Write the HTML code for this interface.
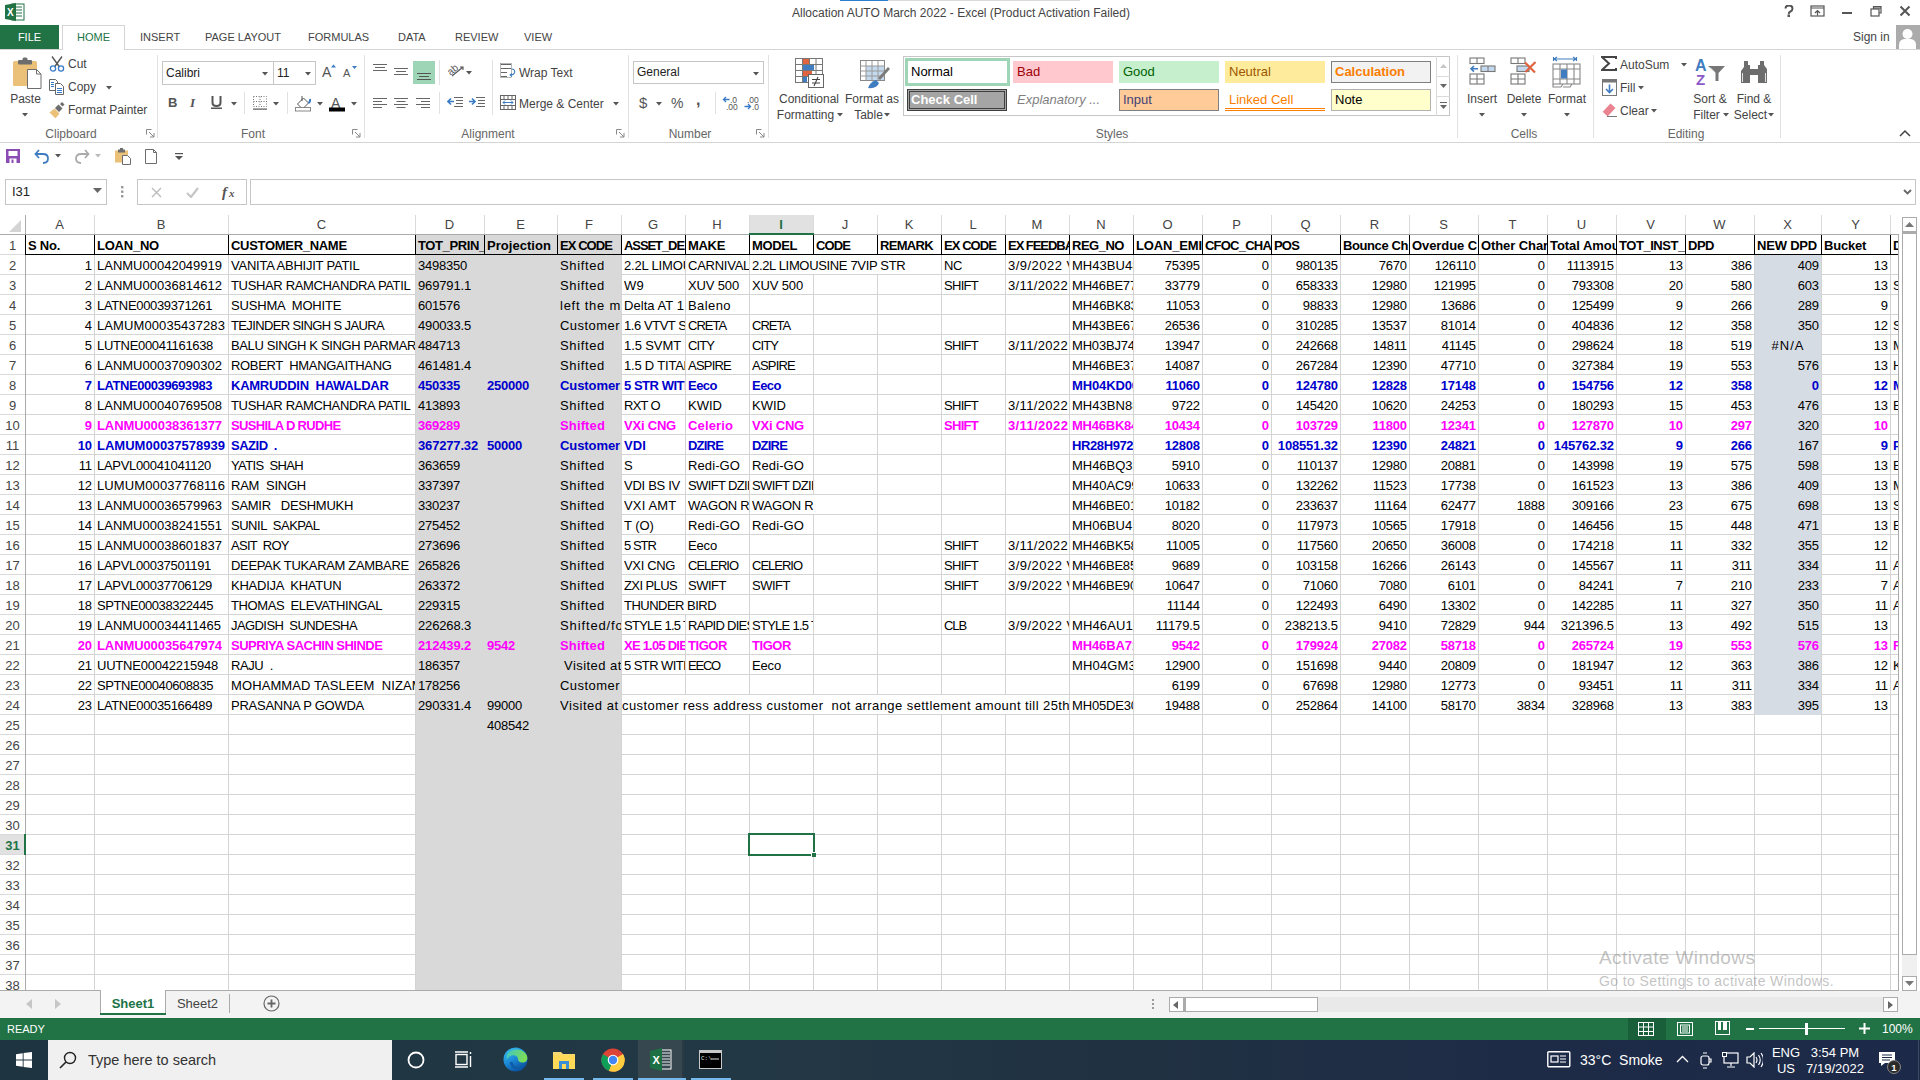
<!DOCTYPE html>
<html><head><meta charset="utf-8"><style>
html,body{margin:0;padding:0;width:1920px;height:1080px;overflow:hidden;background:#fff;font-family:'Liberation Sans', sans-serif;position:relative}
</style></head><body>
<svg style="position:absolute;left:5px;top:3px" width="20" height="18" viewBox="0 0 20 18"><rect x="7" y="1" width="12" height="16" fill="#fff" stroke="#217346" stroke-width="1"/><path d="M11 4h6M11 7h6M11 10h6M11 13h6" stroke="#217346"/><polygon points="0,2 11,0 11,18 0,16" fill="#217346"/><text x="2" y="13" font-size="10" font-weight="bold" fill="#fff" font-family="Liberation Sans">X</text></svg>
<div style="position:absolute;left:792px;top:5px;height:16px;line-height:16px;text-align:left;font-size:12px;color:#444;white-space:pre;font-family:'Liberation Sans',sans-serif">Allocation AUTO March 2022 - Excel (Product Activation Failed)</div>
<svg style="position:absolute;left:1784px;top:5px" width="10" height="12" viewBox="0 0 10 12"><path d="M1.5 3.5q0-3 3.5-3t3.5 3q0 2-2 3t-1.5 2.5" fill="none" stroke="#555" stroke-width="2"/><rect x="3.5" y="9.5" width="2.5" height="2.5" fill="#555"/></svg>
<svg style="position:absolute;left:1810px;top:5px" width="15" height="12" viewBox="0 0 15 12"><rect x="1" y="1" width="13" height="10" fill="none" stroke="#555" stroke-width="1.2"/><path d="M1 3h13" stroke="#555"/><path d="M7.5 10.5V5.5M5 8l2.5-2.5L10 8" stroke="#555" stroke-width="1.2" fill="none"/></svg>
<div style="position:absolute;left:1842px;top:12px;width:10px;height:2px;background:#555"></div>
<svg style="position:absolute;left:1870px;top:5px" width="12" height="12" viewBox="0 0 12 12"><rect x="1" y="4" width="8" height="7" fill="none" stroke="#555" stroke-width="1.2"/><path d="M3.5 4V1.5h7.5V8H9" fill="none" stroke="#555" stroke-width="1.2"/><path d="M3.5 3h7.5" stroke="#555" stroke-width="1.2"/></svg>
<svg style="position:absolute;left:1899px;top:5px" width="12" height="12" viewBox="0 0 12 12"><path d="M1.5 1.5l9 9M10.5 1.5l-9 9" stroke="#555" stroke-width="2"/></svg>
<div style="position:absolute;left:0px;top:25px;width:59px;height:25px;background:#217346"></div>
<div style="position:absolute;left:0px;top:25px;width:59px;height:25px;line-height:25px;text-align:center;font-size:11px;color:#fff;white-space:pre;">FILE</div>
<div style="position:absolute;left:62px;top:25px;width:63px;height:25px;background:#fff;border:1px solid #d4d4d4;border-bottom:none;box-sizing:border-box"></div>
<div style="position:absolute;left:0px;top:49px;width:62px;height:1px;background:#d4d4d4"></div>
<div style="position:absolute;left:125px;top:49px;width:1795px;height:1px;background:#d4d4d4"></div>
<div style="position:absolute;left:62px;top:25px;width:63px;height:25px;line-height:25px;text-align:center;font-size:11px;color:#217346;white-space:pre;">HOME</div>
<div style="position:absolute;left:140px;top:25px;height:25px;line-height:25px;text-align:left;font-size:11px;color:#444;white-space:pre;">INSERT</div>
<div style="position:absolute;left:205px;top:25px;height:25px;line-height:25px;text-align:left;font-size:11px;color:#444;white-space:pre;">PAGE LAYOUT</div>
<div style="position:absolute;left:308px;top:25px;height:25px;line-height:25px;text-align:left;font-size:11px;color:#444;white-space:pre;">FORMULAS</div>
<div style="position:absolute;left:398px;top:25px;height:25px;line-height:25px;text-align:left;font-size:11px;color:#444;white-space:pre;">DATA</div>
<div style="position:absolute;left:455px;top:25px;height:25px;line-height:25px;text-align:left;font-size:11px;color:#444;white-space:pre;">REVIEW</div>
<div style="position:absolute;left:524px;top:25px;height:25px;line-height:25px;text-align:left;font-size:11px;color:#444;white-space:pre;">VIEW</div>
<div style="position:absolute;left:1853px;top:28px;height:18px;line-height:18px;text-align:left;font-size:12px;color:#444;white-space:pre;">Sign in</div>
<div style="position:absolute;left:1896px;top:25px;width:24px;height:24px;background:#ababab"></div>
<svg style="position:absolute;left:1896px;top:25px" width="24" height="24" viewBox="0 0 24 24"><circle cx="11.5" cy="9" r="5" fill="#fff"/><path d="M3 24v-4q0-5 5-6h7q5 1 5 6v4z" fill="#fff"/></svg>
<div style="position:absolute;left:0px;top:142px;width:1920px;height:1px;background:#d4d4d4"></div>
<div style="position:absolute;left:157px;top:55px;width:1px;height:83px;background:#e1e1e1"></div>
<div style="position:absolute;left:364px;top:55px;width:1px;height:83px;background:#e1e1e1"></div>
<div style="position:absolute;left:628px;top:55px;width:1px;height:83px;background:#e1e1e1"></div>
<div style="position:absolute;left:768px;top:55px;width:1px;height:83px;background:#e1e1e1"></div>
<div style="position:absolute;left:1457px;top:55px;width:1px;height:83px;background:#e1e1e1"></div>
<div style="position:absolute;left:1593px;top:55px;width:1px;height:83px;background:#e1e1e1"></div>
<div style="position:absolute;left:1780px;top:55px;width:1px;height:83px;background:#e1e1e1"></div>
<div style="position:absolute;left:11px;top:126px;width:120px;height:16px;line-height:16px;text-align:center;font-size:12px;color:#666;white-space:pre;">Clipboard</div>
<div style="position:absolute;left:193px;top:126px;width:120px;height:16px;line-height:16px;text-align:center;font-size:12px;color:#666;white-space:pre;">Font</div>
<div style="position:absolute;left:428px;top:126px;width:120px;height:16px;line-height:16px;text-align:center;font-size:12px;color:#666;white-space:pre;">Alignment</div>
<div style="position:absolute;left:630px;top:126px;width:120px;height:16px;line-height:16px;text-align:center;font-size:12px;color:#666;white-space:pre;">Number</div>
<div style="position:absolute;left:1052px;top:126px;width:120px;height:16px;line-height:16px;text-align:center;font-size:12px;color:#666;white-space:pre;">Styles</div>
<div style="position:absolute;left:1464px;top:126px;width:120px;height:16px;line-height:16px;text-align:center;font-size:12px;color:#666;white-space:pre;">Cells</div>
<div style="position:absolute;left:1626px;top:126px;width:120px;height:16px;line-height:16px;text-align:center;font-size:12px;color:#666;white-space:pre;">Editing</div>
<svg style="position:absolute;left:146px;top:129px" width="9" height="9" viewBox="0 0 9 9"><path d="M0.5 0.5h5M0.5 0.5v5" stroke="#888" fill="none"/><path d="M3 3l5 5M8 4v4H4" stroke="#888" fill="none"/></svg>
<svg style="position:absolute;left:352px;top:129px" width="9" height="9" viewBox="0 0 9 9"><path d="M0.5 0.5h5M0.5 0.5v5" stroke="#888" fill="none"/><path d="M3 3l5 5M8 4v4H4" stroke="#888" fill="none"/></svg>
<svg style="position:absolute;left:616px;top:129px" width="9" height="9" viewBox="0 0 9 9"><path d="M0.5 0.5h5M0.5 0.5v5" stroke="#888" fill="none"/><path d="M3 3l5 5M8 4v4H4" stroke="#888" fill="none"/></svg>
<svg style="position:absolute;left:756px;top:129px" width="9" height="9" viewBox="0 0 9 9"><path d="M0.5 0.5h5M0.5 0.5v5" stroke="#888" fill="none"/><path d="M3 3l5 5M8 4v4H4" stroke="#888" fill="none"/></svg>
<svg style="position:absolute;left:1899px;top:129px" width="12" height="8" viewBox="0 0 12 8"><path d="M1 7l5-5 5 5" stroke="#444" stroke-width="1.5" fill="none"/></svg>
<svg style="position:absolute;left:12px;top:57px" width="30" height="32" viewBox="0 0 30 32"><rect x="1" y="4" width="24" height="25" rx="1.5" fill="#ebc17a"/><rect x="6" y="3" width="14" height="4.5" rx="1" fill="#6d6d6d"/><rect x="10.5" y="0.5" width="5" height="4" rx="1.5" fill="#6d6d6d"/><path d="M15.5 12.5h9l4.5 4.5v14.5h-13.5z" fill="#fff" stroke="#6d6d6d"/><path d="M24.5 12.5v4.5h4.5" fill="none" stroke="#6d6d6d"/></svg>
<div style="position:absolute;left:0px;top:92px;width:51px;height:14px;line-height:14px;text-align:center;font-size:12px;color:#444;white-space:pre;font-family:'Liberation Sans',sans-serif;">Paste</div>
<svg style="position:absolute;left:22px;top:113px" width="6" height="4" viewBox="0 0 6 4"><polygon points="0,0 6,0 3,3.5" fill="#555"/></svg>
<svg style="position:absolute;left:49px;top:56px" width="16" height="16" viewBox="0 0 16 16"><path d="M3 0.5L10.5 11M13 0.5L5.5 11" stroke="#555" stroke-width="1.4"/><circle cx="4" cy="12.5" r="2.6" fill="none" stroke="#3a7bc8" stroke-width="1.3"/><circle cx="12" cy="12.5" r="2.6" fill="none" stroke="#3a7bc8" stroke-width="1.3"/></svg>
<div style="position:absolute;left:68px;top:57px;height:14px;line-height:14px;text-align:left;font-size:12px;color:#444;white-space:pre;font-family:'Liberation Sans',sans-serif;">Cut</div>
<svg style="position:absolute;left:48px;top:79px" width="17" height="16" viewBox="0 0 17 16"><path d="M1.5 0.5h6l2 2v9h-8z" fill="#fff" stroke="#666"/><path d="M7.5 4.5h5l3 3v8h-8z" fill="#fff" stroke="#666"/><path d="M3 3.5h3M3 5.5h3M3 7.5h3M9 9.5h5M9 11.5h5M9 13.5h5" stroke="#3a7bc8"/></svg>
<div style="position:absolute;left:68px;top:80px;height:14px;line-height:14px;text-align:left;font-size:12px;color:#444;white-space:pre;font-family:'Liberation Sans',sans-serif;">Copy</div>
<svg style="position:absolute;left:106px;top:86px" width="6" height="4" viewBox="0 0 6 4"><polygon points="0,0 6,0 3,3.5" fill="#555"/></svg>
<svg style="position:absolute;left:49px;top:102px" width="17" height="16" viewBox="0 0 17 16"><path d="M0.5 10.5l5-4 5 5-4 5z" fill="#ebc17a"/><path d="M6 6l3.5-3.5 4 4L10 10z" fill="#6d6d6d"/><path d="M11 2l2-2 2.5 2.5-2 2z" fill="#6d6d6d"/></svg>
<div style="position:absolute;left:68px;top:103px;height:14px;line-height:14px;text-align:left;font-size:12px;color:#444;white-space:pre;font-family:'Liberation Sans',sans-serif;">Format Painter</div>
<div style="position:absolute;left:162px;top:61px;width:112px;height:24px;border:1px solid #c6c6c6;box-sizing:border-box;background:#fff"></div>
<div style="position:absolute;left:273px;top:61px;width:43px;height:24px;border:1px solid #c6c6c6;box-sizing:border-box;background:#fff"></div>
<div style="position:absolute;left:166px;top:66px;height:14px;line-height:14px;text-align:left;font-size:12px;color:#222;white-space:pre;font-family:'Liberation Sans',sans-serif;">Calibri</div>
<svg style="position:absolute;left:262px;top:72px" width="6" height="4" viewBox="0 0 6 4"><polygon points="0,0 6,0 3,3.5" fill="#555"/></svg>
<div style="position:absolute;left:277px;top:66px;height:14px;line-height:14px;text-align:left;font-size:12px;color:#222;white-space:pre;font-family:'Liberation Sans',sans-serif;">11</div>
<svg style="position:absolute;left:305px;top:72px" width="6" height="4" viewBox="0 0 6 4"><polygon points="0,0 6,0 3,3.5" fill="#555"/></svg>
<svg style="position:absolute;left:322px;top:64px" width="14" height="14" viewBox="0 0 14 14"><text x="0" y="13" font-size="14" fill="#555" font-family="Liberation Sans">A</text><polygon points="9,3.5 14,3.5 11.5,0.5" fill="#3a7bc8"/></svg>
<svg style="position:absolute;left:343px;top:66px" width="14" height="12" viewBox="0 0 14 12"><text x="0" y="11" font-size="11" fill="#555" font-family="Liberation Sans">A</text><polygon points="9,0 14,0 11.5,3" fill="#3a7bc8"/></svg>
<div style="position:absolute;left:168px;top:95px;height:15px;line-height:15px;text-align:left;font-size:13px;color:#555;white-space:pre;font-family:'Liberation Sans',sans-serif;font-weight:bold">B</div>
<div style="position:absolute;left:190px;top:95px;height:15px;line-height:15px;text-align:left;font-size:13px;color:#555;white-space:pre;font-family:'Liberation Sans',sans-serif;font-style:italic;font-family:Liberation Serif,serif;font-weight:bold">I</div>
<svg style="position:absolute;left:211px;top:96px" width="11" height="13" viewBox="0 0 11 13"><path d="M1.5 0v6.5q0 3.5 4 3.5t4-3.5V0" fill="none" stroke="#555" stroke-width="2"/><rect x="0" y="11.5" width="11" height="1.5" fill="#555"/></svg>
<svg style="position:absolute;left:231px;top:102px" width="6" height="4" viewBox="0 0 6 4"><polygon points="0,0 6,0 3,3.5" fill="#555"/></svg>
<div style="position:absolute;left:244px;top:92px;width:1px;height:22px;background:#e1e1e1"></div>
<svg style="position:absolute;left:253px;top:96px" width="14" height="14" viewBox="0 0 14 14"><path d="M0.5 0.5h13v10h-13zM7 0.5v10M0.5 5.5h13" fill="none" stroke="#777" stroke-dasharray="1,1.5"/><rect x="0" y="12.5" width="14" height="1.2" fill="#555"/></svg>
<svg style="position:absolute;left:273px;top:102px" width="6" height="4" viewBox="0 0 6 4"><polygon points="0,0 6,0 3,3.5" fill="#555"/></svg>
<div style="position:absolute;left:287px;top:92px;width:1px;height:22px;background:#e1e1e1"></div>
<svg style="position:absolute;left:295px;top:95px" width="17" height="17" viewBox="0 0 17 17"><path d="M2.5 9L8.5 3l5 5-6 6z" fill="#fff" stroke="#555"/><path d="M7 1v5" stroke="#555"/><path d="M13.5 8q2-1 1.5-4" stroke="#3a7bc8" stroke-width="2" fill="none"/><rect x="0.5" y="12.5" width="15" height="3.5" fill="#fff" stroke="#888"/></svg>
<svg style="position:absolute;left:317px;top:102px" width="6" height="4" viewBox="0 0 6 4"><polygon points="0,0 6,0 3,3.5" fill="#555"/></svg>
<svg style="position:absolute;left:329px;top:96px" width="17" height="16" viewBox="0 0 17 16"><text x="2" y="12" font-size="14" fill="#555" font-family="Liberation Sans">A</text><rect x="0" y="11.5" width="16" height="4" fill="#000"/></svg>
<svg style="position:absolute;left:351px;top:102px" width="6" height="4" viewBox="0 0 6 4"><polygon points="0,0 6,0 3,3.5" fill="#555"/></svg>
<svg style="position:absolute;left:373px;top:63px" width="14" height="10" viewBox="0 0 14 10"><path d="M0 1.5h14M2 4.5h10M0 7.5h14" stroke="#666" stroke-width="1"/></svg>
<div style="position:absolute;left:413px;top:61px;width:22px;height:23px;background:#9fd5b7"></div>
<svg style="position:absolute;left:394px;top:67px" width="14" height="10" viewBox="0 0 14 10"><path d="M0 1.5h14M2 4.5h10M0 7.5h14" stroke="#666" stroke-width="1"/></svg>
<svg style="position:absolute;left:417px;top:71px" width="14" height="10" viewBox="0 0 14 10"><path d="M0 2.5h14M2 5.5h10M0 8.5h14" stroke="#555" stroke-width="1"/></svg>
<div style="position:absolute;left:439px;top:60px;width:1px;height:25px;background:#e1e1e1"></div>
<svg style="position:absolute;left:447px;top:63px" width="18" height="16" viewBox="0 0 18 16"><text x="1" y="10" font-size="10" fill="#555" font-family="Liberation Sans" transform="rotate(-40 6 8)">ab</text><path d="M5 13L16 4M13 4h3v3" stroke="#555" stroke-width="1.1" fill="none"/></svg>
<svg style="position:absolute;left:466px;top:71px" width="6" height="4" viewBox="0 0 6 4"><polygon points="0,0 6,0 3,3.5" fill="#555"/></svg>
<div style="position:absolute;left:492px;top:60px;width:1px;height:55px;background:#e1e1e1"></div>
<svg style="position:absolute;left:500px;top:63px" width="17" height="15" viewBox="0 0 17 15"><path d="M1 1.5h10M1 5.5h10M1 9.5h6M1 13.5h6" stroke="#666" stroke-width="1.2"/><rect x="0.5" y="0.5" width="11" height="14" fill="none" stroke="#888" stroke-width="0.6"/><path d="M11.5 6q4 0 3 4-1 2-4 2M12 10.5l-1.8 1.5 1.8 1.5" stroke="#3a7bc8" stroke-width="1.1" fill="none"/></svg>
<div style="position:absolute;left:519px;top:66px;height:14px;line-height:14px;text-align:left;font-size:12px;color:#444;white-space:pre;font-family:'Liberation Sans',sans-serif;">Wrap Text</div>
<svg style="position:absolute;left:373px;top:97px" width="14" height="12" viewBox="0 0 14 12"><path d="M0 1.5h14M0 4.5h9M0 7.5h14M0 10.5h9" stroke="#666" stroke-width="1"/></svg>
<svg style="position:absolute;left:394px;top:97px" width="14" height="12" viewBox="0 0 14 12"><path d="M0 1.5h14M2.5 4.5h9M0 7.5h14M2.5 10.5h9" stroke="#666" stroke-width="1"/></svg>
<svg style="position:absolute;left:416px;top:97px" width="14" height="12" viewBox="0 0 14 12"><path d="M0 1.5h14M5 4.5h9M0 7.5h14M5 10.5h9" stroke="#666" stroke-width="1"/></svg>
<div style="position:absolute;left:439px;top:92px;width:1px;height:22px;background:#e1e1e1"></div>
<svg style="position:absolute;left:447px;top:96px" width="16" height="12" viewBox="0 0 16 12"><path d="M7 1.5h9M9 4.5h7M9 7.5h7M7 10.5h9" stroke="#666" stroke-width="1"/><path d="M1 5.5h6M4 2.5l-3 3 3 3" stroke="#3a7bc8" stroke-width="1.6" fill="none"/></svg>
<svg style="position:absolute;left:469px;top:96px" width="16" height="12" viewBox="0 0 16 12"><path d="M7 1.5h9M9 4.5h7M9 7.5h7M7 10.5h9" stroke="#666" stroke-width="1"/><path d="M0 5.5h6M3 2.5l3 3-3 3" stroke="#3a7bc8" stroke-width="1.6" fill="none"/></svg>
<svg style="position:absolute;left:500px;top:95px" width="16" height="15" viewBox="0 0 16 15"><rect x="0.5" y="0.5" width="15" height="14" fill="#fff" stroke="#666"/><path d="M0.5 4.5h15M0.5 10.5h15M8 0.5v4M8 10.5v4M4 0.5v4M4 10.5v4M12 0.5v4M12 10.5v4" stroke="#666"/><path d="M3 7.5h10M5 5.5l-2 2 2 2M11 5.5l2 2-2 2" stroke="#3a7bc8" fill="none"/></svg>
<div style="position:absolute;left:519px;top:97px;height:14px;line-height:14px;text-align:left;font-size:12px;color:#444;white-space:pre;font-family:'Liberation Sans',sans-serif;">Merge &amp; Center</div>
<svg style="position:absolute;left:613px;top:102px" width="6" height="4" viewBox="0 0 6 4"><polygon points="0,0 6,0 3,3.5" fill="#555"/></svg>
<div style="position:absolute;left:633px;top:61px;width:131px;height:23px;border:1px solid #c6c6c6;box-sizing:border-box;background:#fff"></div>
<div style="position:absolute;left:637px;top:65px;height:14px;line-height:14px;text-align:left;font-size:12px;color:#222;white-space:pre;font-family:'Liberation Sans',sans-serif;">General</div>
<svg style="position:absolute;left:753px;top:72px" width="6" height="4" viewBox="0 0 6 4"><polygon points="0,0 6,0 3,3.5" fill="#555"/></svg>
<div style="position:absolute;left:639px;top:94px;height:17px;line-height:17px;text-align:left;font-size:15px;color:#555;white-space:pre;font-family:'Liberation Sans',sans-serif;">$</div>
<svg style="position:absolute;left:656px;top:102px" width="6" height="4" viewBox="0 0 6 4"><polygon points="0,0 6,0 3,3.5" fill="#555"/></svg>
<div style="position:absolute;left:671px;top:95px;height:16px;line-height:16px;text-align:left;font-size:14px;color:#555;white-space:pre;font-family:'Liberation Sans',sans-serif;">%</div>
<div style="position:absolute;left:696px;top:92px;height:16px;line-height:16px;text-align:left;font-size:16px;color:#555;white-space:pre;font-family:'Liberation Sans',sans-serif;font-weight:bold">,</div>
<div style="position:absolute;left:715px;top:92px;width:1px;height:22px;background:#e1e1e1"></div>
<svg style="position:absolute;left:722px;top:95px" width="17" height="16" viewBox="0 0 17 16"><text x="8" y="7.5" font-size="8.5" fill="#555" font-family="Liberation Sans">.0</text><text x="4" y="15" font-size="8.5" fill="#555" font-family="Liberation Sans">.00</text><path d="M1.5 4.5h6M4 2l-2.5 2.5L4 7" stroke="#3a7bc8" fill="none" stroke-width="1.3"/></svg>
<svg style="position:absolute;left:744px;top:95px" width="17" height="16" viewBox="0 0 17 16"><text x="3" y="7.5" font-size="8.5" fill="#555" font-family="Liberation Sans">.00</text><text x="8" y="15" font-size="8.5" fill="#555" font-family="Liberation Sans">.0</text><path d="M0.5 11.5h6M4 9l2.5 2.5L4 14" stroke="#3a7bc8" fill="none" stroke-width="1.3"/></svg>
<svg style="position:absolute;left:794px;top:57px" width="33" height="32" viewBox="0 0 33 32"><g fill="none" stroke="#777" stroke-width="1"><rect x="1.5" y="1.5" width="27" height="24"/><path d="M8.5 1.5v24M15.5 1.5v24M22 1.5v24M1.5 7.5h27M1.5 13.5h27M1.5 19.5h27"/></g><rect x="9" y="2" width="6" height="5" fill="#e0643f"/><rect x="9" y="8" width="11" height="5" fill="#3f7dc0"/><rect x="9" y="14" width="9" height="5" fill="#e0643f"/><rect x="9" y="20" width="4" height="5" fill="#3f7dc0"/><rect x="14.5" y="17.5" width="15" height="13" fill="#fff" stroke="#666"/><path d="M18 22.5h8M18 26h8M20 29l4-9" stroke="#444" stroke-width="1.1"/></svg>
<div style="position:absolute;left:749px;top:92px;width:120px;height:14px;line-height:14px;text-align:center;font-size:12px;color:#444;white-space:pre;font-family:'Liberation Sans',sans-serif;">Conditional</div>
<div style="position:absolute;left:749px;top:108px;width:113px;height:14px;line-height:14px;text-align:center;font-size:12px;color:#444;white-space:pre;font-family:'Liberation Sans',sans-serif;">Formatting</div>
<svg style="position:absolute;left:837px;top:113px" width="6" height="4" viewBox="0 0 6 4"><polygon points="0,0 6,0 3,3.5" fill="#555"/></svg>
<svg style="position:absolute;left:859px;top:59px" width="32" height="30" viewBox="0 0 32 30"><rect x="1.5" y="1.5" width="24" height="20" fill="#fff" stroke="#888"/><rect x="7" y="7" width="18" height="14" fill="#c5d9ee"/><path d="M7 1.5v20M13 1.5v20M19 1.5v20M1.5 7h24M1.5 12h24M1.5 17h24" stroke="#999"/><path d="M19 19l10-11 2 2-10 11z" fill="#7a7a7a"/><path d="M9 29q2-6 8-8l3 3q-2 6-11 5z" fill="#3f7dc0"/></svg>
<div style="position:absolute;left:812px;top:92px;width:120px;height:14px;line-height:14px;text-align:center;font-size:12px;color:#444;white-space:pre;font-family:'Liberation Sans',sans-serif;">Format as</div>
<div style="position:absolute;left:812px;top:108px;width:113px;height:14px;line-height:14px;text-align:center;font-size:12px;color:#444;white-space:pre;font-family:'Liberation Sans',sans-serif;">Table</div>
<svg style="position:absolute;left:884px;top:113px" width="6" height="4" viewBox="0 0 6 4"><polygon points="0,0 6,0 3,3.5" fill="#555"/></svg>
<div style="position:absolute;left:903px;top:56px;width:547px;height:60px;border:1px solid #c6c6c6;box-sizing:border-box;background:#fff"></div>
<div style="position:absolute;left:905px;top:58px;width:105px;height:28px;border:3px solid #9fd5b7;box-sizing:border-box;background:#fff"></div>
<div style="position:absolute;left:911px;top:64px;height:15px;line-height:15px;text-align:left;font-size:13px;color:#000;white-space:pre;font-family:'Liberation Sans',sans-serif;">Normal</div>
<div style="position:absolute;left:1013px;top:61px;width:100px;height:22px;background:#ffc7ce"></div>
<div style="position:absolute;left:1017px;top:64px;height:15px;line-height:15px;text-align:left;font-size:13px;color:#9c0006;white-space:pre;font-family:'Liberation Sans',sans-serif;">Bad</div>
<div style="position:absolute;left:1119px;top:61px;width:100px;height:22px;background:#c6efce"></div>
<div style="position:absolute;left:1123px;top:64px;height:15px;line-height:15px;text-align:left;font-size:13px;color:#006100;white-space:pre;font-family:'Liberation Sans',sans-serif;">Good</div>
<div style="position:absolute;left:1225px;top:61px;width:100px;height:22px;background:#ffeb9c"></div>
<div style="position:absolute;left:1229px;top:64px;height:15px;line-height:15px;text-align:left;font-size:13px;color:#9c5700;white-space:pre;font-family:'Liberation Sans',sans-serif;">Neutral</div>
<div style="position:absolute;left:1331px;top:61px;width:100px;height:22px;background:#f2f2f2;border:1px solid #7f7f7f;box-sizing:border-box"></div>
<div style="position:absolute;left:1335px;top:64px;height:15px;line-height:15px;text-align:left;font-size:13px;color:#fa7d00;white-space:pre;font-family:'Liberation Sans',sans-serif;font-weight:bold">Calculation</div>
<div style="position:absolute;left:907px;top:89px;width:100px;height:22px;background:#a5a5a5;border:3px double #3f3f3f;box-sizing:border-box"></div>
<div style="position:absolute;left:911px;top:92px;height:15px;line-height:15px;text-align:left;font-size:13px;color:#fff;white-space:pre;font-family:'Liberation Sans',sans-serif;font-weight:bold">Check Cell</div>
<div style="position:absolute;left:1017px;top:92px;height:15px;line-height:15px;text-align:left;font-size:13px;color:#7f7f7f;white-space:pre;font-family:'Liberation Sans',sans-serif;font-style:italic">Explanatory ...</div>
<div style="position:absolute;left:1119px;top:89px;width:100px;height:22px;background:#ffcc99;border:1px solid #7f7f7f;box-sizing:border-box"></div>
<div style="position:absolute;left:1123px;top:92px;height:15px;line-height:15px;text-align:left;font-size:13px;color:#3f3f76;white-space:pre;font-family:'Liberation Sans',sans-serif;">Input</div>
<div style="position:absolute;left:1229px;top:92px;height:15px;line-height:15px;text-align:left;font-size:13px;color:#fa7d00;white-space:pre;font-family:'Liberation Sans',sans-serif;">Linked Cell</div>
<div style="position:absolute;left:1225px;top:108px;width:100px;height:3px;border-top:1px solid #ff8001;border-bottom:1px solid #ff8001;box-sizing:border-box"></div>
<div style="position:absolute;left:1331px;top:89px;width:100px;height:22px;background:#ffffcc;border:1px solid #b2b2b2;box-sizing:border-box"></div>
<div style="position:absolute;left:1335px;top:92px;height:15px;line-height:15px;text-align:left;font-size:13px;color:#000;white-space:pre;font-family:'Liberation Sans',sans-serif;">Note</div>
<div style="position:absolute;left:1436px;top:56px;width:14px;height:60px;border-left:1px solid #dadada;box-sizing:border-box"></div>
<div style="position:absolute;left:1436px;top:76px;width:14px;height:1px;background:#dadada"></div>
<div style="position:absolute;left:1436px;top:96px;width:14px;height:1px;background:#dadada"></div>
<svg style="position:absolute;left:1440px;top:64px" width="7" height="4" viewBox="0 0 7 4"><polygon points="0,4 3.5,0 7,4" fill="#c6c6c6"/></svg>
<svg style="position:absolute;left:1440px;top:84px" width="7" height="4" viewBox="0 0 7 4"><polygon points="0,0 7,0 3.5,4" fill="#666"/></svg>
<svg style="position:absolute;left:1440px;top:102px" width="7" height="7" viewBox="0 0 7 7"><rect x="0" y="0" width="7" height="1" fill="#666"/><polygon points="0,3 7,3 3.5,7" fill="#666"/></svg>
<svg style="position:absolute;left:1469px;top:57px" width="28" height="29" viewBox="0 0 28 29"><g fill="none" stroke="#777" stroke-width="1.1"><rect x="1" y="1" width="14" height="5.5"/><path d="M8 1v5.5"/><rect x="1" y="17" width="14" height="10"/><path d="M8 17v10M1 22h14"/></g><rect x="12" y="9" width="14" height="5.5" fill="#c5d9ee" stroke="#777" stroke-width="1.1"/><path d="M19 9v5.5" stroke="#777"/><path d="M2 11.8h7M5 9l-3 2.8 3 2.8" stroke="#3f7dc0" stroke-width="1.6" fill="none"/></svg>
<div style="position:absolute;left:1442px;top:92px;width:80px;height:14px;line-height:14px;text-align:center;font-size:12px;color:#444;white-space:pre;font-family:'Liberation Sans',sans-serif;">Insert</div>
<svg style="position:absolute;left:1479px;top:113px" width="6" height="4" viewBox="0 0 6 4"><polygon points="0,0 6,0 3,3.5" fill="#555"/></svg>
<svg style="position:absolute;left:1510px;top:57px" width="32" height="30" viewBox="0 0 32 30"><g fill="none" stroke="#777" stroke-width="1.1"><rect x="1" y="1" width="14" height="5.5"/><path d="M8 1v5.5"/><rect x="1" y="17" width="14" height="10"/><path d="M8 17v10M1 22h14"/></g><rect x="7" y="9" width="12" height="5.5" fill="#c5d9ee" stroke="#777" stroke-width="1.1"/><path d="M14 11l8-6M14 5l10 9M24 5l-11 10" stroke="none"/><path d="M15 5.5l10 10M25.5 5l-10 10" stroke="#e0643f" stroke-width="2.2"/></svg>
<div style="position:absolute;left:1484px;top:92px;width:80px;height:14px;line-height:14px;text-align:center;font-size:12px;color:#444;white-space:pre;font-family:'Liberation Sans',sans-serif;">Delete</div>
<svg style="position:absolute;left:1521px;top:113px" width="6" height="4" viewBox="0 0 6 4"><polygon points="0,0 6,0 3,3.5" fill="#555"/></svg>
<svg style="position:absolute;left:1552px;top:56px" width="30" height="33" viewBox="0 0 30 33"><path d="M1.5 1v4M24.5 1v4M2 3h22M5 1l-3 2 3 2M21 1l3 2-3 2" stroke="#3f7dc0" stroke-width="1.1" fill="none"/><g fill="none" stroke="#888" stroke-width="1.1"><rect x="1" y="8" width="27" height="20"/><path d="M8 8v20M15 8v20M22 8v20M1 13h27M1 23h27M1 28l0 3h8l2-3M11 31h7l2-3"/></g><rect x="9" y="13.5" width="6" height="9" fill="#3f7dc0"/></svg>
<div style="position:absolute;left:1527px;top:92px;width:80px;height:14px;line-height:14px;text-align:center;font-size:12px;color:#444;white-space:pre;font-family:'Liberation Sans',sans-serif;">Format</div>
<svg style="position:absolute;left:1564px;top:113px" width="6" height="4" viewBox="0 0 6 4"><polygon points="0,0 6,0 3,3.5" fill="#555"/></svg>
<svg style="position:absolute;left:1601px;top:56px" width="16" height="15" viewBox="0 0 16 15"><path d="M15 3V1H1l7 6.5L1 14h14v-2" fill="none" stroke="#444" stroke-width="2"/></svg>
<div style="position:absolute;left:1620px;top:58px;height:14px;line-height:14px;text-align:left;font-size:12px;color:#444;white-space:pre;font-family:'Liberation Sans',sans-serif;">AutoSum</div>
<svg style="position:absolute;left:1681px;top:63px" width="6" height="4" viewBox="0 0 6 4"><polygon points="0,0 6,0 3,3.5" fill="#555"/></svg>
<svg style="position:absolute;left:1602px;top:79px" width="15" height="17" viewBox="0 0 15 17"><rect x="0.5" y="0.5" width="14" height="16" fill="#fff" stroke="#777"/><rect x="0.5" y="0.5" width="14" height="3" fill="#777"/><path d="M7.5 5.5v8M4 10l3.5 3.5L11 10" stroke="#3f7dc0" stroke-width="1.6" fill="none"/></svg>
<div style="position:absolute;left:1620px;top:81px;height:14px;line-height:14px;text-align:left;font-size:12px;color:#444;white-space:pre;font-family:'Liberation Sans',sans-serif;">Fill</div>
<svg style="position:absolute;left:1638px;top:86px" width="6" height="4" viewBox="0 0 6 4"><polygon points="0,0 6,0 3,3.5" fill="#555"/></svg>
<svg style="position:absolute;left:1602px;top:102px" width="16" height="15" viewBox="0 0 16 15"><path d="M0.5 10L8.5 1.5l5 4.5-8 8.5z" fill="#e8838f"/><path d="M0.5 10l4 4" stroke="#fff" stroke-width="0.8"/><path d="M5 14.5h10" stroke="#777"/></svg>
<div style="position:absolute;left:1620px;top:104px;height:14px;line-height:14px;text-align:left;font-size:12px;color:#444;white-space:pre;font-family:'Liberation Sans',sans-serif;">Clear</div>
<svg style="position:absolute;left:1651px;top:109px" width="6" height="4" viewBox="0 0 6 4"><polygon points="0,0 6,0 3,3.5" fill="#555"/></svg>
<svg style="position:absolute;left:1695px;top:58px" width="32" height="28" viewBox="0 0 32 28"><text x="0" y="13" font-size="16" font-weight="bold" font-family="Liberation Sans" fill="#3f7dc0">A</text><text x="1" y="27" font-size="15" font-weight="bold" font-family="Liberation Sans" fill="#8b58c9">Z</text><path d="M13 8h17l-6.5 7v8h-3v-8z" fill="#777"/><path d="M15 9.5l5 5" stroke="#fff" stroke-width="0.8"/></svg>
<div style="position:absolute;left:1650px;top:92px;width:120px;height:14px;line-height:14px;text-align:center;font-size:12px;color:#444;white-space:pre;font-family:'Liberation Sans',sans-serif;">Sort &amp;</div>
<div style="position:absolute;left:1650px;top:108px;width:113px;height:14px;line-height:14px;text-align:center;font-size:12px;color:#444;white-space:pre;font-family:'Liberation Sans',sans-serif;">Filter</div>
<svg style="position:absolute;left:1723px;top:113px" width="6" height="4" viewBox="0 0 6 4"><polygon points="0,0 6,0 3,3.5" fill="#555"/></svg>
<svg style="position:absolute;left:1740px;top:59px" width="28" height="25" viewBox="0 0 28 25"><path d="M4 2h4v4h2v18H1V12l3-4z" fill="#6d6d6d"/><path d="M20 2h4v4l3 4v14h-9V6h2z" fill="#6d6d6d"/><rect x="10" y="10" width="8" height="6" fill="#6d6d6d"/><path d="M2.5 14v9M25.5 14v9" stroke="#fff" stroke-width="0.8"/></svg>
<div style="position:absolute;left:1694px;top:92px;width:120px;height:14px;line-height:14px;text-align:center;font-size:12px;color:#444;white-space:pre;font-family:'Liberation Sans',sans-serif;">Find &amp;</div>
<div style="position:absolute;left:1694px;top:108px;width:113px;height:14px;line-height:14px;text-align:center;font-size:12px;color:#444;white-space:pre;font-family:'Liberation Sans',sans-serif;">Select</div>
<svg style="position:absolute;left:1768px;top:113px" width="6" height="4" viewBox="0 0 6 4"><polygon points="0,0 6,0 3,3.5" fill="#555"/></svg>
<div style="position:absolute;left:840px;top:0px;width:48px;height:1px;background:#2b7cd3"></div>
<div style="position:absolute;left:888px;top:0px;width:192px;height:1px;background:#d9d9d9"></div>
<svg style="position:absolute;left:6px;top:149px" width="14" height="14" viewBox="0 0 14 14"><path d="M0 0h14v14H0z" fill="#8b4cb4"/><rect x="2.5" y="2" width="9" height="5" fill="#fff"/><rect x="3.5" y="9.5" width="7" height="4.5" fill="#fff"/><rect x="5.5" y="10.5" width="2" height="3.5" fill="#8b4cb4"/></svg>
<svg style="position:absolute;left:34px;top:148px" width="16" height="16" viewBox="0 0 16 16"><path d="M5 2L1.5 6 5 10" fill="none" stroke="#3f7dc0" stroke-width="1.8"/><path d="M2 6h7q5 0 5 4.5T9 15" fill="none" stroke="#3f7dc0" stroke-width="1.8"/></svg>
<svg style="position:absolute;left:55px;top:154px" width="6" height="4" viewBox="0 0 6 4"><polygon points="0,0 6,0 3,3.5" fill="#555"/></svg>
<svg style="position:absolute;left:74px;top:148px" width="16" height="16" viewBox="0 0 16 16"><path d="M11 2l3.5 4L11 10" fill="none" stroke="#aaa" stroke-width="1.8"/><path d="M14 6H7Q2 6 2 10.5T7 15" fill="none" stroke="#aaa" stroke-width="1.8"/></svg>
<svg style="position:absolute;left:95px;top:154px" width="6" height="4" viewBox="0 0 6 4"><polygon points="0,0 6,0 3,3.5" fill="#bbb"/></svg>
<svg style="position:absolute;left:115px;top:148px" width="16" height="17" viewBox="0 0 16 17"><rect x="0" y="2.5" width="13" height="12" fill="#ebc17a"/><rect x="3" y="1.5" width="7" height="3" fill="#6d6d6d"/><rect x="5" y="0" width="3" height="2" fill="#6d6d6d"/><path d="M7.5 7.5h5l3 3v6h-8z" fill="#fff" stroke="#6d6d6d"/></svg>
<svg style="position:absolute;left:145px;top:149px" width="12" height="15" viewBox="0 0 12 15"><path d="M0.5 0.5h8l3 3v11h-11z" fill="#fff" stroke="#6d6d6d"/><path d="M8.5 0.5v3h3" fill="none" stroke="#6d6d6d"/></svg>
<svg style="position:absolute;left:175px;top:153px" width="8" height="8" viewBox="0 0 8 8"><rect x="0" y="0" width="8" height="1.2" fill="#555"/><polygon points="0,3 8,3 4,7" fill="#555"/></svg>
<div style="position:absolute;left:5px;top:179px;width:102px;height:26px;border:1px solid #c6c6c6;box-sizing:border-box;background:#fff"></div>
<div style="position:absolute;left:12px;top:184px;height:16px;line-height:16px;text-align:left;font-size:13px;color:#222;white-space:pre;font-family:'Liberation Sans',sans-serif;">I31</div>
<svg style="position:absolute;left:93px;top:188px" width="9" height="5" viewBox="0 0 9 5"><polygon points="0,0 9,0 4.5,5" fill="#666"/></svg>
<svg style="position:absolute;left:121px;top:186px" width="3" height="12" viewBox="0 0 3 12"><rect x="0" y="0" width="2.4" height="2.4" fill="#999"/><rect x="0" y="4.5" width="2.4" height="2.4" fill="#999"/><rect x="0" y="9" width="2.4" height="2.4" fill="#999"/></svg>
<div style="position:absolute;left:137px;top:179px;width:110px;height:26px;border:1px solid #c6c6c6;box-sizing:border-box;background:#fff"></div>
<svg style="position:absolute;left:151px;top:187px" width="11" height="11" viewBox="0 0 11 11"><path d="M1 1l9 9M10 1l-9 9" stroke="#bbb" stroke-width="1.4"/></svg>
<svg style="position:absolute;left:186px;top:187px" width="13" height="11" viewBox="0 0 13 11"><path d="M1 6l4 4 7-9" stroke="#c6c6c6" stroke-width="2.2" fill="none"/></svg>
<div style="position:absolute;left:222px;top:183px;height:18px;line-height:18px;text-align:left;font-size:15px;color:#555;white-space:pre;font-family:'Liberation Serif',serif;font-style:italic;font-weight:bold">f</div>
<div style="position:absolute;left:229px;top:186px;height:14px;line-height:14px;text-align:left;font-size:11px;color:#555;white-space:pre;font-family:'Liberation Serif',serif;font-style:italic;font-weight:bold">x</div>
<div style="position:absolute;left:250px;top:179px;width:1666px;height:26px;border:1px solid #c6c6c6;box-sizing:border-box;background:#fff"></div>
<svg style="position:absolute;left:1903px;top:189px" width="9" height="6" viewBox="0 0 9 6"><path d="M1 1l3.5 3.5L8 1" stroke="#666" stroke-width="1.8" fill="none"/></svg>
<div style="position:absolute;left:0px;top:215px;width:1898px;height:775px;background:#fff;overflow:hidden"></div>
<div style="position:absolute;left:94px;top:235px;width:1px;height:755px;background:#d4d4d4"></div>
<div style="position:absolute;left:228px;top:235px;width:1px;height:755px;background:#d4d4d4"></div>
<div style="position:absolute;left:415px;top:235px;width:1px;height:755px;background:#d4d4d4"></div>
<div style="position:absolute;left:484px;top:235px;width:1px;height:755px;background:#d4d4d4"></div>
<div style="position:absolute;left:557px;top:235px;width:1px;height:755px;background:#d4d4d4"></div>
<div style="position:absolute;left:621px;top:235px;width:1px;height:755px;background:#d4d4d4"></div>
<div style="position:absolute;left:685px;top:235px;width:1px;height:755px;background:#d4d4d4"></div>
<div style="position:absolute;left:749px;top:235px;width:1px;height:755px;background:#d4d4d4"></div>
<div style="position:absolute;left:813px;top:235px;width:1px;height:755px;background:#d4d4d4"></div>
<div style="position:absolute;left:877px;top:235px;width:1px;height:755px;background:#d4d4d4"></div>
<div style="position:absolute;left:941px;top:235px;width:1px;height:755px;background:#d4d4d4"></div>
<div style="position:absolute;left:1005px;top:235px;width:1px;height:755px;background:#d4d4d4"></div>
<div style="position:absolute;left:1069px;top:235px;width:1px;height:755px;background:#d4d4d4"></div>
<div style="position:absolute;left:1133px;top:235px;width:1px;height:755px;background:#d4d4d4"></div>
<div style="position:absolute;left:1202px;top:235px;width:1px;height:755px;background:#d4d4d4"></div>
<div style="position:absolute;left:1271px;top:235px;width:1px;height:755px;background:#d4d4d4"></div>
<div style="position:absolute;left:1340px;top:235px;width:1px;height:755px;background:#d4d4d4"></div>
<div style="position:absolute;left:1409px;top:235px;width:1px;height:755px;background:#d4d4d4"></div>
<div style="position:absolute;left:1478px;top:235px;width:1px;height:755px;background:#d4d4d4"></div>
<div style="position:absolute;left:1547px;top:235px;width:1px;height:755px;background:#d4d4d4"></div>
<div style="position:absolute;left:1616px;top:235px;width:1px;height:755px;background:#d4d4d4"></div>
<div style="position:absolute;left:1685px;top:235px;width:1px;height:755px;background:#d4d4d4"></div>
<div style="position:absolute;left:1754px;top:235px;width:1px;height:755px;background:#d4d4d4"></div>
<div style="position:absolute;left:1821px;top:235px;width:1px;height:755px;background:#d4d4d4"></div>
<div style="position:absolute;left:1890px;top:235px;width:1px;height:755px;background:#d4d4d4"></div>
<div style="position:absolute;left:26px;top:254px;width:1872px;height:1px;background:#d4d4d4"></div>
<div style="position:absolute;left:26px;top:274px;width:1872px;height:1px;background:#d4d4d4"></div>
<div style="position:absolute;left:26px;top:294px;width:1872px;height:1px;background:#d4d4d4"></div>
<div style="position:absolute;left:26px;top:314px;width:1872px;height:1px;background:#d4d4d4"></div>
<div style="position:absolute;left:26px;top:334px;width:1872px;height:1px;background:#d4d4d4"></div>
<div style="position:absolute;left:26px;top:354px;width:1872px;height:1px;background:#d4d4d4"></div>
<div style="position:absolute;left:26px;top:374px;width:1872px;height:1px;background:#d4d4d4"></div>
<div style="position:absolute;left:26px;top:394px;width:1872px;height:1px;background:#d4d4d4"></div>
<div style="position:absolute;left:26px;top:414px;width:1872px;height:1px;background:#d4d4d4"></div>
<div style="position:absolute;left:26px;top:434px;width:1872px;height:1px;background:#d4d4d4"></div>
<div style="position:absolute;left:26px;top:454px;width:1872px;height:1px;background:#d4d4d4"></div>
<div style="position:absolute;left:26px;top:474px;width:1872px;height:1px;background:#d4d4d4"></div>
<div style="position:absolute;left:26px;top:494px;width:1872px;height:1px;background:#d4d4d4"></div>
<div style="position:absolute;left:26px;top:514px;width:1872px;height:1px;background:#d4d4d4"></div>
<div style="position:absolute;left:26px;top:534px;width:1872px;height:1px;background:#d4d4d4"></div>
<div style="position:absolute;left:26px;top:554px;width:1872px;height:1px;background:#d4d4d4"></div>
<div style="position:absolute;left:26px;top:574px;width:1872px;height:1px;background:#d4d4d4"></div>
<div style="position:absolute;left:26px;top:594px;width:1872px;height:1px;background:#d4d4d4"></div>
<div style="position:absolute;left:26px;top:614px;width:1872px;height:1px;background:#d4d4d4"></div>
<div style="position:absolute;left:26px;top:634px;width:1872px;height:1px;background:#d4d4d4"></div>
<div style="position:absolute;left:26px;top:654px;width:1872px;height:1px;background:#d4d4d4"></div>
<div style="position:absolute;left:26px;top:674px;width:1872px;height:1px;background:#d4d4d4"></div>
<div style="position:absolute;left:26px;top:694px;width:1872px;height:1px;background:#d4d4d4"></div>
<div style="position:absolute;left:26px;top:714px;width:1872px;height:1px;background:#d4d4d4"></div>
<div style="position:absolute;left:26px;top:734px;width:1872px;height:1px;background:#d4d4d4"></div>
<div style="position:absolute;left:26px;top:754px;width:1872px;height:1px;background:#d4d4d4"></div>
<div style="position:absolute;left:26px;top:774px;width:1872px;height:1px;background:#d4d4d4"></div>
<div style="position:absolute;left:26px;top:794px;width:1872px;height:1px;background:#d4d4d4"></div>
<div style="position:absolute;left:26px;top:814px;width:1872px;height:1px;background:#d4d4d4"></div>
<div style="position:absolute;left:26px;top:834px;width:1872px;height:1px;background:#d4d4d4"></div>
<div style="position:absolute;left:26px;top:854px;width:1872px;height:1px;background:#d4d4d4"></div>
<div style="position:absolute;left:26px;top:874px;width:1872px;height:1px;background:#d4d4d4"></div>
<div style="position:absolute;left:26px;top:894px;width:1872px;height:1px;background:#d4d4d4"></div>
<div style="position:absolute;left:26px;top:914px;width:1872px;height:1px;background:#d4d4d4"></div>
<div style="position:absolute;left:26px;top:934px;width:1872px;height:1px;background:#d4d4d4"></div>
<div style="position:absolute;left:26px;top:954px;width:1872px;height:1px;background:#d4d4d4"></div>
<div style="position:absolute;left:26px;top:974px;width:1872px;height:1px;background:#d4d4d4"></div>
<div style="position:absolute;left:416px;top:235px;width:205px;height:755px;background:#d9d9d9"></div>
<div style="position:absolute;left:1755px;top:255px;width:66px;height:460px;background:#d6dce4"></div>
<div style="position:absolute;left:94px;top:215px;width:1px;height:19px;background:#dadada"></div>
<div style="position:absolute;left:228px;top:215px;width:1px;height:19px;background:#dadada"></div>
<div style="position:absolute;left:415px;top:215px;width:1px;height:19px;background:#dadada"></div>
<div style="position:absolute;left:484px;top:215px;width:1px;height:19px;background:#dadada"></div>
<div style="position:absolute;left:557px;top:215px;width:1px;height:19px;background:#dadada"></div>
<div style="position:absolute;left:621px;top:215px;width:1px;height:19px;background:#dadada"></div>
<div style="position:absolute;left:685px;top:215px;width:1px;height:19px;background:#dadada"></div>
<div style="position:absolute;left:749px;top:215px;width:1px;height:19px;background:#dadada"></div>
<div style="position:absolute;left:813px;top:215px;width:1px;height:19px;background:#dadada"></div>
<div style="position:absolute;left:877px;top:215px;width:1px;height:19px;background:#dadada"></div>
<div style="position:absolute;left:941px;top:215px;width:1px;height:19px;background:#dadada"></div>
<div style="position:absolute;left:1005px;top:215px;width:1px;height:19px;background:#dadada"></div>
<div style="position:absolute;left:1069px;top:215px;width:1px;height:19px;background:#dadada"></div>
<div style="position:absolute;left:1133px;top:215px;width:1px;height:19px;background:#dadada"></div>
<div style="position:absolute;left:1202px;top:215px;width:1px;height:19px;background:#dadada"></div>
<div style="position:absolute;left:1271px;top:215px;width:1px;height:19px;background:#dadada"></div>
<div style="position:absolute;left:1340px;top:215px;width:1px;height:19px;background:#dadada"></div>
<div style="position:absolute;left:1409px;top:215px;width:1px;height:19px;background:#dadada"></div>
<div style="position:absolute;left:1478px;top:215px;width:1px;height:19px;background:#dadada"></div>
<div style="position:absolute;left:1547px;top:215px;width:1px;height:19px;background:#dadada"></div>
<div style="position:absolute;left:1616px;top:215px;width:1px;height:19px;background:#dadada"></div>
<div style="position:absolute;left:1685px;top:215px;width:1px;height:19px;background:#dadada"></div>
<div style="position:absolute;left:1754px;top:215px;width:1px;height:19px;background:#dadada"></div>
<div style="position:absolute;left:1821px;top:215px;width:1px;height:19px;background:#dadada"></div>
<div style="position:absolute;left:1890px;top:215px;width:1px;height:19px;background:#dadada"></div>
<div style="position:absolute;left:0px;top:254px;width:25px;height:1px;background:#dadada"></div>
<div style="position:absolute;left:0px;top:274px;width:25px;height:1px;background:#dadada"></div>
<div style="position:absolute;left:0px;top:294px;width:25px;height:1px;background:#dadada"></div>
<div style="position:absolute;left:0px;top:314px;width:25px;height:1px;background:#dadada"></div>
<div style="position:absolute;left:0px;top:334px;width:25px;height:1px;background:#dadada"></div>
<div style="position:absolute;left:0px;top:354px;width:25px;height:1px;background:#dadada"></div>
<div style="position:absolute;left:0px;top:374px;width:25px;height:1px;background:#dadada"></div>
<div style="position:absolute;left:0px;top:394px;width:25px;height:1px;background:#dadada"></div>
<div style="position:absolute;left:0px;top:414px;width:25px;height:1px;background:#dadada"></div>
<div style="position:absolute;left:0px;top:434px;width:25px;height:1px;background:#dadada"></div>
<div style="position:absolute;left:0px;top:454px;width:25px;height:1px;background:#dadada"></div>
<div style="position:absolute;left:0px;top:474px;width:25px;height:1px;background:#dadada"></div>
<div style="position:absolute;left:0px;top:494px;width:25px;height:1px;background:#dadada"></div>
<div style="position:absolute;left:0px;top:514px;width:25px;height:1px;background:#dadada"></div>
<div style="position:absolute;left:0px;top:534px;width:25px;height:1px;background:#dadada"></div>
<div style="position:absolute;left:0px;top:554px;width:25px;height:1px;background:#dadada"></div>
<div style="position:absolute;left:0px;top:574px;width:25px;height:1px;background:#dadada"></div>
<div style="position:absolute;left:0px;top:594px;width:25px;height:1px;background:#dadada"></div>
<div style="position:absolute;left:0px;top:614px;width:25px;height:1px;background:#dadada"></div>
<div style="position:absolute;left:0px;top:634px;width:25px;height:1px;background:#dadada"></div>
<div style="position:absolute;left:0px;top:654px;width:25px;height:1px;background:#dadada"></div>
<div style="position:absolute;left:0px;top:674px;width:25px;height:1px;background:#dadada"></div>
<div style="position:absolute;left:0px;top:694px;width:25px;height:1px;background:#dadada"></div>
<div style="position:absolute;left:0px;top:714px;width:25px;height:1px;background:#dadada"></div>
<div style="position:absolute;left:0px;top:734px;width:25px;height:1px;background:#dadada"></div>
<div style="position:absolute;left:0px;top:754px;width:25px;height:1px;background:#dadada"></div>
<div style="position:absolute;left:0px;top:774px;width:25px;height:1px;background:#dadada"></div>
<div style="position:absolute;left:0px;top:794px;width:25px;height:1px;background:#dadada"></div>
<div style="position:absolute;left:0px;top:814px;width:25px;height:1px;background:#dadada"></div>
<div style="position:absolute;left:0px;top:834px;width:25px;height:1px;background:#dadada"></div>
<div style="position:absolute;left:0px;top:854px;width:25px;height:1px;background:#dadada"></div>
<div style="position:absolute;left:0px;top:874px;width:25px;height:1px;background:#dadada"></div>
<div style="position:absolute;left:0px;top:894px;width:25px;height:1px;background:#dadada"></div>
<div style="position:absolute;left:0px;top:914px;width:25px;height:1px;background:#dadada"></div>
<div style="position:absolute;left:0px;top:934px;width:25px;height:1px;background:#dadada"></div>
<div style="position:absolute;left:0px;top:954px;width:25px;height:1px;background:#dadada"></div>
<div style="position:absolute;left:0px;top:974px;width:25px;height:1px;background:#dadada"></div>
<div style="position:absolute;left:0px;top:234px;width:1898px;height:1px;background:#ababab"></div>
<div style="position:absolute;left:25px;top:215px;width:1px;height:775px;background:#ababab"></div>
<svg style="position:absolute;left:8px;top:219px" width="14" height="14"><polygon points="13,1 13,13 1,13" fill="#d4d4d4"/></svg>
<div style="position:absolute;left:750px;top:215px;width:63px;height:19px;background:#e1e1e1"></div>
<div style="position:absolute;left:749px;top:233px;width:65px;height:2px;background:#217346"></div>
<div style="position:absolute;left:0px;top:835px;width:24px;height:19px;background:#e1e1e1"></div>
<div style="position:absolute;left:24px;top:834px;width:2px;height:21px;background:#217346"></div>
<div style="position:absolute;left:25px;top:215px;width:69px;height:19px;line-height:20px;text-align:center;font-size:13px;font-family:'Liberation Sans', sans-serif;color:#444">A</div>
<div style="position:absolute;left:94px;top:215px;width:134px;height:19px;line-height:20px;text-align:center;font-size:13px;font-family:'Liberation Sans', sans-serif;color:#444">B</div>
<div style="position:absolute;left:228px;top:215px;width:187px;height:19px;line-height:20px;text-align:center;font-size:13px;font-family:'Liberation Sans', sans-serif;color:#444">C</div>
<div style="position:absolute;left:415px;top:215px;width:69px;height:19px;line-height:20px;text-align:center;font-size:13px;font-family:'Liberation Sans', sans-serif;color:#444">D</div>
<div style="position:absolute;left:484px;top:215px;width:73px;height:19px;line-height:20px;text-align:center;font-size:13px;font-family:'Liberation Sans', sans-serif;color:#444">E</div>
<div style="position:absolute;left:557px;top:215px;width:64px;height:19px;line-height:20px;text-align:center;font-size:13px;font-family:'Liberation Sans', sans-serif;color:#444">F</div>
<div style="position:absolute;left:621px;top:215px;width:64px;height:19px;line-height:20px;text-align:center;font-size:13px;font-family:'Liberation Sans', sans-serif;color:#444">G</div>
<div style="position:absolute;left:685px;top:215px;width:64px;height:19px;line-height:20px;text-align:center;font-size:13px;font-family:'Liberation Sans', sans-serif;color:#444">H</div>
<div style="position:absolute;left:749px;top:215px;width:64px;height:19px;line-height:20px;text-align:center;font-size:13px;font-family:'Liberation Sans', sans-serif;color:#217346;font-weight:bold">I</div>
<div style="position:absolute;left:813px;top:215px;width:64px;height:19px;line-height:20px;text-align:center;font-size:13px;font-family:'Liberation Sans', sans-serif;color:#444">J</div>
<div style="position:absolute;left:877px;top:215px;width:64px;height:19px;line-height:20px;text-align:center;font-size:13px;font-family:'Liberation Sans', sans-serif;color:#444">K</div>
<div style="position:absolute;left:941px;top:215px;width:64px;height:19px;line-height:20px;text-align:center;font-size:13px;font-family:'Liberation Sans', sans-serif;color:#444">L</div>
<div style="position:absolute;left:1005px;top:215px;width:64px;height:19px;line-height:20px;text-align:center;font-size:13px;font-family:'Liberation Sans', sans-serif;color:#444">M</div>
<div style="position:absolute;left:1069px;top:215px;width:64px;height:19px;line-height:20px;text-align:center;font-size:13px;font-family:'Liberation Sans', sans-serif;color:#444">N</div>
<div style="position:absolute;left:1133px;top:215px;width:69px;height:19px;line-height:20px;text-align:center;font-size:13px;font-family:'Liberation Sans', sans-serif;color:#444">O</div>
<div style="position:absolute;left:1202px;top:215px;width:69px;height:19px;line-height:20px;text-align:center;font-size:13px;font-family:'Liberation Sans', sans-serif;color:#444">P</div>
<div style="position:absolute;left:1271px;top:215px;width:69px;height:19px;line-height:20px;text-align:center;font-size:13px;font-family:'Liberation Sans', sans-serif;color:#444">Q</div>
<div style="position:absolute;left:1340px;top:215px;width:69px;height:19px;line-height:20px;text-align:center;font-size:13px;font-family:'Liberation Sans', sans-serif;color:#444">R</div>
<div style="position:absolute;left:1409px;top:215px;width:69px;height:19px;line-height:20px;text-align:center;font-size:13px;font-family:'Liberation Sans', sans-serif;color:#444">S</div>
<div style="position:absolute;left:1478px;top:215px;width:69px;height:19px;line-height:20px;text-align:center;font-size:13px;font-family:'Liberation Sans', sans-serif;color:#444">T</div>
<div style="position:absolute;left:1547px;top:215px;width:69px;height:19px;line-height:20px;text-align:center;font-size:13px;font-family:'Liberation Sans', sans-serif;color:#444">U</div>
<div style="position:absolute;left:1616px;top:215px;width:69px;height:19px;line-height:20px;text-align:center;font-size:13px;font-family:'Liberation Sans', sans-serif;color:#444">V</div>
<div style="position:absolute;left:1685px;top:215px;width:69px;height:19px;line-height:20px;text-align:center;font-size:13px;font-family:'Liberation Sans', sans-serif;color:#444">W</div>
<div style="position:absolute;left:1754px;top:215px;width:67px;height:19px;line-height:20px;text-align:center;font-size:13px;font-family:'Liberation Sans', sans-serif;color:#444">X</div>
<div style="position:absolute;left:1821px;top:215px;width:69px;height:19px;line-height:20px;text-align:center;font-size:13px;font-family:'Liberation Sans', sans-serif;color:#444">Y</div>
<div style="position:absolute;left:1890px;top:215px;width:69px;height:19px;line-height:20px;text-align:center;font-size:13px;font-family:'Liberation Sans', sans-serif;color:#444">Z</div>
<div style="position:absolute;left:0;top:236px;width:25px;height:19px;line-height:20px;text-align:center;font-size:13px;font-family:'Liberation Sans', sans-serif;color:#444">1</div>
<div style="position:absolute;left:0;top:256px;width:25px;height:19px;line-height:20px;text-align:center;font-size:13px;font-family:'Liberation Sans', sans-serif;color:#444">2</div>
<div style="position:absolute;left:0;top:276px;width:25px;height:19px;line-height:20px;text-align:center;font-size:13px;font-family:'Liberation Sans', sans-serif;color:#444">3</div>
<div style="position:absolute;left:0;top:296px;width:25px;height:19px;line-height:20px;text-align:center;font-size:13px;font-family:'Liberation Sans', sans-serif;color:#444">4</div>
<div style="position:absolute;left:0;top:316px;width:25px;height:19px;line-height:20px;text-align:center;font-size:13px;font-family:'Liberation Sans', sans-serif;color:#444">5</div>
<div style="position:absolute;left:0;top:336px;width:25px;height:19px;line-height:20px;text-align:center;font-size:13px;font-family:'Liberation Sans', sans-serif;color:#444">6</div>
<div style="position:absolute;left:0;top:356px;width:25px;height:19px;line-height:20px;text-align:center;font-size:13px;font-family:'Liberation Sans', sans-serif;color:#444">7</div>
<div style="position:absolute;left:0;top:376px;width:25px;height:19px;line-height:20px;text-align:center;font-size:13px;font-family:'Liberation Sans', sans-serif;color:#444">8</div>
<div style="position:absolute;left:0;top:396px;width:25px;height:19px;line-height:20px;text-align:center;font-size:13px;font-family:'Liberation Sans', sans-serif;color:#444">9</div>
<div style="position:absolute;left:0;top:416px;width:25px;height:19px;line-height:20px;text-align:center;font-size:13px;font-family:'Liberation Sans', sans-serif;color:#444">10</div>
<div style="position:absolute;left:0;top:436px;width:25px;height:19px;line-height:20px;text-align:center;font-size:13px;font-family:'Liberation Sans', sans-serif;color:#444">11</div>
<div style="position:absolute;left:0;top:456px;width:25px;height:19px;line-height:20px;text-align:center;font-size:13px;font-family:'Liberation Sans', sans-serif;color:#444">12</div>
<div style="position:absolute;left:0;top:476px;width:25px;height:19px;line-height:20px;text-align:center;font-size:13px;font-family:'Liberation Sans', sans-serif;color:#444">13</div>
<div style="position:absolute;left:0;top:496px;width:25px;height:19px;line-height:20px;text-align:center;font-size:13px;font-family:'Liberation Sans', sans-serif;color:#444">14</div>
<div style="position:absolute;left:0;top:516px;width:25px;height:19px;line-height:20px;text-align:center;font-size:13px;font-family:'Liberation Sans', sans-serif;color:#444">15</div>
<div style="position:absolute;left:0;top:536px;width:25px;height:19px;line-height:20px;text-align:center;font-size:13px;font-family:'Liberation Sans', sans-serif;color:#444">16</div>
<div style="position:absolute;left:0;top:556px;width:25px;height:19px;line-height:20px;text-align:center;font-size:13px;font-family:'Liberation Sans', sans-serif;color:#444">17</div>
<div style="position:absolute;left:0;top:576px;width:25px;height:19px;line-height:20px;text-align:center;font-size:13px;font-family:'Liberation Sans', sans-serif;color:#444">18</div>
<div style="position:absolute;left:0;top:596px;width:25px;height:19px;line-height:20px;text-align:center;font-size:13px;font-family:'Liberation Sans', sans-serif;color:#444">19</div>
<div style="position:absolute;left:0;top:616px;width:25px;height:19px;line-height:20px;text-align:center;font-size:13px;font-family:'Liberation Sans', sans-serif;color:#444">20</div>
<div style="position:absolute;left:0;top:636px;width:25px;height:19px;line-height:20px;text-align:center;font-size:13px;font-family:'Liberation Sans', sans-serif;color:#444">21</div>
<div style="position:absolute;left:0;top:656px;width:25px;height:19px;line-height:20px;text-align:center;font-size:13px;font-family:'Liberation Sans', sans-serif;color:#444">22</div>
<div style="position:absolute;left:0;top:676px;width:25px;height:19px;line-height:20px;text-align:center;font-size:13px;font-family:'Liberation Sans', sans-serif;color:#444">23</div>
<div style="position:absolute;left:0;top:696px;width:25px;height:19px;line-height:20px;text-align:center;font-size:13px;font-family:'Liberation Sans', sans-serif;color:#444">24</div>
<div style="position:absolute;left:0;top:716px;width:25px;height:19px;line-height:20px;text-align:center;font-size:13px;font-family:'Liberation Sans', sans-serif;color:#444">25</div>
<div style="position:absolute;left:0;top:736px;width:25px;height:19px;line-height:20px;text-align:center;font-size:13px;font-family:'Liberation Sans', sans-serif;color:#444">26</div>
<div style="position:absolute;left:0;top:756px;width:25px;height:19px;line-height:20px;text-align:center;font-size:13px;font-family:'Liberation Sans', sans-serif;color:#444">27</div>
<div style="position:absolute;left:0;top:776px;width:25px;height:19px;line-height:20px;text-align:center;font-size:13px;font-family:'Liberation Sans', sans-serif;color:#444">28</div>
<div style="position:absolute;left:0;top:796px;width:25px;height:19px;line-height:20px;text-align:center;font-size:13px;font-family:'Liberation Sans', sans-serif;color:#444">29</div>
<div style="position:absolute;left:0;top:816px;width:25px;height:19px;line-height:20px;text-align:center;font-size:13px;font-family:'Liberation Sans', sans-serif;color:#444">30</div>
<div style="position:absolute;left:0;top:836px;width:25px;height:19px;line-height:20px;text-align:center;font-size:13px;font-family:'Liberation Sans', sans-serif;color:#217346;font-weight:bold">31</div>
<div style="position:absolute;left:0;top:856px;width:25px;height:19px;line-height:20px;text-align:center;font-size:13px;font-family:'Liberation Sans', sans-serif;color:#444">32</div>
<div style="position:absolute;left:0;top:876px;width:25px;height:19px;line-height:20px;text-align:center;font-size:13px;font-family:'Liberation Sans', sans-serif;color:#444">33</div>
<div style="position:absolute;left:0;top:896px;width:25px;height:19px;line-height:20px;text-align:center;font-size:13px;font-family:'Liberation Sans', sans-serif;color:#444">34</div>
<div style="position:absolute;left:0;top:916px;width:25px;height:19px;line-height:20px;text-align:center;font-size:13px;font-family:'Liberation Sans', sans-serif;color:#444">35</div>
<div style="position:absolute;left:0;top:936px;width:25px;height:19px;line-height:20px;text-align:center;font-size:13px;font-family:'Liberation Sans', sans-serif;color:#444">36</div>
<div style="position:absolute;left:0;top:956px;width:25px;height:19px;line-height:20px;text-align:center;font-size:13px;font-family:'Liberation Sans', sans-serif;color:#444">37</div>
<div style="position:absolute;left:0;top:976px;width:25px;height:19px;line-height:20px;text-align:center;font-size:13px;font-family:'Liberation Sans', sans-serif;color:#444">38</div>
<div style="position:absolute;left:26px;top:254px;width:1872px;height:1px;background:#000"></div>
<div style="position:absolute;left:94px;top:235px;width:1px;height:20px;background:#000"></div>
<div style="position:absolute;left:228px;top:235px;width:1px;height:20px;background:#000"></div>
<div style="position:absolute;left:415px;top:235px;width:1px;height:20px;background:#000"></div>
<div style="position:absolute;left:484px;top:235px;width:1px;height:20px;background:#000"></div>
<div style="position:absolute;left:557px;top:235px;width:1px;height:20px;background:#000"></div>
<div style="position:absolute;left:621px;top:235px;width:1px;height:20px;background:#000"></div>
<div style="position:absolute;left:685px;top:235px;width:1px;height:20px;background:#000"></div>
<div style="position:absolute;left:749px;top:235px;width:1px;height:20px;background:#000"></div>
<div style="position:absolute;left:813px;top:235px;width:1px;height:20px;background:#000"></div>
<div style="position:absolute;left:877px;top:235px;width:1px;height:20px;background:#000"></div>
<div style="position:absolute;left:941px;top:235px;width:1px;height:20px;background:#000"></div>
<div style="position:absolute;left:1005px;top:235px;width:1px;height:20px;background:#000"></div>
<div style="position:absolute;left:1069px;top:235px;width:1px;height:20px;background:#000"></div>
<div style="position:absolute;left:1133px;top:235px;width:1px;height:20px;background:#000"></div>
<div style="position:absolute;left:1202px;top:235px;width:1px;height:20px;background:#000"></div>
<div style="position:absolute;left:1271px;top:235px;width:1px;height:20px;background:#000"></div>
<div style="position:absolute;left:1340px;top:235px;width:1px;height:20px;background:#000"></div>
<div style="position:absolute;left:1409px;top:235px;width:1px;height:20px;background:#000"></div>
<div style="position:absolute;left:1478px;top:235px;width:1px;height:20px;background:#000"></div>
<div style="position:absolute;left:1547px;top:235px;width:1px;height:20px;background:#000"></div>
<div style="position:absolute;left:1616px;top:235px;width:1px;height:20px;background:#000"></div>
<div style="position:absolute;left:1685px;top:235px;width:1px;height:20px;background:#000"></div>
<div style="position:absolute;left:1754px;top:235px;width:1px;height:20px;background:#000"></div>
<div style="position:absolute;left:1821px;top:235px;width:1px;height:20px;background:#000"></div>
<div style="position:absolute;left:1890px;top:235px;width:1px;height:20px;background:#000"></div>
<div style="position:absolute;left:25px;top:235px;width:1px;height:20px;background:#000"></div>
<div style="position:absolute;left:813px;top:255px;width:1px;height:19px;background:#fff"></div>
<div style="position:absolute;left:877px;top:255px;width:1px;height:19px;background:#fff"></div>
<div style="position:absolute;left:813px;top:495px;width:1px;height:19px;background:#fff"></div>
<div style="position:absolute;left:685px;top:595px;width:1px;height:19px;background:#fff"></div>
<div style="position:absolute;left:685px;top:695px;width:1px;height:19px;background:#fff"></div>
<div style="position:absolute;left:749px;top:695px;width:1px;height:19px;background:#fff"></div>
<div style="position:absolute;left:813px;top:695px;width:1px;height:19px;background:#fff"></div>
<div style="position:absolute;left:877px;top:695px;width:1px;height:19px;background:#fff"></div>
<div style="position:absolute;left:941px;top:695px;width:1px;height:19px;background:#fff"></div>
<div style="position:absolute;left:1005px;top:695px;width:1px;height:19px;background:#fff"></div>
<div style="position:absolute;top:236px;height:19px;line-height:20px;font-size:13px;font-family:'Liberation Sans', sans-serif;font-weight:bold;color:#000;white-space:pre;overflow:hidden;letter-spacing:-0.245px;left:26px;width:68px"><span style="padding-left:2px">S No.</span></div>
<div style="position:absolute;top:236px;height:19px;line-height:20px;font-size:13px;font-family:'Liberation Sans', sans-serif;font-weight:bold;color:#000;white-space:pre;overflow:hidden;letter-spacing:-0.223px;left:95px;width:133px"><span style="padding-left:2px">LOAN_NO</span></div>
<div style="position:absolute;top:236px;height:19px;line-height:20px;font-size:13px;font-family:'Liberation Sans', sans-serif;font-weight:bold;color:#000;white-space:pre;overflow:hidden;letter-spacing:-0.300px;left:229px;width:186px"><span style="padding-left:2px">CUSTOMER_NAME</span></div>
<div style="position:absolute;top:236px;height:19px;line-height:20px;font-size:13px;font-family:'Liberation Sans', sans-serif;font-weight:bold;color:#000;white-space:pre;overflow:hidden;letter-spacing:-0.390px;left:416px;width:68px"><span style="padding-left:2px">TOT_PRIN_</span></div>
<div style="position:absolute;top:236px;height:19px;line-height:20px;font-size:13px;font-family:'Liberation Sans', sans-serif;font-weight:bold;color:#000;white-space:pre;overflow:hidden;letter-spacing:0.043px;left:485px;width:72px"><span style="padding-left:2px">Projection</span></div>
<div style="position:absolute;top:236px;height:19px;line-height:20px;font-size:13px;font-family:'Liberation Sans', sans-serif;font-weight:bold;color:#000;white-space:pre;overflow:hidden;letter-spacing:-0.930px;left:558px;width:63px"><span style="padding-left:2px">EX CODE</span></div>
<div style="position:absolute;top:236px;height:19px;line-height:20px;font-size:13px;font-family:'Liberation Sans', sans-serif;font-weight:bold;color:#000;white-space:pre;overflow:hidden;letter-spacing:-1.079px;left:622px;width:63px"><span style="padding-left:2px">ASSET_DE</span></div>
<div style="position:absolute;top:236px;height:19px;line-height:20px;font-size:13px;font-family:'Liberation Sans', sans-serif;font-weight:bold;color:#000;white-space:pre;overflow:hidden;letter-spacing:-0.319px;left:686px;width:63px"><span style="padding-left:2px">MAKE</span></div>
<div style="position:absolute;top:236px;height:19px;line-height:20px;font-size:13px;font-family:'Liberation Sans', sans-serif;font-weight:bold;color:#000;white-space:pre;overflow:hidden;letter-spacing:-0.388px;left:750px;width:63px"><span style="padding-left:2px">MODEL</span></div>
<div style="position:absolute;top:236px;height:19px;line-height:20px;font-size:13px;font-family:'Liberation Sans', sans-serif;font-weight:bold;color:#000;white-space:pre;overflow:hidden;letter-spacing:-0.890px;left:814px;width:63px"><span style="padding-left:2px">CODE</span></div>
<div style="position:absolute;top:236px;height:19px;line-height:20px;font-size:13px;font-family:'Liberation Sans', sans-serif;font-weight:bold;color:#000;white-space:pre;overflow:hidden;letter-spacing:-0.675px;left:878px;width:63px"><span style="padding-left:2px">REMARK</span></div>
<div style="position:absolute;top:236px;height:19px;line-height:20px;font-size:13px;font-family:'Liberation Sans', sans-serif;font-weight:bold;color:#000;white-space:pre;overflow:hidden;letter-spacing:-0.930px;left:942px;width:63px"><span style="padding-left:2px">EX CODE</span></div>
<div style="position:absolute;top:236px;height:19px;line-height:20px;font-size:13px;font-family:'Liberation Sans', sans-serif;font-weight:bold;color:#000;white-space:pre;overflow:hidden;letter-spacing:-1.045px;left:1006px;width:63px"><span style="padding-left:2px">EX FEEDBA</span></div>
<div style="position:absolute;top:236px;height:19px;line-height:20px;font-size:13px;font-family:'Liberation Sans', sans-serif;font-weight:bold;color:#000;white-space:pre;overflow:hidden;letter-spacing:-0.483px;left:1070px;width:63px"><span style="padding-left:2px">REG_NO</span></div>
<div style="position:absolute;top:236px;height:19px;line-height:20px;font-size:13px;font-family:'Liberation Sans', sans-serif;font-weight:bold;color:#000;white-space:pre;overflow:hidden;letter-spacing:-0.146px;left:1134px;width:68px"><span style="padding-left:2px">LOAN_EMI</span></div>
<div style="position:absolute;top:236px;height:19px;line-height:20px;font-size:13px;font-family:'Liberation Sans', sans-serif;font-weight:bold;color:#000;white-space:pre;overflow:hidden;letter-spacing:-0.778px;left:1203px;width:68px"><span style="padding-left:2px">CFOC_CHA</span></div>
<div style="position:absolute;top:236px;height:19px;line-height:20px;font-size:13px;font-family:'Liberation Sans', sans-serif;font-weight:bold;color:#000;white-space:pre;overflow:hidden;letter-spacing:-0.818px;left:1272px;width:68px"><span style="padding-left:2px">POS</span></div>
<div style="position:absolute;top:236px;height:19px;line-height:20px;font-size:13px;font-family:'Liberation Sans', sans-serif;font-weight:bold;color:#000;white-space:pre;overflow:hidden;letter-spacing:-0.401px;left:1341px;width:68px"><span style="padding-left:2px">Bounce Ch</span></div>
<div style="position:absolute;top:236px;height:19px;line-height:20px;font-size:13px;font-family:'Liberation Sans', sans-serif;font-weight:bold;color:#000;white-space:pre;overflow:hidden;letter-spacing:-0.083px;left:1410px;width:68px"><span style="padding-left:2px">Overdue C</span></div>
<div style="position:absolute;top:236px;height:19px;line-height:20px;font-size:13px;font-family:'Liberation Sans', sans-serif;font-weight:bold;color:#000;white-space:pre;overflow:hidden;letter-spacing:-0.090px;left:1479px;width:68px"><span style="padding-left:2px">Other Char</span></div>
<div style="position:absolute;top:236px;height:19px;line-height:20px;font-size:13px;font-family:'Liberation Sans', sans-serif;font-weight:bold;color:#000;white-space:pre;overflow:hidden;letter-spacing:-0.049px;left:1548px;width:68px"><span style="padding-left:2px">Total Amou</span></div>
<div style="position:absolute;top:236px;height:19px;line-height:20px;font-size:13px;font-family:'Liberation Sans', sans-serif;font-weight:bold;color:#000;white-space:pre;overflow:hidden;letter-spacing:-0.452px;left:1617px;width:68px"><span style="padding-left:2px">TOT_INST_</span></div>
<div style="position:absolute;top:236px;height:19px;line-height:20px;font-size:13px;font-family:'Liberation Sans', sans-serif;font-weight:bold;color:#000;white-space:pre;overflow:hidden;letter-spacing:-0.482px;left:1686px;width:68px"><span style="padding-left:2px">DPD</span></div>
<div style="position:absolute;top:236px;height:19px;line-height:20px;font-size:13px;font-family:'Liberation Sans', sans-serif;font-weight:bold;color:#000;white-space:pre;overflow:hidden;letter-spacing:-0.198px;left:1755px;width:66px"><span style="padding-left:2px">NEW DPD</span></div>
<div style="position:absolute;top:236px;height:19px;line-height:20px;font-size:13px;font-family:'Liberation Sans', sans-serif;font-weight:bold;color:#000;white-space:pre;overflow:hidden;letter-spacing:-0.225px;left:1822px;width:68px"><span style="padding-left:2px">Bucket</span></div>
<div style="position:absolute;top:236px;height:19px;line-height:20px;font-size:13px;font-family:'Liberation Sans', sans-serif;font-weight:bold;color:#000;white-space:pre;overflow:hidden;letter-spacing:-0.482px;left:1891px;width:7px"><span style="padding-left:2px">DPD</span></div>
<div style="position:absolute;top:256px;height:19px;line-height:20px;font-size:13px;font-family:'Liberation Sans', sans-serif;color:#000;white-space:pre;overflow:hidden;letter-spacing:-0.230px;left:26px;width:66px;text-align:right"><span style="margin-right:0.230px">1</span></div>
<div style="position:absolute;top:256px;height:19px;line-height:20px;font-size:13px;font-family:'Liberation Sans', sans-serif;color:#000;white-space:pre;overflow:hidden;letter-spacing:-0.002px;left:95px;width:133px"><span style="padding-left:2px">LANMU00042049919</span></div>
<div style="position:absolute;top:256px;height:19px;line-height:20px;font-size:13px;font-family:'Liberation Sans', sans-serif;color:#000;white-space:pre;overflow:hidden;letter-spacing:-0.235px;left:229px;width:186px"><span style="padding-left:2px">VANITA ABHIJIT PATIL</span></div>
<div style="position:absolute;top:256px;height:19px;line-height:20px;font-size:13px;font-family:'Liberation Sans', sans-serif;color:#000;white-space:pre;overflow:hidden;letter-spacing:-0.230px;left:416px;width:68px"><span style="padding-left:2px">3498350</span></div>
<div style="position:absolute;top:256px;height:19px;line-height:20px;font-size:13px;font-family:'Liberation Sans', sans-serif;color:#000;white-space:pre;overflow:hidden;letter-spacing:0.647px;left:558px;width:63px"><span style="padding-left:2px">Shifted</span></div>
<div style="position:absolute;top:256px;height:19px;line-height:20px;font-size:13px;font-family:'Liberation Sans', sans-serif;color:#000;white-space:pre;overflow:hidden;letter-spacing:-0.173px;left:622px;width:63px"><span style="padding-left:2px">2.2L LIMOUSINE</span></div>
<div style="position:absolute;top:256px;height:19px;line-height:20px;font-size:13px;font-family:'Liberation Sans', sans-serif;color:#000;white-space:pre;overflow:hidden;letter-spacing:-0.252px;left:686px;width:63px"><span style="padding-left:2px">CARNIVAL</span></div>
<div style="position:absolute;top:256px;height:19px;line-height:20px;font-size:13px;font-family:'Liberation Sans', sans-serif;color:#000;white-space:pre;overflow:hidden;letter-spacing:-0.341px;left:750px;width:191px"><span style="padding-left:2px">2.2L LIMOUSINE 7VIP STR</span></div>
<div style="position:absolute;top:256px;height:19px;line-height:20px;font-size:13px;font-family:'Liberation Sans', sans-serif;color:#000;white-space:pre;overflow:hidden;letter-spacing:-0.388px;left:942px;width:63px"><span style="padding-left:2px">NC</span></div>
<div style="position:absolute;top:256px;height:19px;line-height:20px;font-size:13px;font-family:'Liberation Sans', sans-serif;color:#000;white-space:pre;overflow:hidden;letter-spacing:0.485px;left:1006px;width:63px"><span style="padding-left:2px">3/9/2022 Visited</span></div>
<div style="position:absolute;top:256px;height:19px;line-height:20px;font-size:13px;font-family:'Liberation Sans', sans-serif;color:#000;white-space:pre;overflow:hidden;letter-spacing:0.034px;left:1070px;width:63px"><span style="padding-left:2px">MH43BU4878</span></div>
<div style="position:absolute;top:256px;height:19px;line-height:20px;font-size:13px;font-family:'Liberation Sans', sans-serif;color:#000;white-space:pre;overflow:hidden;letter-spacing:-0.230px;left:1134px;width:66px;text-align:right"><span style="margin-right:0.230px">75395</span></div>
<div style="position:absolute;top:256px;height:19px;line-height:20px;font-size:13px;font-family:'Liberation Sans', sans-serif;color:#000;white-space:pre;overflow:hidden;letter-spacing:-0.230px;left:1203px;width:66px;text-align:right"><span style="margin-right:0.230px">0</span></div>
<div style="position:absolute;top:256px;height:19px;line-height:20px;font-size:13px;font-family:'Liberation Sans', sans-serif;color:#000;white-space:pre;overflow:hidden;letter-spacing:-0.230px;left:1272px;width:66px;text-align:right"><span style="margin-right:0.230px">980135</span></div>
<div style="position:absolute;top:256px;height:19px;line-height:20px;font-size:13px;font-family:'Liberation Sans', sans-serif;color:#000;white-space:pre;overflow:hidden;letter-spacing:-0.230px;left:1341px;width:66px;text-align:right"><span style="margin-right:0.230px">7670</span></div>
<div style="position:absolute;top:256px;height:19px;line-height:20px;font-size:13px;font-family:'Liberation Sans', sans-serif;color:#000;white-space:pre;overflow:hidden;letter-spacing:-0.230px;left:1410px;width:66px;text-align:right"><span style="margin-right:0.230px">126110</span></div>
<div style="position:absolute;top:256px;height:19px;line-height:20px;font-size:13px;font-family:'Liberation Sans', sans-serif;color:#000;white-space:pre;overflow:hidden;letter-spacing:-0.230px;left:1479px;width:66px;text-align:right"><span style="margin-right:0.230px">0</span></div>
<div style="position:absolute;top:256px;height:19px;line-height:20px;font-size:13px;font-family:'Liberation Sans', sans-serif;color:#000;white-space:pre;overflow:hidden;letter-spacing:-0.230px;left:1548px;width:66px;text-align:right"><span style="margin-right:0.230px">1113915</span></div>
<div style="position:absolute;top:256px;height:19px;line-height:20px;font-size:13px;font-family:'Liberation Sans', sans-serif;color:#000;white-space:pre;overflow:hidden;letter-spacing:-0.230px;left:1617px;width:66px;text-align:right"><span style="margin-right:0.230px">13</span></div>
<div style="position:absolute;top:256px;height:19px;line-height:20px;font-size:13px;font-family:'Liberation Sans', sans-serif;color:#000;white-space:pre;overflow:hidden;letter-spacing:-0.230px;left:1686px;width:66px;text-align:right"><span style="margin-right:0.230px">386</span></div>
<div style="position:absolute;top:256px;height:19px;line-height:20px;font-size:13px;font-family:'Liberation Sans', sans-serif;color:#000;white-space:pre;overflow:hidden;letter-spacing:-0.230px;left:1755px;width:64px;text-align:right"><span style="margin-right:0.230px">409</span></div>
<div style="position:absolute;top:256px;height:19px;line-height:20px;font-size:13px;font-family:'Liberation Sans', sans-serif;color:#000;white-space:pre;overflow:hidden;letter-spacing:-0.230px;left:1822px;width:66px;text-align:right"><span style="margin-right:0.230px">13</span></div>
<div style="position:absolute;top:276px;height:19px;line-height:20px;font-size:13px;font-family:'Liberation Sans', sans-serif;color:#000;white-space:pre;overflow:hidden;letter-spacing:-0.230px;left:26px;width:66px;text-align:right"><span style="margin-right:0.230px">2</span></div>
<div style="position:absolute;top:276px;height:19px;line-height:20px;font-size:13px;font-family:'Liberation Sans', sans-serif;color:#000;white-space:pre;overflow:hidden;letter-spacing:-0.002px;left:95px;width:133px"><span style="padding-left:2px">LANMU00036814612</span></div>
<div style="position:absolute;top:276px;height:19px;line-height:20px;font-size:13px;font-family:'Liberation Sans', sans-serif;color:#000;white-space:pre;overflow:hidden;letter-spacing:-0.346px;left:229px;width:186px"><span style="padding-left:2px">TUSHAR RAMCHANDRA PATIL</span></div>
<div style="position:absolute;top:276px;height:19px;line-height:20px;font-size:13px;font-family:'Liberation Sans', sans-serif;color:#000;white-space:pre;overflow:hidden;letter-spacing:-0.153px;left:416px;width:68px"><span style="padding-left:2px">969791.1</span></div>
<div style="position:absolute;top:276px;height:19px;line-height:20px;font-size:13px;font-family:'Liberation Sans', sans-serif;color:#000;white-space:pre;overflow:hidden;letter-spacing:0.647px;left:558px;width:63px"><span style="padding-left:2px">Shifted</span></div>
<div style="position:absolute;top:276px;height:19px;line-height:20px;font-size:13px;font-family:'Liberation Sans', sans-serif;color:#000;white-space:pre;overflow:hidden;letter-spacing:0.250px;left:622px;width:63px"><span style="padding-left:2px">W9</span></div>
<div style="position:absolute;top:276px;height:19px;line-height:20px;font-size:13px;font-family:'Liberation Sans', sans-serif;color:#000;white-space:pre;overflow:hidden;letter-spacing:-0.147px;left:686px;width:63px"><span style="padding-left:2px">XUV 500</span></div>
<div style="position:absolute;top:276px;height:19px;line-height:20px;font-size:13px;font-family:'Liberation Sans', sans-serif;color:#000;white-space:pre;overflow:hidden;letter-spacing:-0.147px;left:750px;width:63px"><span style="padding-left:2px">XUV 500</span></div>
<div style="position:absolute;top:276px;height:19px;line-height:20px;font-size:13px;font-family:'Liberation Sans', sans-serif;color:#000;white-space:pre;overflow:hidden;letter-spacing:-0.711px;left:942px;width:63px"><span style="padding-left:2px">SHIFT</span></div>
<div style="position:absolute;top:276px;height:19px;line-height:20px;font-size:13px;font-family:'Liberation Sans', sans-serif;color:#000;white-space:pre;overflow:hidden;letter-spacing:0.352px;left:1006px;width:63px"><span style="padding-left:2px">3/11/2022</span></div>
<div style="position:absolute;top:276px;height:19px;line-height:20px;font-size:13px;font-family:'Liberation Sans', sans-serif;color:#000;white-space:pre;overflow:hidden;letter-spacing:-0.194px;left:1070px;width:63px"><span style="padding-left:2px">MH46BE7777</span></div>
<div style="position:absolute;top:276px;height:19px;line-height:20px;font-size:13px;font-family:'Liberation Sans', sans-serif;color:#000;white-space:pre;overflow:hidden;letter-spacing:-0.230px;left:1134px;width:66px;text-align:right"><span style="margin-right:0.230px">33779</span></div>
<div style="position:absolute;top:276px;height:19px;line-height:20px;font-size:13px;font-family:'Liberation Sans', sans-serif;color:#000;white-space:pre;overflow:hidden;letter-spacing:-0.230px;left:1203px;width:66px;text-align:right"><span style="margin-right:0.230px">0</span></div>
<div style="position:absolute;top:276px;height:19px;line-height:20px;font-size:13px;font-family:'Liberation Sans', sans-serif;color:#000;white-space:pre;overflow:hidden;letter-spacing:-0.230px;left:1272px;width:66px;text-align:right"><span style="margin-right:0.230px">658333</span></div>
<div style="position:absolute;top:276px;height:19px;line-height:20px;font-size:13px;font-family:'Liberation Sans', sans-serif;color:#000;white-space:pre;overflow:hidden;letter-spacing:-0.230px;left:1341px;width:66px;text-align:right"><span style="margin-right:0.230px">12980</span></div>
<div style="position:absolute;top:276px;height:19px;line-height:20px;font-size:13px;font-family:'Liberation Sans', sans-serif;color:#000;white-space:pre;overflow:hidden;letter-spacing:-0.230px;left:1410px;width:66px;text-align:right"><span style="margin-right:0.230px">121995</span></div>
<div style="position:absolute;top:276px;height:19px;line-height:20px;font-size:13px;font-family:'Liberation Sans', sans-serif;color:#000;white-space:pre;overflow:hidden;letter-spacing:-0.230px;left:1479px;width:66px;text-align:right"><span style="margin-right:0.230px">0</span></div>
<div style="position:absolute;top:276px;height:19px;line-height:20px;font-size:13px;font-family:'Liberation Sans', sans-serif;color:#000;white-space:pre;overflow:hidden;letter-spacing:-0.230px;left:1548px;width:66px;text-align:right"><span style="margin-right:0.230px">793308</span></div>
<div style="position:absolute;top:276px;height:19px;line-height:20px;font-size:13px;font-family:'Liberation Sans', sans-serif;color:#000;white-space:pre;overflow:hidden;letter-spacing:-0.230px;left:1617px;width:66px;text-align:right"><span style="margin-right:0.230px">20</span></div>
<div style="position:absolute;top:276px;height:19px;line-height:20px;font-size:13px;font-family:'Liberation Sans', sans-serif;color:#000;white-space:pre;overflow:hidden;letter-spacing:-0.230px;left:1686px;width:66px;text-align:right"><span style="margin-right:0.230px">580</span></div>
<div style="position:absolute;top:276px;height:19px;line-height:20px;font-size:13px;font-family:'Liberation Sans', sans-serif;color:#000;white-space:pre;overflow:hidden;letter-spacing:-0.230px;left:1755px;width:64px;text-align:right"><span style="margin-right:0.230px">603</span></div>
<div style="position:absolute;top:276px;height:19px;line-height:20px;font-size:13px;font-family:'Liberation Sans', sans-serif;color:#000;white-space:pre;overflow:hidden;letter-spacing:-0.230px;left:1822px;width:66px;text-align:right"><span style="margin-right:0.230px">13</span></div>
<div style="position:absolute;top:276px;height:19px;line-height:20px;font-size:13px;font-family:'Liberation Sans', sans-serif;color:#000;white-space:pre;overflow:hidden;letter-spacing:-0.711px;left:1891px;width:7px"><span style="padding-left:2px">SHIFT</span></div>
<div style="position:absolute;top:296px;height:19px;line-height:20px;font-size:13px;font-family:'Liberation Sans', sans-serif;color:#000;white-space:pre;overflow:hidden;letter-spacing:-0.230px;left:26px;width:66px;text-align:right"><span style="margin-right:0.230px">3</span></div>
<div style="position:absolute;top:296px;height:19px;line-height:20px;font-size:13px;font-family:'Liberation Sans', sans-serif;color:#000;white-space:pre;overflow:hidden;letter-spacing:-0.339px;left:95px;width:133px"><span style="padding-left:2px">LATNE00039371261</span></div>
<div style="position:absolute;top:296px;height:19px;line-height:20px;font-size:13px;font-family:'Liberation Sans', sans-serif;color:#000;white-space:pre;overflow:hidden;letter-spacing:-0.171px;left:229px;width:186px"><span style="padding-left:2px">SUSHMA  MOHITE</span></div>
<div style="position:absolute;top:296px;height:19px;line-height:20px;font-size:13px;font-family:'Liberation Sans', sans-serif;color:#000;white-space:pre;overflow:hidden;letter-spacing:-0.230px;left:416px;width:68px"><span style="padding-left:2px">601576</span></div>
<div style="position:absolute;top:296px;height:19px;line-height:20px;font-size:13px;font-family:'Liberation Sans', sans-serif;color:#000;white-space:pre;overflow:hidden;letter-spacing:0.753px;left:558px;width:63px"><span style="padding-left:2px">left the m</span></div>
<div style="position:absolute;top:296px;height:19px;line-height:20px;font-size:13px;font-family:'Liberation Sans', sans-serif;color:#000;white-space:pre;overflow:hidden;letter-spacing:0.059px;left:622px;width:63px"><span style="padding-left:2px">Delta AT 1</span></div>
<div style="position:absolute;top:296px;height:19px;line-height:20px;font-size:13px;font-family:'Liberation Sans', sans-serif;color:#000;white-space:pre;overflow:hidden;letter-spacing:0.420px;left:686px;width:63px"><span style="padding-left:2px">Baleno</span></div>
<div style="position:absolute;top:296px;height:19px;line-height:20px;font-size:13px;font-family:'Liberation Sans', sans-serif;color:#000;white-space:pre;overflow:hidden;letter-spacing:-0.094px;left:1070px;width:63px"><span style="padding-left:2px">MH46BK8333</span></div>
<div style="position:absolute;top:296px;height:19px;line-height:20px;font-size:13px;font-family:'Liberation Sans', sans-serif;color:#000;white-space:pre;overflow:hidden;letter-spacing:-0.230px;left:1134px;width:66px;text-align:right"><span style="margin-right:0.230px">11053</span></div>
<div style="position:absolute;top:296px;height:19px;line-height:20px;font-size:13px;font-family:'Liberation Sans', sans-serif;color:#000;white-space:pre;overflow:hidden;letter-spacing:-0.230px;left:1203px;width:66px;text-align:right"><span style="margin-right:0.230px">0</span></div>
<div style="position:absolute;top:296px;height:19px;line-height:20px;font-size:13px;font-family:'Liberation Sans', sans-serif;color:#000;white-space:pre;overflow:hidden;letter-spacing:-0.230px;left:1272px;width:66px;text-align:right"><span style="margin-right:0.230px">98833</span></div>
<div style="position:absolute;top:296px;height:19px;line-height:20px;font-size:13px;font-family:'Liberation Sans', sans-serif;color:#000;white-space:pre;overflow:hidden;letter-spacing:-0.230px;left:1341px;width:66px;text-align:right"><span style="margin-right:0.230px">12980</span></div>
<div style="position:absolute;top:296px;height:19px;line-height:20px;font-size:13px;font-family:'Liberation Sans', sans-serif;color:#000;white-space:pre;overflow:hidden;letter-spacing:-0.230px;left:1410px;width:66px;text-align:right"><span style="margin-right:0.230px">13686</span></div>
<div style="position:absolute;top:296px;height:19px;line-height:20px;font-size:13px;font-family:'Liberation Sans', sans-serif;color:#000;white-space:pre;overflow:hidden;letter-spacing:-0.230px;left:1479px;width:66px;text-align:right"><span style="margin-right:0.230px">0</span></div>
<div style="position:absolute;top:296px;height:19px;line-height:20px;font-size:13px;font-family:'Liberation Sans', sans-serif;color:#000;white-space:pre;overflow:hidden;letter-spacing:-0.230px;left:1548px;width:66px;text-align:right"><span style="margin-right:0.230px">125499</span></div>
<div style="position:absolute;top:296px;height:19px;line-height:20px;font-size:13px;font-family:'Liberation Sans', sans-serif;color:#000;white-space:pre;overflow:hidden;letter-spacing:-0.230px;left:1617px;width:66px;text-align:right"><span style="margin-right:0.230px">9</span></div>
<div style="position:absolute;top:296px;height:19px;line-height:20px;font-size:13px;font-family:'Liberation Sans', sans-serif;color:#000;white-space:pre;overflow:hidden;letter-spacing:-0.230px;left:1686px;width:66px;text-align:right"><span style="margin-right:0.230px">266</span></div>
<div style="position:absolute;top:296px;height:19px;line-height:20px;font-size:13px;font-family:'Liberation Sans', sans-serif;color:#000;white-space:pre;overflow:hidden;letter-spacing:-0.230px;left:1755px;width:64px;text-align:right"><span style="margin-right:0.230px">289</span></div>
<div style="position:absolute;top:296px;height:19px;line-height:20px;font-size:13px;font-family:'Liberation Sans', sans-serif;color:#000;white-space:pre;overflow:hidden;letter-spacing:-0.230px;left:1822px;width:66px;text-align:right"><span style="margin-right:0.230px">9</span></div>
<div style="position:absolute;top:316px;height:19px;line-height:20px;font-size:13px;font-family:'Liberation Sans', sans-serif;color:#000;white-space:pre;overflow:hidden;letter-spacing:-0.230px;left:26px;width:66px;text-align:right"><span style="margin-right:0.230px">4</span></div>
<div style="position:absolute;top:316px;height:19px;line-height:20px;font-size:13px;font-family:'Liberation Sans', sans-serif;color:#000;white-space:pre;overflow:hidden;letter-spacing:0.095px;left:95px;width:133px"><span style="padding-left:2px">LAMUM00035437283</span></div>
<div style="position:absolute;top:316px;height:19px;line-height:20px;font-size:13px;font-family:'Liberation Sans', sans-serif;color:#000;white-space:pre;overflow:hidden;letter-spacing:-0.630px;left:229px;width:186px"><span style="padding-left:2px">TEJINDER SINGH S JAURA</span></div>
<div style="position:absolute;top:316px;height:19px;line-height:20px;font-size:13px;font-family:'Liberation Sans', sans-serif;color:#000;white-space:pre;overflow:hidden;letter-spacing:-0.153px;left:416px;width:68px"><span style="padding-left:2px">490033.5</span></div>
<div style="position:absolute;top:316px;height:19px;line-height:20px;font-size:13px;font-family:'Liberation Sans', sans-serif;color:#000;white-space:pre;overflow:hidden;letter-spacing:0.456px;left:558px;width:63px"><span style="padding-left:2px">Customer</span></div>
<div style="position:absolute;top:316px;height:19px;line-height:20px;font-size:13px;font-family:'Liberation Sans', sans-serif;color:#000;white-space:pre;overflow:hidden;letter-spacing:-0.442px;left:622px;width:63px"><span style="padding-left:2px">1.6 VTVT SX</span></div>
<div style="position:absolute;top:316px;height:19px;line-height:20px;font-size:13px;font-family:'Liberation Sans', sans-serif;color:#000;white-space:pre;overflow:hidden;letter-spacing:-1.012px;left:686px;width:63px"><span style="padding-left:2px">CRETA</span></div>
<div style="position:absolute;top:316px;height:19px;line-height:20px;font-size:13px;font-family:'Liberation Sans', sans-serif;color:#000;white-space:pre;overflow:hidden;letter-spacing:-1.012px;left:750px;width:63px"><span style="padding-left:2px">CRETA</span></div>
<div style="position:absolute;top:316px;height:19px;line-height:20px;font-size:13px;font-family:'Liberation Sans', sans-serif;color:#000;white-space:pre;overflow:hidden;letter-spacing:-0.194px;left:1070px;width:63px"><span style="padding-left:2px">MH43BE6777</span></div>
<div style="position:absolute;top:316px;height:19px;line-height:20px;font-size:13px;font-family:'Liberation Sans', sans-serif;color:#000;white-space:pre;overflow:hidden;letter-spacing:-0.230px;left:1134px;width:66px;text-align:right"><span style="margin-right:0.230px">26536</span></div>
<div style="position:absolute;top:316px;height:19px;line-height:20px;font-size:13px;font-family:'Liberation Sans', sans-serif;color:#000;white-space:pre;overflow:hidden;letter-spacing:-0.230px;left:1203px;width:66px;text-align:right"><span style="margin-right:0.230px">0</span></div>
<div style="position:absolute;top:316px;height:19px;line-height:20px;font-size:13px;font-family:'Liberation Sans', sans-serif;color:#000;white-space:pre;overflow:hidden;letter-spacing:-0.230px;left:1272px;width:66px;text-align:right"><span style="margin-right:0.230px">310285</span></div>
<div style="position:absolute;top:316px;height:19px;line-height:20px;font-size:13px;font-family:'Liberation Sans', sans-serif;color:#000;white-space:pre;overflow:hidden;letter-spacing:-0.230px;left:1341px;width:66px;text-align:right"><span style="margin-right:0.230px">13537</span></div>
<div style="position:absolute;top:316px;height:19px;line-height:20px;font-size:13px;font-family:'Liberation Sans', sans-serif;color:#000;white-space:pre;overflow:hidden;letter-spacing:-0.230px;left:1410px;width:66px;text-align:right"><span style="margin-right:0.230px">81014</span></div>
<div style="position:absolute;top:316px;height:19px;line-height:20px;font-size:13px;font-family:'Liberation Sans', sans-serif;color:#000;white-space:pre;overflow:hidden;letter-spacing:-0.230px;left:1479px;width:66px;text-align:right"><span style="margin-right:0.230px">0</span></div>
<div style="position:absolute;top:316px;height:19px;line-height:20px;font-size:13px;font-family:'Liberation Sans', sans-serif;color:#000;white-space:pre;overflow:hidden;letter-spacing:-0.230px;left:1548px;width:66px;text-align:right"><span style="margin-right:0.230px">404836</span></div>
<div style="position:absolute;top:316px;height:19px;line-height:20px;font-size:13px;font-family:'Liberation Sans', sans-serif;color:#000;white-space:pre;overflow:hidden;letter-spacing:-0.230px;left:1617px;width:66px;text-align:right"><span style="margin-right:0.230px">12</span></div>
<div style="position:absolute;top:316px;height:19px;line-height:20px;font-size:13px;font-family:'Liberation Sans', sans-serif;color:#000;white-space:pre;overflow:hidden;letter-spacing:-0.230px;left:1686px;width:66px;text-align:right"><span style="margin-right:0.230px">358</span></div>
<div style="position:absolute;top:316px;height:19px;line-height:20px;font-size:13px;font-family:'Liberation Sans', sans-serif;color:#000;white-space:pre;overflow:hidden;letter-spacing:-0.230px;left:1755px;width:64px;text-align:right"><span style="margin-right:0.230px">350</span></div>
<div style="position:absolute;top:316px;height:19px;line-height:20px;font-size:13px;font-family:'Liberation Sans', sans-serif;color:#000;white-space:pre;overflow:hidden;letter-spacing:-0.230px;left:1822px;width:66px;text-align:right"><span style="margin-right:0.230px">12</span></div>
<div style="position:absolute;top:316px;height:19px;line-height:20px;font-size:13px;font-family:'Liberation Sans', sans-serif;color:#000;white-space:pre;overflow:hidden;letter-spacing:-0.711px;left:1891px;width:7px"><span style="padding-left:2px">SHIFT</span></div>
<div style="position:absolute;top:336px;height:19px;line-height:20px;font-size:13px;font-family:'Liberation Sans', sans-serif;color:#000;white-space:pre;overflow:hidden;letter-spacing:-0.230px;left:26px;width:66px;text-align:right"><span style="margin-right:0.230px">5</span></div>
<div style="position:absolute;top:336px;height:19px;line-height:20px;font-size:13px;font-family:'Liberation Sans', sans-serif;color:#000;white-space:pre;overflow:hidden;letter-spacing:-0.322px;left:95px;width:133px"><span style="padding-left:2px">LUTNE00041161638</span></div>
<div style="position:absolute;top:336px;height:19px;line-height:20px;font-size:13px;font-family:'Liberation Sans', sans-serif;color:#000;white-space:pre;overflow:hidden;letter-spacing:-0.362px;left:229px;width:186px"><span style="padding-left:2px">BALU SINGH K SINGH PARMAR</span></div>
<div style="position:absolute;top:336px;height:19px;line-height:20px;font-size:13px;font-family:'Liberation Sans', sans-serif;color:#000;white-space:pre;overflow:hidden;letter-spacing:-0.230px;left:416px;width:68px"><span style="padding-left:2px">484713</span></div>
<div style="position:absolute;top:336px;height:19px;line-height:20px;font-size:13px;font-family:'Liberation Sans', sans-serif;color:#000;white-space:pre;overflow:hidden;letter-spacing:0.647px;left:558px;width:63px"><span style="padding-left:2px">Shifted</span></div>
<div style="position:absolute;top:336px;height:19px;line-height:20px;font-size:13px;font-family:'Liberation Sans', sans-serif;color:#000;white-space:pre;overflow:hidden;letter-spacing:-0.099px;left:622px;width:63px"><span style="padding-left:2px">1.5 SVMT</span></div>
<div style="position:absolute;top:336px;height:19px;line-height:20px;font-size:13px;font-family:'Liberation Sans', sans-serif;color:#000;white-space:pre;overflow:hidden;letter-spacing:-0.903px;left:686px;width:63px"><span style="padding-left:2px">CITY</span></div>
<div style="position:absolute;top:336px;height:19px;line-height:20px;font-size:13px;font-family:'Liberation Sans', sans-serif;color:#000;white-space:pre;overflow:hidden;letter-spacing:-0.903px;left:750px;width:63px"><span style="padding-left:2px">CITY</span></div>
<div style="position:absolute;top:336px;height:19px;line-height:20px;font-size:13px;font-family:'Liberation Sans', sans-serif;color:#000;white-space:pre;overflow:hidden;letter-spacing:-0.711px;left:942px;width:63px"><span style="padding-left:2px">SHIFT</span></div>
<div style="position:absolute;top:336px;height:19px;line-height:20px;font-size:13px;font-family:'Liberation Sans', sans-serif;color:#000;white-space:pre;overflow:hidden;letter-spacing:0.352px;left:1006px;width:63px"><span style="padding-left:2px">3/11/2022</span></div>
<div style="position:absolute;top:336px;height:19px;line-height:20px;font-size:13px;font-family:'Liberation Sans', sans-serif;color:#000;white-space:pre;overflow:hidden;letter-spacing:-0.177px;left:1070px;width:63px"><span style="padding-left:2px">MH03BJ7444</span></div>
<div style="position:absolute;top:336px;height:19px;line-height:20px;font-size:13px;font-family:'Liberation Sans', sans-serif;color:#000;white-space:pre;overflow:hidden;letter-spacing:-0.230px;left:1134px;width:66px;text-align:right"><span style="margin-right:0.230px">13947</span></div>
<div style="position:absolute;top:336px;height:19px;line-height:20px;font-size:13px;font-family:'Liberation Sans', sans-serif;color:#000;white-space:pre;overflow:hidden;letter-spacing:-0.230px;left:1203px;width:66px;text-align:right"><span style="margin-right:0.230px">0</span></div>
<div style="position:absolute;top:336px;height:19px;line-height:20px;font-size:13px;font-family:'Liberation Sans', sans-serif;color:#000;white-space:pre;overflow:hidden;letter-spacing:-0.230px;left:1272px;width:66px;text-align:right"><span style="margin-right:0.230px">242668</span></div>
<div style="position:absolute;top:336px;height:19px;line-height:20px;font-size:13px;font-family:'Liberation Sans', sans-serif;color:#000;white-space:pre;overflow:hidden;letter-spacing:-0.230px;left:1341px;width:66px;text-align:right"><span style="margin-right:0.230px">14811</span></div>
<div style="position:absolute;top:336px;height:19px;line-height:20px;font-size:13px;font-family:'Liberation Sans', sans-serif;color:#000;white-space:pre;overflow:hidden;letter-spacing:-0.230px;left:1410px;width:66px;text-align:right"><span style="margin-right:0.230px">41145</span></div>
<div style="position:absolute;top:336px;height:19px;line-height:20px;font-size:13px;font-family:'Liberation Sans', sans-serif;color:#000;white-space:pre;overflow:hidden;letter-spacing:-0.230px;left:1479px;width:66px;text-align:right"><span style="margin-right:0.230px">0</span></div>
<div style="position:absolute;top:336px;height:19px;line-height:20px;font-size:13px;font-family:'Liberation Sans', sans-serif;color:#000;white-space:pre;overflow:hidden;letter-spacing:-0.230px;left:1548px;width:66px;text-align:right"><span style="margin-right:0.230px">298624</span></div>
<div style="position:absolute;top:336px;height:19px;line-height:20px;font-size:13px;font-family:'Liberation Sans', sans-serif;color:#000;white-space:pre;overflow:hidden;letter-spacing:-0.230px;left:1617px;width:66px;text-align:right"><span style="margin-right:0.230px">18</span></div>
<div style="position:absolute;top:336px;height:19px;line-height:20px;font-size:13px;font-family:'Liberation Sans', sans-serif;color:#000;white-space:pre;overflow:hidden;letter-spacing:-0.230px;left:1686px;width:66px;text-align:right"><span style="margin-right:0.230px">519</span></div>
<div style="position:absolute;top:336px;height:19px;line-height:20px;font-size:13px;font-family:'Liberation Sans', sans-serif;color:#000;white-space:pre;overflow:hidden;letter-spacing:1.025px;left:1755px;width:66px;text-align:center">#N/A</div>
<div style="position:absolute;top:336px;height:19px;line-height:20px;font-size:13px;font-family:'Liberation Sans', sans-serif;color:#000;white-space:pre;overflow:hidden;letter-spacing:-0.230px;left:1822px;width:66px;text-align:right"><span style="margin-right:0.230px">13</span></div>
<div style="position:absolute;top:336px;height:19px;line-height:20px;font-size:13px;font-family:'Liberation Sans', sans-serif;color:#000;white-space:pre;overflow:hidden;letter-spacing:0.179px;left:1891px;width:7px"><span style="padding-left:2px">MOVE</span></div>
<div style="position:absolute;top:356px;height:19px;line-height:20px;font-size:13px;font-family:'Liberation Sans', sans-serif;color:#000;white-space:pre;overflow:hidden;letter-spacing:-0.230px;left:26px;width:66px;text-align:right"><span style="margin-right:0.230px">6</span></div>
<div style="position:absolute;top:356px;height:19px;line-height:20px;font-size:13px;font-family:'Liberation Sans', sans-serif;color:#000;white-space:pre;overflow:hidden;letter-spacing:-0.002px;left:95px;width:133px"><span style="padding-left:2px">LANMU00037090302</span></div>
<div style="position:absolute;top:356px;height:19px;line-height:20px;font-size:13px;font-family:'Liberation Sans', sans-serif;color:#000;white-space:pre;overflow:hidden;letter-spacing:-0.328px;left:229px;width:186px"><span style="padding-left:2px">ROBERT  HMANGAITHANG</span></div>
<div style="position:absolute;top:356px;height:19px;line-height:20px;font-size:13px;font-family:'Liberation Sans', sans-serif;color:#000;white-space:pre;overflow:hidden;letter-spacing:-0.153px;left:416px;width:68px"><span style="padding-left:2px">461481.4</span></div>
<div style="position:absolute;top:356px;height:19px;line-height:20px;font-size:13px;font-family:'Liberation Sans', sans-serif;color:#000;white-space:pre;overflow:hidden;letter-spacing:0.647px;left:558px;width:63px"><span style="padding-left:2px">Shifted</span></div>
<div style="position:absolute;top:356px;height:19px;line-height:20px;font-size:13px;font-family:'Liberation Sans', sans-serif;color:#000;white-space:pre;overflow:hidden;letter-spacing:-0.203px;left:622px;width:63px"><span style="padding-left:2px">1.5 D TITAN</span></div>
<div style="position:absolute;top:356px;height:19px;line-height:20px;font-size:13px;font-family:'Liberation Sans', sans-serif;color:#000;white-space:pre;overflow:hidden;letter-spacing:-0.781px;left:686px;width:63px"><span style="padding-left:2px">ASPIRE</span></div>
<div style="position:absolute;top:356px;height:19px;line-height:20px;font-size:13px;font-family:'Liberation Sans', sans-serif;color:#000;white-space:pre;overflow:hidden;letter-spacing:-0.781px;left:750px;width:63px"><span style="padding-left:2px">ASPIRE</span></div>
<div style="position:absolute;top:356px;height:19px;line-height:20px;font-size:13px;font-family:'Liberation Sans', sans-serif;color:#000;white-space:pre;overflow:hidden;letter-spacing:-0.194px;left:1070px;width:63px"><span style="padding-left:2px">MH46BE3777</span></div>
<div style="position:absolute;top:356px;height:19px;line-height:20px;font-size:13px;font-family:'Liberation Sans', sans-serif;color:#000;white-space:pre;overflow:hidden;letter-spacing:-0.230px;left:1134px;width:66px;text-align:right"><span style="margin-right:0.230px">14087</span></div>
<div style="position:absolute;top:356px;height:19px;line-height:20px;font-size:13px;font-family:'Liberation Sans', sans-serif;color:#000;white-space:pre;overflow:hidden;letter-spacing:-0.230px;left:1203px;width:66px;text-align:right"><span style="margin-right:0.230px">0</span></div>
<div style="position:absolute;top:356px;height:19px;line-height:20px;font-size:13px;font-family:'Liberation Sans', sans-serif;color:#000;white-space:pre;overflow:hidden;letter-spacing:-0.230px;left:1272px;width:66px;text-align:right"><span style="margin-right:0.230px">267284</span></div>
<div style="position:absolute;top:356px;height:19px;line-height:20px;font-size:13px;font-family:'Liberation Sans', sans-serif;color:#000;white-space:pre;overflow:hidden;letter-spacing:-0.230px;left:1341px;width:66px;text-align:right"><span style="margin-right:0.230px">12390</span></div>
<div style="position:absolute;top:356px;height:19px;line-height:20px;font-size:13px;font-family:'Liberation Sans', sans-serif;color:#000;white-space:pre;overflow:hidden;letter-spacing:-0.230px;left:1410px;width:66px;text-align:right"><span style="margin-right:0.230px">47710</span></div>
<div style="position:absolute;top:356px;height:19px;line-height:20px;font-size:13px;font-family:'Liberation Sans', sans-serif;color:#000;white-space:pre;overflow:hidden;letter-spacing:-0.230px;left:1479px;width:66px;text-align:right"><span style="margin-right:0.230px">0</span></div>
<div style="position:absolute;top:356px;height:19px;line-height:20px;font-size:13px;font-family:'Liberation Sans', sans-serif;color:#000;white-space:pre;overflow:hidden;letter-spacing:-0.230px;left:1548px;width:66px;text-align:right"><span style="margin-right:0.230px">327384</span></div>
<div style="position:absolute;top:356px;height:19px;line-height:20px;font-size:13px;font-family:'Liberation Sans', sans-serif;color:#000;white-space:pre;overflow:hidden;letter-spacing:-0.230px;left:1617px;width:66px;text-align:right"><span style="margin-right:0.230px">19</span></div>
<div style="position:absolute;top:356px;height:19px;line-height:20px;font-size:13px;font-family:'Liberation Sans', sans-serif;color:#000;white-space:pre;overflow:hidden;letter-spacing:-0.230px;left:1686px;width:66px;text-align:right"><span style="margin-right:0.230px">553</span></div>
<div style="position:absolute;top:356px;height:19px;line-height:20px;font-size:13px;font-family:'Liberation Sans', sans-serif;color:#000;white-space:pre;overflow:hidden;letter-spacing:-0.230px;left:1755px;width:64px;text-align:right"><span style="margin-right:0.230px">576</span></div>
<div style="position:absolute;top:356px;height:19px;line-height:20px;font-size:13px;font-family:'Liberation Sans', sans-serif;color:#000;white-space:pre;overflow:hidden;letter-spacing:-0.230px;left:1822px;width:66px;text-align:right"><span style="margin-right:0.230px">13</span></div>
<div style="position:absolute;top:356px;height:19px;line-height:20px;font-size:13px;font-family:'Liberation Sans', sans-serif;color:#000;white-space:pre;overflow:hidden;letter-spacing:-0.530px;left:1891px;width:7px"><span style="padding-left:2px">HOLD</span></div>
<div style="position:absolute;top:376px;height:19px;line-height:20px;font-size:13px;font-family:'Liberation Sans', sans-serif;font-weight:bold;color:#0000cc;white-space:pre;overflow:hidden;letter-spacing:-0.230px;left:26px;width:66px;text-align:right"><span style="margin-right:0.230px">7</span></div>
<div style="position:absolute;top:376px;height:19px;line-height:20px;font-size:13px;font-family:'Liberation Sans', sans-serif;font-weight:bold;color:#0000cc;white-space:pre;overflow:hidden;letter-spacing:-0.429px;left:95px;width:133px"><span style="padding-left:2px">LATNE00039693983</span></div>
<div style="position:absolute;top:376px;height:19px;line-height:20px;font-size:13px;font-family:'Liberation Sans', sans-serif;font-weight:bold;color:#0000cc;white-space:pre;overflow:hidden;letter-spacing:-0.259px;left:229px;width:186px"><span style="padding-left:2px">KAMRUDDIN  HAWALDAR</span></div>
<div style="position:absolute;top:376px;height:19px;line-height:20px;font-size:13px;font-family:'Liberation Sans', sans-serif;font-weight:bold;color:#0000cc;white-space:pre;overflow:hidden;letter-spacing:-0.230px;left:416px;width:68px"><span style="padding-left:2px">450335</span></div>
<div style="position:absolute;top:376px;height:19px;line-height:20px;font-size:13px;font-family:'Liberation Sans', sans-serif;font-weight:bold;color:#0000cc;white-space:pre;overflow:hidden;letter-spacing:-0.230px;left:485px;width:72px"><span style="padding-left:2px">250000</span></div>
<div style="position:absolute;top:376px;height:19px;line-height:20px;font-size:13px;font-family:'Liberation Sans', sans-serif;font-weight:bold;color:#0000cc;white-space:pre;overflow:hidden;letter-spacing:-0.085px;left:558px;width:63px"><span style="padding-left:2px">Customer</span></div>
<div style="position:absolute;top:376px;height:19px;line-height:20px;font-size:13px;font-family:'Liberation Sans', sans-serif;font-weight:bold;color:#0000cc;white-space:pre;overflow:hidden;letter-spacing:-0.466px;left:622px;width:63px"><span style="padding-left:2px">5 STR WITH</span></div>
<div style="position:absolute;top:376px;height:19px;line-height:20px;font-size:13px;font-family:'Liberation Sans', sans-serif;font-weight:bold;color:#0000cc;white-space:pre;overflow:hidden;letter-spacing:-0.518px;left:686px;width:63px"><span style="padding-left:2px">Eeco</span></div>
<div style="position:absolute;top:376px;height:19px;line-height:20px;font-size:13px;font-family:'Liberation Sans', sans-serif;font-weight:bold;color:#0000cc;white-space:pre;overflow:hidden;letter-spacing:-0.518px;left:750px;width:63px"><span style="padding-left:2px">Eeco</span></div>
<div style="position:absolute;top:376px;height:19px;line-height:20px;font-size:13px;font-family:'Liberation Sans', sans-serif;font-weight:bold;color:#0000cc;white-space:pre;overflow:hidden;letter-spacing:-0.137px;left:1070px;width:63px"><span style="padding-left:2px">MH04KD0000</span></div>
<div style="position:absolute;top:376px;height:19px;line-height:20px;font-size:13px;font-family:'Liberation Sans', sans-serif;font-weight:bold;color:#0000cc;white-space:pre;overflow:hidden;letter-spacing:-0.230px;left:1134px;width:66px;text-align:right"><span style="margin-right:0.230px">11060</span></div>
<div style="position:absolute;top:376px;height:19px;line-height:20px;font-size:13px;font-family:'Liberation Sans', sans-serif;font-weight:bold;color:#0000cc;white-space:pre;overflow:hidden;letter-spacing:-0.230px;left:1203px;width:66px;text-align:right"><span style="margin-right:0.230px">0</span></div>
<div style="position:absolute;top:376px;height:19px;line-height:20px;font-size:13px;font-family:'Liberation Sans', sans-serif;font-weight:bold;color:#0000cc;white-space:pre;overflow:hidden;letter-spacing:-0.230px;left:1272px;width:66px;text-align:right"><span style="margin-right:0.230px">124780</span></div>
<div style="position:absolute;top:376px;height:19px;line-height:20px;font-size:13px;font-family:'Liberation Sans', sans-serif;font-weight:bold;color:#0000cc;white-space:pre;overflow:hidden;letter-spacing:-0.230px;left:1341px;width:66px;text-align:right"><span style="margin-right:0.230px">12828</span></div>
<div style="position:absolute;top:376px;height:19px;line-height:20px;font-size:13px;font-family:'Liberation Sans', sans-serif;font-weight:bold;color:#0000cc;white-space:pre;overflow:hidden;letter-spacing:-0.230px;left:1410px;width:66px;text-align:right"><span style="margin-right:0.230px">17148</span></div>
<div style="position:absolute;top:376px;height:19px;line-height:20px;font-size:13px;font-family:'Liberation Sans', sans-serif;font-weight:bold;color:#0000cc;white-space:pre;overflow:hidden;letter-spacing:-0.230px;left:1479px;width:66px;text-align:right"><span style="margin-right:0.230px">0</span></div>
<div style="position:absolute;top:376px;height:19px;line-height:20px;font-size:13px;font-family:'Liberation Sans', sans-serif;font-weight:bold;color:#0000cc;white-space:pre;overflow:hidden;letter-spacing:-0.230px;left:1548px;width:66px;text-align:right"><span style="margin-right:0.230px">154756</span></div>
<div style="position:absolute;top:376px;height:19px;line-height:20px;font-size:13px;font-family:'Liberation Sans', sans-serif;font-weight:bold;color:#0000cc;white-space:pre;overflow:hidden;letter-spacing:-0.230px;left:1617px;width:66px;text-align:right"><span style="margin-right:0.230px">12</span></div>
<div style="position:absolute;top:376px;height:19px;line-height:20px;font-size:13px;font-family:'Liberation Sans', sans-serif;font-weight:bold;color:#0000cc;white-space:pre;overflow:hidden;letter-spacing:-0.230px;left:1686px;width:66px;text-align:right"><span style="margin-right:0.230px">358</span></div>
<div style="position:absolute;top:376px;height:19px;line-height:20px;font-size:13px;font-family:'Liberation Sans', sans-serif;font-weight:bold;color:#0000cc;white-space:pre;overflow:hidden;letter-spacing:-0.230px;left:1755px;width:64px;text-align:right"><span style="margin-right:0.230px">0</span></div>
<div style="position:absolute;top:376px;height:19px;line-height:20px;font-size:13px;font-family:'Liberation Sans', sans-serif;font-weight:bold;color:#0000cc;white-space:pre;overflow:hidden;letter-spacing:-0.230px;left:1822px;width:66px;text-align:right"><span style="margin-right:0.230px">12</span></div>
<div style="position:absolute;top:376px;height:19px;line-height:20px;font-size:13px;font-family:'Liberation Sans', sans-serif;font-weight:bold;color:#0000cc;white-space:pre;overflow:hidden;letter-spacing:0.179px;left:1891px;width:7px"><span style="padding-left:2px">MOVE</span></div>
<div style="position:absolute;top:396px;height:19px;line-height:20px;font-size:13px;font-family:'Liberation Sans', sans-serif;color:#000;white-space:pre;overflow:hidden;letter-spacing:-0.230px;left:26px;width:66px;text-align:right"><span style="margin-right:0.230px">8</span></div>
<div style="position:absolute;top:396px;height:19px;line-height:20px;font-size:13px;font-family:'Liberation Sans', sans-serif;color:#000;white-space:pre;overflow:hidden;letter-spacing:-0.002px;left:95px;width:133px"><span style="padding-left:2px">LANMU00040769508</span></div>
<div style="position:absolute;top:396px;height:19px;line-height:20px;font-size:13px;font-family:'Liberation Sans', sans-serif;color:#000;white-space:pre;overflow:hidden;letter-spacing:-0.346px;left:229px;width:186px"><span style="padding-left:2px">TUSHAR RAMCHANDRA PATIL</span></div>
<div style="position:absolute;top:396px;height:19px;line-height:20px;font-size:13px;font-family:'Liberation Sans', sans-serif;color:#000;white-space:pre;overflow:hidden;letter-spacing:-0.230px;left:416px;width:68px"><span style="padding-left:2px">413893</span></div>
<div style="position:absolute;top:396px;height:19px;line-height:20px;font-size:13px;font-family:'Liberation Sans', sans-serif;color:#000;white-space:pre;overflow:hidden;letter-spacing:0.647px;left:558px;width:63px"><span style="padding-left:2px">Shifted</span></div>
<div style="position:absolute;top:396px;height:19px;line-height:20px;font-size:13px;font-family:'Liberation Sans', sans-serif;color:#000;white-space:pre;overflow:hidden;letter-spacing:-0.745px;left:622px;width:63px"><span style="padding-left:2px">RXT O</span></div>
<div style="position:absolute;top:396px;height:19px;line-height:20px;font-size:13px;font-family:'Liberation Sans', sans-serif;color:#000;white-space:pre;overflow:hidden;letter-spacing:0.015px;left:686px;width:63px"><span style="padding-left:2px">KWID</span></div>
<div style="position:absolute;top:396px;height:19px;line-height:20px;font-size:13px;font-family:'Liberation Sans', sans-serif;color:#000;white-space:pre;overflow:hidden;letter-spacing:0.015px;left:750px;width:63px"><span style="padding-left:2px">KWID</span></div>
<div style="position:absolute;top:396px;height:19px;line-height:20px;font-size:13px;font-family:'Liberation Sans', sans-serif;color:#000;white-space:pre;overflow:hidden;letter-spacing:-0.711px;left:942px;width:63px"><span style="padding-left:2px">SHIFT</span></div>
<div style="position:absolute;top:396px;height:19px;line-height:20px;font-size:13px;font-family:'Liberation Sans', sans-serif;color:#000;white-space:pre;overflow:hidden;letter-spacing:0.352px;left:1006px;width:63px"><span style="padding-left:2px">3/11/2022</span></div>
<div style="position:absolute;top:396px;height:19px;line-height:20px;font-size:13px;font-family:'Liberation Sans', sans-serif;color:#000;white-space:pre;overflow:hidden;letter-spacing:0.034px;left:1070px;width:63px"><span style="padding-left:2px">MH43BN8888</span></div>
<div style="position:absolute;top:396px;height:19px;line-height:20px;font-size:13px;font-family:'Liberation Sans', sans-serif;color:#000;white-space:pre;overflow:hidden;letter-spacing:-0.230px;left:1134px;width:66px;text-align:right"><span style="margin-right:0.230px">9722</span></div>
<div style="position:absolute;top:396px;height:19px;line-height:20px;font-size:13px;font-family:'Liberation Sans', sans-serif;color:#000;white-space:pre;overflow:hidden;letter-spacing:-0.230px;left:1203px;width:66px;text-align:right"><span style="margin-right:0.230px">0</span></div>
<div style="position:absolute;top:396px;height:19px;line-height:20px;font-size:13px;font-family:'Liberation Sans', sans-serif;color:#000;white-space:pre;overflow:hidden;letter-spacing:-0.230px;left:1272px;width:66px;text-align:right"><span style="margin-right:0.230px">145420</span></div>
<div style="position:absolute;top:396px;height:19px;line-height:20px;font-size:13px;font-family:'Liberation Sans', sans-serif;color:#000;white-space:pre;overflow:hidden;letter-spacing:-0.230px;left:1341px;width:66px;text-align:right"><span style="margin-right:0.230px">10620</span></div>
<div style="position:absolute;top:396px;height:19px;line-height:20px;font-size:13px;font-family:'Liberation Sans', sans-serif;color:#000;white-space:pre;overflow:hidden;letter-spacing:-0.230px;left:1410px;width:66px;text-align:right"><span style="margin-right:0.230px">24253</span></div>
<div style="position:absolute;top:396px;height:19px;line-height:20px;font-size:13px;font-family:'Liberation Sans', sans-serif;color:#000;white-space:pre;overflow:hidden;letter-spacing:-0.230px;left:1479px;width:66px;text-align:right"><span style="margin-right:0.230px">0</span></div>
<div style="position:absolute;top:396px;height:19px;line-height:20px;font-size:13px;font-family:'Liberation Sans', sans-serif;color:#000;white-space:pre;overflow:hidden;letter-spacing:-0.230px;left:1548px;width:66px;text-align:right"><span style="margin-right:0.230px">180293</span></div>
<div style="position:absolute;top:396px;height:19px;line-height:20px;font-size:13px;font-family:'Liberation Sans', sans-serif;color:#000;white-space:pre;overflow:hidden;letter-spacing:-0.230px;left:1617px;width:66px;text-align:right"><span style="margin-right:0.230px">15</span></div>
<div style="position:absolute;top:396px;height:19px;line-height:20px;font-size:13px;font-family:'Liberation Sans', sans-serif;color:#000;white-space:pre;overflow:hidden;letter-spacing:-0.230px;left:1686px;width:66px;text-align:right"><span style="margin-right:0.230px">453</span></div>
<div style="position:absolute;top:396px;height:19px;line-height:20px;font-size:13px;font-family:'Liberation Sans', sans-serif;color:#000;white-space:pre;overflow:hidden;letter-spacing:-0.230px;left:1755px;width:64px;text-align:right"><span style="margin-right:0.230px">476</span></div>
<div style="position:absolute;top:396px;height:19px;line-height:20px;font-size:13px;font-family:'Liberation Sans', sans-serif;color:#000;white-space:pre;overflow:hidden;letter-spacing:-0.230px;left:1822px;width:66px;text-align:right"><span style="margin-right:0.230px">13</span></div>
<div style="position:absolute;top:396px;height:19px;line-height:20px;font-size:13px;font-family:'Liberation Sans', sans-serif;color:#000;white-space:pre;overflow:hidden;letter-spacing:-0.724px;left:1891px;width:7px"><span style="padding-left:2px">EXIT</span></div>
<div style="position:absolute;top:416px;height:19px;line-height:20px;font-size:13px;font-family:'Liberation Sans', sans-serif;font-weight:bold;color:#ff00ff;white-space:pre;overflow:hidden;letter-spacing:-0.230px;left:26px;width:66px;text-align:right"><span style="margin-right:0.230px">9</span></div>
<div style="position:absolute;top:416px;height:19px;line-height:20px;font-size:13px;font-family:'Liberation Sans', sans-serif;font-weight:bold;color:#ff00ff;white-space:pre;overflow:hidden;letter-spacing:-0.092px;left:95px;width:133px"><span style="padding-left:2px">LANMU00038361377</span></div>
<div style="position:absolute;top:416px;height:19px;line-height:20px;font-size:13px;font-family:'Liberation Sans', sans-serif;font-weight:bold;color:#ff00ff;white-space:pre;overflow:hidden;letter-spacing:-0.660px;left:229px;width:186px"><span style="padding-left:2px">SUSHILA D RUDHE</span></div>
<div style="position:absolute;top:416px;height:19px;line-height:20px;font-size:13px;font-family:'Liberation Sans', sans-serif;font-weight:bold;color:#ff00ff;white-space:pre;overflow:hidden;letter-spacing:-0.230px;left:416px;width:68px"><span style="padding-left:2px">369289</span></div>
<div style="position:absolute;top:416px;height:19px;line-height:20px;font-size:13px;font-family:'Liberation Sans', sans-serif;font-weight:bold;color:#ff00ff;white-space:pre;overflow:hidden;letter-spacing:0.135px;left:558px;width:63px"><span style="padding-left:2px">Shifted</span></div>
<div style="position:absolute;top:416px;height:19px;line-height:20px;font-size:13px;font-family:'Liberation Sans', sans-serif;font-weight:bold;color:#ff00ff;white-space:pre;overflow:hidden;letter-spacing:-0.208px;left:622px;width:63px"><span style="padding-left:2px">VXi CNG</span></div>
<div style="position:absolute;top:416px;height:19px;line-height:20px;font-size:13px;font-family:'Liberation Sans', sans-serif;font-weight:bold;color:#ff00ff;white-space:pre;overflow:hidden;letter-spacing:0.133px;left:686px;width:63px"><span style="padding-left:2px">Celerio</span></div>
<div style="position:absolute;top:416px;height:19px;line-height:20px;font-size:13px;font-family:'Liberation Sans', sans-serif;font-weight:bold;color:#ff00ff;white-space:pre;overflow:hidden;letter-spacing:-0.208px;left:750px;width:63px"><span style="padding-left:2px">VXi CNG</span></div>
<div style="position:absolute;top:416px;height:19px;line-height:20px;font-size:13px;font-family:'Liberation Sans', sans-serif;font-weight:bold;color:#ff00ff;white-space:pre;overflow:hidden;letter-spacing:-0.711px;left:942px;width:63px"><span style="padding-left:2px">SHIFT</span></div>
<div style="position:absolute;top:416px;height:19px;line-height:20px;font-size:13px;font-family:'Liberation Sans', sans-serif;font-weight:bold;color:#ff00ff;white-space:pre;overflow:hidden;letter-spacing:0.352px;left:1006px;width:63px"><span style="padding-left:2px">3/11/2022</span></div>
<div style="position:absolute;top:416px;height:19px;line-height:20px;font-size:13px;font-family:'Liberation Sans', sans-serif;font-weight:bold;color:#ff00ff;white-space:pre;overflow:hidden;letter-spacing:-0.237px;left:1070px;width:63px"><span style="padding-left:2px">MH46BK8444</span></div>
<div style="position:absolute;top:416px;height:19px;line-height:20px;font-size:13px;font-family:'Liberation Sans', sans-serif;font-weight:bold;color:#ff00ff;white-space:pre;overflow:hidden;letter-spacing:-0.230px;left:1134px;width:66px;text-align:right"><span style="margin-right:0.230px">10434</span></div>
<div style="position:absolute;top:416px;height:19px;line-height:20px;font-size:13px;font-family:'Liberation Sans', sans-serif;font-weight:bold;color:#ff00ff;white-space:pre;overflow:hidden;letter-spacing:-0.230px;left:1203px;width:66px;text-align:right"><span style="margin-right:0.230px">0</span></div>
<div style="position:absolute;top:416px;height:19px;line-height:20px;font-size:13px;font-family:'Liberation Sans', sans-serif;font-weight:bold;color:#ff00ff;white-space:pre;overflow:hidden;letter-spacing:-0.230px;left:1272px;width:66px;text-align:right"><span style="margin-right:0.230px">103729</span></div>
<div style="position:absolute;top:416px;height:19px;line-height:20px;font-size:13px;font-family:'Liberation Sans', sans-serif;font-weight:bold;color:#ff00ff;white-space:pre;overflow:hidden;letter-spacing:-0.230px;left:1341px;width:66px;text-align:right"><span style="margin-right:0.230px">11800</span></div>
<div style="position:absolute;top:416px;height:19px;line-height:20px;font-size:13px;font-family:'Liberation Sans', sans-serif;font-weight:bold;color:#ff00ff;white-space:pre;overflow:hidden;letter-spacing:-0.230px;left:1410px;width:66px;text-align:right"><span style="margin-right:0.230px">12341</span></div>
<div style="position:absolute;top:416px;height:19px;line-height:20px;font-size:13px;font-family:'Liberation Sans', sans-serif;font-weight:bold;color:#ff00ff;white-space:pre;overflow:hidden;letter-spacing:-0.230px;left:1479px;width:66px;text-align:right"><span style="margin-right:0.230px">0</span></div>
<div style="position:absolute;top:416px;height:19px;line-height:20px;font-size:13px;font-family:'Liberation Sans', sans-serif;font-weight:bold;color:#ff00ff;white-space:pre;overflow:hidden;letter-spacing:-0.230px;left:1548px;width:66px;text-align:right"><span style="margin-right:0.230px">127870</span></div>
<div style="position:absolute;top:416px;height:19px;line-height:20px;font-size:13px;font-family:'Liberation Sans', sans-serif;font-weight:bold;color:#ff00ff;white-space:pre;overflow:hidden;letter-spacing:-0.230px;left:1617px;width:66px;text-align:right"><span style="margin-right:0.230px">10</span></div>
<div style="position:absolute;top:416px;height:19px;line-height:20px;font-size:13px;font-family:'Liberation Sans', sans-serif;font-weight:bold;color:#ff00ff;white-space:pre;overflow:hidden;letter-spacing:-0.230px;left:1686px;width:66px;text-align:right"><span style="margin-right:0.230px">297</span></div>
<div style="position:absolute;top:416px;height:19px;line-height:20px;font-size:13px;font-family:'Liberation Sans', sans-serif;color:#000;white-space:pre;overflow:hidden;letter-spacing:-0.230px;left:1755px;width:64px;text-align:right"><span style="margin-right:0.230px">320</span></div>
<div style="position:absolute;top:416px;height:19px;line-height:20px;font-size:13px;font-family:'Liberation Sans', sans-serif;font-weight:bold;color:#ff00ff;white-space:pre;overflow:hidden;letter-spacing:-0.230px;left:1822px;width:66px;text-align:right"><span style="margin-right:0.230px">10</span></div>
<div style="position:absolute;top:436px;height:19px;line-height:20px;font-size:13px;font-family:'Liberation Sans', sans-serif;font-weight:bold;color:#0000cc;white-space:pre;overflow:hidden;letter-spacing:-0.230px;left:26px;width:66px;text-align:right"><span style="margin-right:0.230px">10</span></div>
<div style="position:absolute;top:436px;height:19px;line-height:20px;font-size:13px;font-family:'Liberation Sans', sans-serif;font-weight:bold;color:#0000cc;white-space:pre;overflow:hidden;letter-spacing:0.006px;left:95px;width:133px"><span style="padding-left:2px">LAMUM00037578939</span></div>
<div style="position:absolute;top:436px;height:19px;line-height:20px;font-size:13px;font-family:'Liberation Sans', sans-serif;font-weight:bold;color:#0000cc;white-space:pre;overflow:hidden;letter-spacing:-0.479px;left:229px;width:186px"><span style="padding-left:2px">SAZID  .</span></div>
<div style="position:absolute;top:436px;height:19px;line-height:20px;font-size:13px;font-family:'Liberation Sans', sans-serif;font-weight:bold;color:#0000cc;white-space:pre;overflow:hidden;letter-spacing:-0.161px;left:416px;width:68px"><span style="padding-left:2px">367277.32</span></div>
<div style="position:absolute;top:436px;height:19px;line-height:20px;font-size:13px;font-family:'Liberation Sans', sans-serif;font-weight:bold;color:#0000cc;white-space:pre;overflow:hidden;letter-spacing:-0.230px;left:485px;width:72px"><span style="padding-left:2px">50000</span></div>
<div style="position:absolute;top:436px;height:19px;line-height:20px;font-size:13px;font-family:'Liberation Sans', sans-serif;font-weight:bold;color:#0000cc;white-space:pre;overflow:hidden;letter-spacing:-0.085px;left:558px;width:63px"><span style="padding-left:2px">Customer</span></div>
<div style="position:absolute;top:436px;height:19px;line-height:20px;font-size:13px;font-family:'Liberation Sans', sans-serif;font-weight:bold;color:#0000cc;white-space:pre;overflow:hidden;letter-spacing:0.110px;left:622px;width:63px"><span style="padding-left:2px">VDI</span></div>
<div style="position:absolute;top:436px;height:19px;line-height:20px;font-size:13px;font-family:'Liberation Sans', sans-serif;font-weight:bold;color:#0000cc;white-space:pre;overflow:hidden;letter-spacing:-0.800px;left:686px;width:63px"><span style="padding-left:2px">DZIRE</span></div>
<div style="position:absolute;top:436px;height:19px;line-height:20px;font-size:13px;font-family:'Liberation Sans', sans-serif;font-weight:bold;color:#0000cc;white-space:pre;overflow:hidden;letter-spacing:-0.800px;left:750px;width:63px"><span style="padding-left:2px">DZIRE</span></div>
<div style="position:absolute;top:436px;height:19px;line-height:20px;font-size:13px;font-family:'Liberation Sans', sans-serif;font-weight:bold;color:#0000cc;white-space:pre;overflow:hidden;letter-spacing:-0.394px;left:1070px;width:63px"><span style="padding-left:2px">HR28H9722</span></div>
<div style="position:absolute;top:436px;height:19px;line-height:20px;font-size:13px;font-family:'Liberation Sans', sans-serif;font-weight:bold;color:#0000cc;white-space:pre;overflow:hidden;letter-spacing:-0.230px;left:1134px;width:66px;text-align:right"><span style="margin-right:0.230px">12808</span></div>
<div style="position:absolute;top:436px;height:19px;line-height:20px;font-size:13px;font-family:'Liberation Sans', sans-serif;font-weight:bold;color:#0000cc;white-space:pre;overflow:hidden;letter-spacing:-0.230px;left:1203px;width:66px;text-align:right"><span style="margin-right:0.230px">0</span></div>
<div style="position:absolute;top:436px;height:19px;line-height:20px;font-size:13px;font-family:'Liberation Sans', sans-serif;font-weight:bold;color:#0000cc;white-space:pre;overflow:hidden;letter-spacing:-0.161px;left:1272px;width:66px;text-align:right"><span style="margin-right:0.161px">108551.32</span></div>
<div style="position:absolute;top:436px;height:19px;line-height:20px;font-size:13px;font-family:'Liberation Sans', sans-serif;font-weight:bold;color:#0000cc;white-space:pre;overflow:hidden;letter-spacing:-0.230px;left:1341px;width:66px;text-align:right"><span style="margin-right:0.230px">12390</span></div>
<div style="position:absolute;top:436px;height:19px;line-height:20px;font-size:13px;font-family:'Liberation Sans', sans-serif;font-weight:bold;color:#0000cc;white-space:pre;overflow:hidden;letter-spacing:-0.230px;left:1410px;width:66px;text-align:right"><span style="margin-right:0.230px">24821</span></div>
<div style="position:absolute;top:436px;height:19px;line-height:20px;font-size:13px;font-family:'Liberation Sans', sans-serif;font-weight:bold;color:#0000cc;white-space:pre;overflow:hidden;letter-spacing:-0.230px;left:1479px;width:66px;text-align:right"><span style="margin-right:0.230px">0</span></div>
<div style="position:absolute;top:436px;height:19px;line-height:20px;font-size:13px;font-family:'Liberation Sans', sans-serif;font-weight:bold;color:#0000cc;white-space:pre;overflow:hidden;letter-spacing:-0.161px;left:1548px;width:66px;text-align:right"><span style="margin-right:0.161px">145762.32</span></div>
<div style="position:absolute;top:436px;height:19px;line-height:20px;font-size:13px;font-family:'Liberation Sans', sans-serif;font-weight:bold;color:#0000cc;white-space:pre;overflow:hidden;letter-spacing:-0.230px;left:1617px;width:66px;text-align:right"><span style="margin-right:0.230px">9</span></div>
<div style="position:absolute;top:436px;height:19px;line-height:20px;font-size:13px;font-family:'Liberation Sans', sans-serif;font-weight:bold;color:#0000cc;white-space:pre;overflow:hidden;letter-spacing:-0.230px;left:1686px;width:66px;text-align:right"><span style="margin-right:0.230px">266</span></div>
<div style="position:absolute;top:436px;height:19px;line-height:20px;font-size:13px;font-family:'Liberation Sans', sans-serif;color:#000;white-space:pre;overflow:hidden;letter-spacing:-0.230px;left:1755px;width:64px;text-align:right"><span style="margin-right:0.230px">167</span></div>
<div style="position:absolute;top:436px;height:19px;line-height:20px;font-size:13px;font-family:'Liberation Sans', sans-serif;font-weight:bold;color:#0000cc;white-space:pre;overflow:hidden;letter-spacing:-0.230px;left:1822px;width:66px;text-align:right"><span style="margin-right:0.230px">9</span></div>
<div style="position:absolute;top:436px;height:19px;line-height:20px;font-size:13px;font-family:'Liberation Sans', sans-serif;font-weight:bold;color:#0000cc;white-space:pre;overflow:hidden;letter-spacing:-0.530px;left:1891px;width:7px"><span style="padding-left:2px">PEND</span></div>
<div style="position:absolute;top:456px;height:19px;line-height:20px;font-size:13px;font-family:'Liberation Sans', sans-serif;color:#000;white-space:pre;overflow:hidden;letter-spacing:-0.230px;left:26px;width:66px;text-align:right"><span style="margin-right:0.230px">11</span></div>
<div style="position:absolute;top:456px;height:19px;line-height:20px;font-size:13px;font-family:'Liberation Sans', sans-serif;color:#000;white-space:pre;overflow:hidden;letter-spacing:-0.313px;left:95px;width:133px"><span style="padding-left:2px">LAPVL00041041120</span></div>
<div style="position:absolute;top:456px;height:19px;line-height:20px;font-size:13px;font-family:'Liberation Sans', sans-serif;color:#000;white-space:pre;overflow:hidden;letter-spacing:-0.628px;left:229px;width:186px"><span style="padding-left:2px">YATIS  SHAH</span></div>
<div style="position:absolute;top:456px;height:19px;line-height:20px;font-size:13px;font-family:'Liberation Sans', sans-serif;color:#000;white-space:pre;overflow:hidden;letter-spacing:-0.230px;left:416px;width:68px"><span style="padding-left:2px">363659</span></div>
<div style="position:absolute;top:456px;height:19px;line-height:20px;font-size:13px;font-family:'Liberation Sans', sans-serif;color:#000;white-space:pre;overflow:hidden;letter-spacing:0.647px;left:558px;width:63px"><span style="padding-left:2px">Shifted</span></div>
<div style="position:absolute;top:456px;height:19px;line-height:20px;font-size:13px;font-family:'Liberation Sans', sans-serif;color:#000;white-space:pre;overflow:hidden;letter-spacing:-1.671px;left:622px;width:63px"><span style="padding-left:2px">S</span></div>
<div style="position:absolute;top:456px;height:19px;line-height:20px;font-size:13px;font-family:'Liberation Sans', sans-serif;color:#000;white-space:pre;overflow:hidden;letter-spacing:0.102px;left:686px;width:63px"><span style="padding-left:2px">Redi-GO</span></div>
<div style="position:absolute;top:456px;height:19px;line-height:20px;font-size:13px;font-family:'Liberation Sans', sans-serif;color:#000;white-space:pre;overflow:hidden;letter-spacing:0.102px;left:750px;width:63px"><span style="padding-left:2px">Redi-GO</span></div>
<div style="position:absolute;top:456px;height:19px;line-height:20px;font-size:13px;font-family:'Liberation Sans', sans-serif;color:#000;white-space:pre;overflow:hidden;letter-spacing:-0.038px;left:1070px;width:63px"><span style="padding-left:2px">MH46BQ3333</span></div>
<div style="position:absolute;top:456px;height:19px;line-height:20px;font-size:13px;font-family:'Liberation Sans', sans-serif;color:#000;white-space:pre;overflow:hidden;letter-spacing:-0.230px;left:1134px;width:66px;text-align:right"><span style="margin-right:0.230px">5910</span></div>
<div style="position:absolute;top:456px;height:19px;line-height:20px;font-size:13px;font-family:'Liberation Sans', sans-serif;color:#000;white-space:pre;overflow:hidden;letter-spacing:-0.230px;left:1203px;width:66px;text-align:right"><span style="margin-right:0.230px">0</span></div>
<div style="position:absolute;top:456px;height:19px;line-height:20px;font-size:13px;font-family:'Liberation Sans', sans-serif;color:#000;white-space:pre;overflow:hidden;letter-spacing:-0.230px;left:1272px;width:66px;text-align:right"><span style="margin-right:0.230px">110137</span></div>
<div style="position:absolute;top:456px;height:19px;line-height:20px;font-size:13px;font-family:'Liberation Sans', sans-serif;color:#000;white-space:pre;overflow:hidden;letter-spacing:-0.230px;left:1341px;width:66px;text-align:right"><span style="margin-right:0.230px">12980</span></div>
<div style="position:absolute;top:456px;height:19px;line-height:20px;font-size:13px;font-family:'Liberation Sans', sans-serif;color:#000;white-space:pre;overflow:hidden;letter-spacing:-0.230px;left:1410px;width:66px;text-align:right"><span style="margin-right:0.230px">20881</span></div>
<div style="position:absolute;top:456px;height:19px;line-height:20px;font-size:13px;font-family:'Liberation Sans', sans-serif;color:#000;white-space:pre;overflow:hidden;letter-spacing:-0.230px;left:1479px;width:66px;text-align:right"><span style="margin-right:0.230px">0</span></div>
<div style="position:absolute;top:456px;height:19px;line-height:20px;font-size:13px;font-family:'Liberation Sans', sans-serif;color:#000;white-space:pre;overflow:hidden;letter-spacing:-0.230px;left:1548px;width:66px;text-align:right"><span style="margin-right:0.230px">143998</span></div>
<div style="position:absolute;top:456px;height:19px;line-height:20px;font-size:13px;font-family:'Liberation Sans', sans-serif;color:#000;white-space:pre;overflow:hidden;letter-spacing:-0.230px;left:1617px;width:66px;text-align:right"><span style="margin-right:0.230px">19</span></div>
<div style="position:absolute;top:456px;height:19px;line-height:20px;font-size:13px;font-family:'Liberation Sans', sans-serif;color:#000;white-space:pre;overflow:hidden;letter-spacing:-0.230px;left:1686px;width:66px;text-align:right"><span style="margin-right:0.230px">575</span></div>
<div style="position:absolute;top:456px;height:19px;line-height:20px;font-size:13px;font-family:'Liberation Sans', sans-serif;color:#000;white-space:pre;overflow:hidden;letter-spacing:-0.230px;left:1755px;width:64px;text-align:right"><span style="margin-right:0.230px">598</span></div>
<div style="position:absolute;top:456px;height:19px;line-height:20px;font-size:13px;font-family:'Liberation Sans', sans-serif;color:#000;white-space:pre;overflow:hidden;letter-spacing:-0.230px;left:1822px;width:66px;text-align:right"><span style="margin-right:0.230px">13</span></div>
<div style="position:absolute;top:456px;height:19px;line-height:20px;font-size:13px;font-family:'Liberation Sans', sans-serif;color:#000;white-space:pre;overflow:hidden;letter-spacing:-0.724px;left:1891px;width:7px"><span style="padding-left:2px">EXIT</span></div>
<div style="position:absolute;top:476px;height:19px;line-height:20px;font-size:13px;font-family:'Liberation Sans', sans-serif;color:#000;white-space:pre;overflow:hidden;letter-spacing:-0.230px;left:26px;width:66px;text-align:right"><span style="margin-right:0.230px">12</span></div>
<div style="position:absolute;top:476px;height:19px;line-height:20px;font-size:13px;font-family:'Liberation Sans', sans-serif;color:#000;white-space:pre;overflow:hidden;letter-spacing:0.113px;left:95px;width:133px"><span style="padding-left:2px">LUMUM00037768116</span></div>
<div style="position:absolute;top:476px;height:19px;line-height:20px;font-size:13px;font-family:'Liberation Sans', sans-serif;color:#000;white-space:pre;overflow:hidden;letter-spacing:-0.228px;left:229px;width:186px"><span style="padding-left:2px">RAM  SINGH</span></div>
<div style="position:absolute;top:476px;height:19px;line-height:20px;font-size:13px;font-family:'Liberation Sans', sans-serif;color:#000;white-space:pre;overflow:hidden;letter-spacing:-0.230px;left:416px;width:68px"><span style="padding-left:2px">337397</span></div>
<div style="position:absolute;top:476px;height:19px;line-height:20px;font-size:13px;font-family:'Liberation Sans', sans-serif;color:#000;white-space:pre;overflow:hidden;letter-spacing:0.647px;left:558px;width:63px"><span style="padding-left:2px">Shifted</span></div>
<div style="position:absolute;top:476px;height:19px;line-height:20px;font-size:13px;font-family:'Liberation Sans', sans-serif;color:#000;white-space:pre;overflow:hidden;letter-spacing:-0.280px;left:622px;width:63px"><span style="padding-left:2px">VDI BS IV</span></div>
<div style="position:absolute;top:476px;height:19px;line-height:20px;font-size:13px;font-family:'Liberation Sans', sans-serif;color:#000;white-space:pre;overflow:hidden;letter-spacing:-0.641px;left:686px;width:63px"><span style="padding-left:2px">SWIFT DZIRE</span></div>
<div style="position:absolute;top:476px;height:19px;line-height:20px;font-size:13px;font-family:'Liberation Sans', sans-serif;color:#000;white-space:pre;overflow:hidden;letter-spacing:-0.641px;left:750px;width:63px"><span style="padding-left:2px">SWIFT DZIRE</span></div>
<div style="position:absolute;top:476px;height:19px;line-height:20px;font-size:13px;font-family:'Liberation Sans', sans-serif;color:#000;white-space:pre;overflow:hidden;letter-spacing:-0.066px;left:1070px;width:63px"><span style="padding-left:2px">MH40AC9999</span></div>
<div style="position:absolute;top:476px;height:19px;line-height:20px;font-size:13px;font-family:'Liberation Sans', sans-serif;color:#000;white-space:pre;overflow:hidden;letter-spacing:-0.230px;left:1134px;width:66px;text-align:right"><span style="margin-right:0.230px">10633</span></div>
<div style="position:absolute;top:476px;height:19px;line-height:20px;font-size:13px;font-family:'Liberation Sans', sans-serif;color:#000;white-space:pre;overflow:hidden;letter-spacing:-0.230px;left:1203px;width:66px;text-align:right"><span style="margin-right:0.230px">0</span></div>
<div style="position:absolute;top:476px;height:19px;line-height:20px;font-size:13px;font-family:'Liberation Sans', sans-serif;color:#000;white-space:pre;overflow:hidden;letter-spacing:-0.230px;left:1272px;width:66px;text-align:right"><span style="margin-right:0.230px">132262</span></div>
<div style="position:absolute;top:476px;height:19px;line-height:20px;font-size:13px;font-family:'Liberation Sans', sans-serif;color:#000;white-space:pre;overflow:hidden;letter-spacing:-0.230px;left:1341px;width:66px;text-align:right"><span style="margin-right:0.230px">11523</span></div>
<div style="position:absolute;top:476px;height:19px;line-height:20px;font-size:13px;font-family:'Liberation Sans', sans-serif;color:#000;white-space:pre;overflow:hidden;letter-spacing:-0.230px;left:1410px;width:66px;text-align:right"><span style="margin-right:0.230px">17738</span></div>
<div style="position:absolute;top:476px;height:19px;line-height:20px;font-size:13px;font-family:'Liberation Sans', sans-serif;color:#000;white-space:pre;overflow:hidden;letter-spacing:-0.230px;left:1479px;width:66px;text-align:right"><span style="margin-right:0.230px">0</span></div>
<div style="position:absolute;top:476px;height:19px;line-height:20px;font-size:13px;font-family:'Liberation Sans', sans-serif;color:#000;white-space:pre;overflow:hidden;letter-spacing:-0.230px;left:1548px;width:66px;text-align:right"><span style="margin-right:0.230px">161523</span></div>
<div style="position:absolute;top:476px;height:19px;line-height:20px;font-size:13px;font-family:'Liberation Sans', sans-serif;color:#000;white-space:pre;overflow:hidden;letter-spacing:-0.230px;left:1617px;width:66px;text-align:right"><span style="margin-right:0.230px">13</span></div>
<div style="position:absolute;top:476px;height:19px;line-height:20px;font-size:13px;font-family:'Liberation Sans', sans-serif;color:#000;white-space:pre;overflow:hidden;letter-spacing:-0.230px;left:1686px;width:66px;text-align:right"><span style="margin-right:0.230px">386</span></div>
<div style="position:absolute;top:476px;height:19px;line-height:20px;font-size:13px;font-family:'Liberation Sans', sans-serif;color:#000;white-space:pre;overflow:hidden;letter-spacing:-0.230px;left:1755px;width:64px;text-align:right"><span style="margin-right:0.230px">409</span></div>
<div style="position:absolute;top:476px;height:19px;line-height:20px;font-size:13px;font-family:'Liberation Sans', sans-serif;color:#000;white-space:pre;overflow:hidden;letter-spacing:-0.230px;left:1822px;width:66px;text-align:right"><span style="margin-right:0.230px">13</span></div>
<div style="position:absolute;top:476px;height:19px;line-height:20px;font-size:13px;font-family:'Liberation Sans', sans-serif;color:#000;white-space:pre;overflow:hidden;letter-spacing:0.179px;left:1891px;width:7px"><span style="padding-left:2px">MOVE</span></div>
<div style="position:absolute;top:496px;height:19px;line-height:20px;font-size:13px;font-family:'Liberation Sans', sans-serif;color:#000;white-space:pre;overflow:hidden;letter-spacing:-0.230px;left:26px;width:66px;text-align:right"><span style="margin-right:0.230px">13</span></div>
<div style="position:absolute;top:496px;height:19px;line-height:20px;font-size:13px;font-family:'Liberation Sans', sans-serif;color:#000;white-space:pre;overflow:hidden;letter-spacing:-0.002px;left:95px;width:133px"><span style="padding-left:2px">LANMU00036579963</span></div>
<div style="position:absolute;top:496px;height:19px;line-height:20px;font-size:13px;font-family:'Liberation Sans', sans-serif;color:#000;white-space:pre;overflow:hidden;letter-spacing:-0.275px;left:229px;width:186px"><span style="padding-left:2px">SAMIR   DESHMUKH</span></div>
<div style="position:absolute;top:496px;height:19px;line-height:20px;font-size:13px;font-family:'Liberation Sans', sans-serif;color:#000;white-space:pre;overflow:hidden;letter-spacing:-0.230px;left:416px;width:68px"><span style="padding-left:2px">330237</span></div>
<div style="position:absolute;top:496px;height:19px;line-height:20px;font-size:13px;font-family:'Liberation Sans', sans-serif;color:#000;white-space:pre;overflow:hidden;letter-spacing:0.647px;left:558px;width:63px"><span style="padding-left:2px">Shifted</span></div>
<div style="position:absolute;top:496px;height:19px;line-height:20px;font-size:13px;font-family:'Liberation Sans', sans-serif;color:#000;white-space:pre;overflow:hidden;letter-spacing:0.142px;left:622px;width:63px"><span style="padding-left:2px">VXI AMT</span></div>
<div style="position:absolute;top:496px;height:19px;line-height:20px;font-size:13px;font-family:'Liberation Sans', sans-serif;color:#000;white-space:pre;overflow:hidden;letter-spacing:-0.222px;left:686px;width:63px"><span style="padding-left:2px">WAGON R</span></div>
<div style="position:absolute;top:496px;height:19px;line-height:20px;font-size:13px;font-family:'Liberation Sans', sans-serif;color:#000;white-space:pre;overflow:hidden;letter-spacing:-0.222px;left:750px;width:127px"><span style="padding-left:2px">WAGON R</span></div>
<div style="position:absolute;top:496px;height:19px;line-height:20px;font-size:13px;font-family:'Liberation Sans', sans-serif;color:#000;white-space:pre;overflow:hidden;letter-spacing:-0.194px;left:1070px;width:63px"><span style="padding-left:2px">MH46BE0111</span></div>
<div style="position:absolute;top:496px;height:19px;line-height:20px;font-size:13px;font-family:'Liberation Sans', sans-serif;color:#000;white-space:pre;overflow:hidden;letter-spacing:-0.230px;left:1134px;width:66px;text-align:right"><span style="margin-right:0.230px">10182</span></div>
<div style="position:absolute;top:496px;height:19px;line-height:20px;font-size:13px;font-family:'Liberation Sans', sans-serif;color:#000;white-space:pre;overflow:hidden;letter-spacing:-0.230px;left:1203px;width:66px;text-align:right"><span style="margin-right:0.230px">0</span></div>
<div style="position:absolute;top:496px;height:19px;line-height:20px;font-size:13px;font-family:'Liberation Sans', sans-serif;color:#000;white-space:pre;overflow:hidden;letter-spacing:-0.230px;left:1272px;width:66px;text-align:right"><span style="margin-right:0.230px">233637</span></div>
<div style="position:absolute;top:496px;height:19px;line-height:20px;font-size:13px;font-family:'Liberation Sans', sans-serif;color:#000;white-space:pre;overflow:hidden;letter-spacing:-0.230px;left:1341px;width:66px;text-align:right"><span style="margin-right:0.230px">11164</span></div>
<div style="position:absolute;top:496px;height:19px;line-height:20px;font-size:13px;font-family:'Liberation Sans', sans-serif;color:#000;white-space:pre;overflow:hidden;letter-spacing:-0.230px;left:1410px;width:66px;text-align:right"><span style="margin-right:0.230px">62477</span></div>
<div style="position:absolute;top:496px;height:19px;line-height:20px;font-size:13px;font-family:'Liberation Sans', sans-serif;color:#000;white-space:pre;overflow:hidden;letter-spacing:-0.230px;left:1479px;width:66px;text-align:right"><span style="margin-right:0.230px">1888</span></div>
<div style="position:absolute;top:496px;height:19px;line-height:20px;font-size:13px;font-family:'Liberation Sans', sans-serif;color:#000;white-space:pre;overflow:hidden;letter-spacing:-0.230px;left:1548px;width:66px;text-align:right"><span style="margin-right:0.230px">309166</span></div>
<div style="position:absolute;top:496px;height:19px;line-height:20px;font-size:13px;font-family:'Liberation Sans', sans-serif;color:#000;white-space:pre;overflow:hidden;letter-spacing:-0.230px;left:1617px;width:66px;text-align:right"><span style="margin-right:0.230px">23</span></div>
<div style="position:absolute;top:496px;height:19px;line-height:20px;font-size:13px;font-family:'Liberation Sans', sans-serif;color:#000;white-space:pre;overflow:hidden;letter-spacing:-0.230px;left:1686px;width:66px;text-align:right"><span style="margin-right:0.230px">675</span></div>
<div style="position:absolute;top:496px;height:19px;line-height:20px;font-size:13px;font-family:'Liberation Sans', sans-serif;color:#000;white-space:pre;overflow:hidden;letter-spacing:-0.230px;left:1755px;width:64px;text-align:right"><span style="margin-right:0.230px">698</span></div>
<div style="position:absolute;top:496px;height:19px;line-height:20px;font-size:13px;font-family:'Liberation Sans', sans-serif;color:#000;white-space:pre;overflow:hidden;letter-spacing:-0.230px;left:1822px;width:66px;text-align:right"><span style="margin-right:0.230px">13</span></div>
<div style="position:absolute;top:496px;height:19px;line-height:20px;font-size:13px;font-family:'Liberation Sans', sans-serif;color:#000;white-space:pre;overflow:hidden;letter-spacing:-0.711px;left:1891px;width:7px"><span style="padding-left:2px">SHIFT</span></div>
<div style="position:absolute;top:516px;height:19px;line-height:20px;font-size:13px;font-family:'Liberation Sans', sans-serif;color:#000;white-space:pre;overflow:hidden;letter-spacing:-0.230px;left:26px;width:66px;text-align:right"><span style="margin-right:0.230px">14</span></div>
<div style="position:absolute;top:516px;height:19px;line-height:20px;font-size:13px;font-family:'Liberation Sans', sans-serif;color:#000;white-space:pre;overflow:hidden;letter-spacing:-0.002px;left:95px;width:133px"><span style="padding-left:2px">LANMU00038241551</span></div>
<div style="position:absolute;top:516px;height:19px;line-height:20px;font-size:13px;font-family:'Liberation Sans', sans-serif;color:#000;white-space:pre;overflow:hidden;letter-spacing:-0.469px;left:229px;width:186px"><span style="padding-left:2px">SUNIL  SAKPAL</span></div>
<div style="position:absolute;top:516px;height:19px;line-height:20px;font-size:13px;font-family:'Liberation Sans', sans-serif;color:#000;white-space:pre;overflow:hidden;letter-spacing:-0.230px;left:416px;width:68px"><span style="padding-left:2px">275452</span></div>
<div style="position:absolute;top:516px;height:19px;line-height:20px;font-size:13px;font-family:'Liberation Sans', sans-serif;color:#000;white-space:pre;overflow:hidden;letter-spacing:0.647px;left:558px;width:63px"><span style="padding-left:2px">Shifted</span></div>
<div style="position:absolute;top:516px;height:19px;line-height:20px;font-size:13px;font-family:'Liberation Sans', sans-serif;color:#000;white-space:pre;overflow:hidden;letter-spacing:-0.065px;left:622px;width:63px"><span style="padding-left:2px">T (O)</span></div>
<div style="position:absolute;top:516px;height:19px;line-height:20px;font-size:13px;font-family:'Liberation Sans', sans-serif;color:#000;white-space:pre;overflow:hidden;letter-spacing:0.102px;left:686px;width:63px"><span style="padding-left:2px">Redi-GO</span></div>
<div style="position:absolute;top:516px;height:19px;line-height:20px;font-size:13px;font-family:'Liberation Sans', sans-serif;color:#000;white-space:pre;overflow:hidden;letter-spacing:0.102px;left:750px;width:63px"><span style="padding-left:2px">Redi-GO</span></div>
<div style="position:absolute;top:516px;height:19px;line-height:20px;font-size:13px;font-family:'Liberation Sans', sans-serif;color:#000;white-space:pre;overflow:hidden;letter-spacing:0.034px;left:1070px;width:63px"><span style="padding-left:2px">MH06BU4111</span></div>
<div style="position:absolute;top:516px;height:19px;line-height:20px;font-size:13px;font-family:'Liberation Sans', sans-serif;color:#000;white-space:pre;overflow:hidden;letter-spacing:-0.230px;left:1134px;width:66px;text-align:right"><span style="margin-right:0.230px">8020</span></div>
<div style="position:absolute;top:516px;height:19px;line-height:20px;font-size:13px;font-family:'Liberation Sans', sans-serif;color:#000;white-space:pre;overflow:hidden;letter-spacing:-0.230px;left:1203px;width:66px;text-align:right"><span style="margin-right:0.230px">0</span></div>
<div style="position:absolute;top:516px;height:19px;line-height:20px;font-size:13px;font-family:'Liberation Sans', sans-serif;color:#000;white-space:pre;overflow:hidden;letter-spacing:-0.230px;left:1272px;width:66px;text-align:right"><span style="margin-right:0.230px">117973</span></div>
<div style="position:absolute;top:516px;height:19px;line-height:20px;font-size:13px;font-family:'Liberation Sans', sans-serif;color:#000;white-space:pre;overflow:hidden;letter-spacing:-0.230px;left:1341px;width:66px;text-align:right"><span style="margin-right:0.230px">10565</span></div>
<div style="position:absolute;top:516px;height:19px;line-height:20px;font-size:13px;font-family:'Liberation Sans', sans-serif;color:#000;white-space:pre;overflow:hidden;letter-spacing:-0.230px;left:1410px;width:66px;text-align:right"><span style="margin-right:0.230px">17918</span></div>
<div style="position:absolute;top:516px;height:19px;line-height:20px;font-size:13px;font-family:'Liberation Sans', sans-serif;color:#000;white-space:pre;overflow:hidden;letter-spacing:-0.230px;left:1479px;width:66px;text-align:right"><span style="margin-right:0.230px">0</span></div>
<div style="position:absolute;top:516px;height:19px;line-height:20px;font-size:13px;font-family:'Liberation Sans', sans-serif;color:#000;white-space:pre;overflow:hidden;letter-spacing:-0.230px;left:1548px;width:66px;text-align:right"><span style="margin-right:0.230px">146456</span></div>
<div style="position:absolute;top:516px;height:19px;line-height:20px;font-size:13px;font-family:'Liberation Sans', sans-serif;color:#000;white-space:pre;overflow:hidden;letter-spacing:-0.230px;left:1617px;width:66px;text-align:right"><span style="margin-right:0.230px">15</span></div>
<div style="position:absolute;top:516px;height:19px;line-height:20px;font-size:13px;font-family:'Liberation Sans', sans-serif;color:#000;white-space:pre;overflow:hidden;letter-spacing:-0.230px;left:1686px;width:66px;text-align:right"><span style="margin-right:0.230px">448</span></div>
<div style="position:absolute;top:516px;height:19px;line-height:20px;font-size:13px;font-family:'Liberation Sans', sans-serif;color:#000;white-space:pre;overflow:hidden;letter-spacing:-0.230px;left:1755px;width:64px;text-align:right"><span style="margin-right:0.230px">471</span></div>
<div style="position:absolute;top:516px;height:19px;line-height:20px;font-size:13px;font-family:'Liberation Sans', sans-serif;color:#000;white-space:pre;overflow:hidden;letter-spacing:-0.230px;left:1822px;width:66px;text-align:right"><span style="margin-right:0.230px">13</span></div>
<div style="position:absolute;top:516px;height:19px;line-height:20px;font-size:13px;font-family:'Liberation Sans', sans-serif;color:#000;white-space:pre;overflow:hidden;letter-spacing:-0.724px;left:1891px;width:7px"><span style="padding-left:2px">EXIT</span></div>
<div style="position:absolute;top:536px;height:19px;line-height:20px;font-size:13px;font-family:'Liberation Sans', sans-serif;color:#000;white-space:pre;overflow:hidden;letter-spacing:-0.230px;left:26px;width:66px;text-align:right"><span style="margin-right:0.230px">15</span></div>
<div style="position:absolute;top:536px;height:19px;line-height:20px;font-size:13px;font-family:'Liberation Sans', sans-serif;color:#000;white-space:pre;overflow:hidden;letter-spacing:-0.002px;left:95px;width:133px"><span style="padding-left:2px">LANMU00038601837</span></div>
<div style="position:absolute;top:536px;height:19px;line-height:20px;font-size:13px;font-family:'Liberation Sans', sans-serif;color:#000;white-space:pre;overflow:hidden;letter-spacing:-0.699px;left:229px;width:186px"><span style="padding-left:2px">ASIT  ROY</span></div>
<div style="position:absolute;top:536px;height:19px;line-height:20px;font-size:13px;font-family:'Liberation Sans', sans-serif;color:#000;white-space:pre;overflow:hidden;letter-spacing:-0.230px;left:416px;width:68px"><span style="padding-left:2px">273696</span></div>
<div style="position:absolute;top:536px;height:19px;line-height:20px;font-size:13px;font-family:'Liberation Sans', sans-serif;color:#000;white-space:pre;overflow:hidden;letter-spacing:0.647px;left:558px;width:63px"><span style="padding-left:2px">Shifted</span></div>
<div style="position:absolute;top:536px;height:19px;line-height:20px;font-size:13px;font-family:'Liberation Sans', sans-serif;color:#000;white-space:pre;overflow:hidden;letter-spacing:-0.968px;left:622px;width:63px"><span style="padding-left:2px">5 STR</span></div>
<div style="position:absolute;top:536px;height:19px;line-height:20px;font-size:13px;font-family:'Liberation Sans', sans-serif;color:#000;white-space:pre;overflow:hidden;letter-spacing:-0.158px;left:686px;width:63px"><span style="padding-left:2px">Eeco</span></div>
<div style="position:absolute;top:536px;height:19px;line-height:20px;font-size:13px;font-family:'Liberation Sans', sans-serif;color:#000;white-space:pre;overflow:hidden;letter-spacing:-0.711px;left:942px;width:63px"><span style="padding-left:2px">SHIFT</span></div>
<div style="position:absolute;top:536px;height:19px;line-height:20px;font-size:13px;font-family:'Liberation Sans', sans-serif;color:#000;white-space:pre;overflow:hidden;letter-spacing:0.352px;left:1006px;width:63px"><span style="padding-left:2px">3/11/2022</span></div>
<div style="position:absolute;top:536px;height:19px;line-height:20px;font-size:13px;font-family:'Liberation Sans', sans-serif;color:#000;white-space:pre;overflow:hidden;letter-spacing:-0.094px;left:1070px;width:63px"><span style="padding-left:2px">MH46BK5888</span></div>
<div style="position:absolute;top:536px;height:19px;line-height:20px;font-size:13px;font-family:'Liberation Sans', sans-serif;color:#000;white-space:pre;overflow:hidden;letter-spacing:-0.230px;left:1134px;width:66px;text-align:right"><span style="margin-right:0.230px">11005</span></div>
<div style="position:absolute;top:536px;height:19px;line-height:20px;font-size:13px;font-family:'Liberation Sans', sans-serif;color:#000;white-space:pre;overflow:hidden;letter-spacing:-0.230px;left:1203px;width:66px;text-align:right"><span style="margin-right:0.230px">0</span></div>
<div style="position:absolute;top:536px;height:19px;line-height:20px;font-size:13px;font-family:'Liberation Sans', sans-serif;color:#000;white-space:pre;overflow:hidden;letter-spacing:-0.230px;left:1272px;width:66px;text-align:right"><span style="margin-right:0.230px">117560</span></div>
<div style="position:absolute;top:536px;height:19px;line-height:20px;font-size:13px;font-family:'Liberation Sans', sans-serif;color:#000;white-space:pre;overflow:hidden;letter-spacing:-0.230px;left:1341px;width:66px;text-align:right"><span style="margin-right:0.230px">20650</span></div>
<div style="position:absolute;top:536px;height:19px;line-height:20px;font-size:13px;font-family:'Liberation Sans', sans-serif;color:#000;white-space:pre;overflow:hidden;letter-spacing:-0.230px;left:1410px;width:66px;text-align:right"><span style="margin-right:0.230px">36008</span></div>
<div style="position:absolute;top:536px;height:19px;line-height:20px;font-size:13px;font-family:'Liberation Sans', sans-serif;color:#000;white-space:pre;overflow:hidden;letter-spacing:-0.230px;left:1479px;width:66px;text-align:right"><span style="margin-right:0.230px">0</span></div>
<div style="position:absolute;top:536px;height:19px;line-height:20px;font-size:13px;font-family:'Liberation Sans', sans-serif;color:#000;white-space:pre;overflow:hidden;letter-spacing:-0.230px;left:1548px;width:66px;text-align:right"><span style="margin-right:0.230px">174218</span></div>
<div style="position:absolute;top:536px;height:19px;line-height:20px;font-size:13px;font-family:'Liberation Sans', sans-serif;color:#000;white-space:pre;overflow:hidden;letter-spacing:-0.230px;left:1617px;width:66px;text-align:right"><span style="margin-right:0.230px">11</span></div>
<div style="position:absolute;top:536px;height:19px;line-height:20px;font-size:13px;font-family:'Liberation Sans', sans-serif;color:#000;white-space:pre;overflow:hidden;letter-spacing:-0.230px;left:1686px;width:66px;text-align:right"><span style="margin-right:0.230px">332</span></div>
<div style="position:absolute;top:536px;height:19px;line-height:20px;font-size:13px;font-family:'Liberation Sans', sans-serif;color:#000;white-space:pre;overflow:hidden;letter-spacing:-0.230px;left:1755px;width:64px;text-align:right"><span style="margin-right:0.230px">355</span></div>
<div style="position:absolute;top:536px;height:19px;line-height:20px;font-size:13px;font-family:'Liberation Sans', sans-serif;color:#000;white-space:pre;overflow:hidden;letter-spacing:-0.230px;left:1822px;width:66px;text-align:right"><span style="margin-right:0.230px">12</span></div>
<div style="position:absolute;top:556px;height:19px;line-height:20px;font-size:13px;font-family:'Liberation Sans', sans-serif;color:#000;white-space:pre;overflow:hidden;letter-spacing:-0.230px;left:26px;width:66px;text-align:right"><span style="margin-right:0.230px">16</span></div>
<div style="position:absolute;top:556px;height:19px;line-height:20px;font-size:13px;font-family:'Liberation Sans', sans-serif;color:#000;white-space:pre;overflow:hidden;letter-spacing:-0.313px;left:95px;width:133px"><span style="padding-left:2px">LAPVL00037501191</span></div>
<div style="position:absolute;top:556px;height:19px;line-height:20px;font-size:13px;font-family:'Liberation Sans', sans-serif;color:#000;white-space:pre;overflow:hidden;letter-spacing:-0.335px;left:229px;width:186px"><span style="padding-left:2px">DEEPAK TUKARAM ZAMBARE</span></div>
<div style="position:absolute;top:556px;height:19px;line-height:20px;font-size:13px;font-family:'Liberation Sans', sans-serif;color:#000;white-space:pre;overflow:hidden;letter-spacing:-0.230px;left:416px;width:68px"><span style="padding-left:2px">265826</span></div>
<div style="position:absolute;top:556px;height:19px;line-height:20px;font-size:13px;font-family:'Liberation Sans', sans-serif;color:#000;white-space:pre;overflow:hidden;letter-spacing:0.647px;left:558px;width:63px"><span style="padding-left:2px">Shifted</span></div>
<div style="position:absolute;top:556px;height:19px;line-height:20px;font-size:13px;font-family:'Liberation Sans', sans-serif;color:#000;white-space:pre;overflow:hidden;letter-spacing:-0.351px;left:622px;width:63px"><span style="padding-left:2px">VXI CNG</span></div>
<div style="position:absolute;top:556px;height:19px;line-height:20px;font-size:13px;font-family:'Liberation Sans', sans-serif;color:#000;white-space:pre;overflow:hidden;letter-spacing:-1.010px;left:686px;width:63px"><span style="padding-left:2px">CELERIO</span></div>
<div style="position:absolute;top:556px;height:19px;line-height:20px;font-size:13px;font-family:'Liberation Sans', sans-serif;color:#000;white-space:pre;overflow:hidden;letter-spacing:-1.010px;left:750px;width:63px"><span style="padding-left:2px">CELERIO</span></div>
<div style="position:absolute;top:556px;height:19px;line-height:20px;font-size:13px;font-family:'Liberation Sans', sans-serif;color:#000;white-space:pre;overflow:hidden;letter-spacing:-0.711px;left:942px;width:63px"><span style="padding-left:2px">SHIFT</span></div>
<div style="position:absolute;top:556px;height:19px;line-height:20px;font-size:13px;font-family:'Liberation Sans', sans-serif;color:#000;white-space:pre;overflow:hidden;letter-spacing:0.485px;left:1006px;width:63px"><span style="padding-left:2px">3/9/2022 Visited</span></div>
<div style="position:absolute;top:556px;height:19px;line-height:20px;font-size:13px;font-family:'Liberation Sans', sans-serif;color:#000;white-space:pre;overflow:hidden;letter-spacing:-0.194px;left:1070px;width:63px"><span style="padding-left:2px">MH46BE8555</span></div>
<div style="position:absolute;top:556px;height:19px;line-height:20px;font-size:13px;font-family:'Liberation Sans', sans-serif;color:#000;white-space:pre;overflow:hidden;letter-spacing:-0.230px;left:1134px;width:66px;text-align:right"><span style="margin-right:0.230px">9689</span></div>
<div style="position:absolute;top:556px;height:19px;line-height:20px;font-size:13px;font-family:'Liberation Sans', sans-serif;color:#000;white-space:pre;overflow:hidden;letter-spacing:-0.230px;left:1203px;width:66px;text-align:right"><span style="margin-right:0.230px">0</span></div>
<div style="position:absolute;top:556px;height:19px;line-height:20px;font-size:13px;font-family:'Liberation Sans', sans-serif;color:#000;white-space:pre;overflow:hidden;letter-spacing:-0.230px;left:1272px;width:66px;text-align:right"><span style="margin-right:0.230px">103158</span></div>
<div style="position:absolute;top:556px;height:19px;line-height:20px;font-size:13px;font-family:'Liberation Sans', sans-serif;color:#000;white-space:pre;overflow:hidden;letter-spacing:-0.230px;left:1341px;width:66px;text-align:right"><span style="margin-right:0.230px">16266</span></div>
<div style="position:absolute;top:556px;height:19px;line-height:20px;font-size:13px;font-family:'Liberation Sans', sans-serif;color:#000;white-space:pre;overflow:hidden;letter-spacing:-0.230px;left:1410px;width:66px;text-align:right"><span style="margin-right:0.230px">26143</span></div>
<div style="position:absolute;top:556px;height:19px;line-height:20px;font-size:13px;font-family:'Liberation Sans', sans-serif;color:#000;white-space:pre;overflow:hidden;letter-spacing:-0.230px;left:1479px;width:66px;text-align:right"><span style="margin-right:0.230px">0</span></div>
<div style="position:absolute;top:556px;height:19px;line-height:20px;font-size:13px;font-family:'Liberation Sans', sans-serif;color:#000;white-space:pre;overflow:hidden;letter-spacing:-0.230px;left:1548px;width:66px;text-align:right"><span style="margin-right:0.230px">145567</span></div>
<div style="position:absolute;top:556px;height:19px;line-height:20px;font-size:13px;font-family:'Liberation Sans', sans-serif;color:#000;white-space:pre;overflow:hidden;letter-spacing:-0.230px;left:1617px;width:66px;text-align:right"><span style="margin-right:0.230px">11</span></div>
<div style="position:absolute;top:556px;height:19px;line-height:20px;font-size:13px;font-family:'Liberation Sans', sans-serif;color:#000;white-space:pre;overflow:hidden;letter-spacing:-0.230px;left:1686px;width:66px;text-align:right"><span style="margin-right:0.230px">311</span></div>
<div style="position:absolute;top:556px;height:19px;line-height:20px;font-size:13px;font-family:'Liberation Sans', sans-serif;color:#000;white-space:pre;overflow:hidden;letter-spacing:-0.230px;left:1755px;width:64px;text-align:right"><span style="margin-right:0.230px">334</span></div>
<div style="position:absolute;top:556px;height:19px;line-height:20px;font-size:13px;font-family:'Liberation Sans', sans-serif;color:#000;white-space:pre;overflow:hidden;letter-spacing:-0.230px;left:1822px;width:66px;text-align:right"><span style="margin-right:0.230px">11</span></div>
<div style="position:absolute;top:556px;height:19px;line-height:20px;font-size:13px;font-family:'Liberation Sans', sans-serif;color:#000;white-space:pre;overflow:hidden;letter-spacing:-0.726px;left:1891px;width:7px"><span style="padding-left:2px">ALLOC</span></div>
<div style="position:absolute;top:576px;height:19px;line-height:20px;font-size:13px;font-family:'Liberation Sans', sans-serif;color:#000;white-space:pre;overflow:hidden;letter-spacing:-0.230px;left:26px;width:66px;text-align:right"><span style="margin-right:0.230px">17</span></div>
<div style="position:absolute;top:576px;height:19px;line-height:20px;font-size:13px;font-family:'Liberation Sans', sans-serif;color:#000;white-space:pre;overflow:hidden;letter-spacing:-0.313px;left:95px;width:133px"><span style="padding-left:2px">LAPVL00037706129</span></div>
<div style="position:absolute;top:576px;height:19px;line-height:20px;font-size:13px;font-family:'Liberation Sans', sans-serif;color:#000;white-space:pre;overflow:hidden;letter-spacing:-0.238px;left:229px;width:186px"><span style="padding-left:2px">KHADIJA  KHATUN</span></div>
<div style="position:absolute;top:576px;height:19px;line-height:20px;font-size:13px;font-family:'Liberation Sans', sans-serif;color:#000;white-space:pre;overflow:hidden;letter-spacing:-0.230px;left:416px;width:68px"><span style="padding-left:2px">263372</span></div>
<div style="position:absolute;top:576px;height:19px;line-height:20px;font-size:13px;font-family:'Liberation Sans', sans-serif;color:#000;white-space:pre;overflow:hidden;letter-spacing:0.647px;left:558px;width:63px"><span style="padding-left:2px">Shifted</span></div>
<div style="position:absolute;top:576px;height:19px;line-height:20px;font-size:13px;font-family:'Liberation Sans', sans-serif;color:#000;white-space:pre;overflow:hidden;letter-spacing:-0.599px;left:622px;width:63px"><span style="padding-left:2px">ZXI PLUS</span></div>
<div style="position:absolute;top:576px;height:19px;line-height:20px;font-size:13px;font-family:'Liberation Sans', sans-serif;color:#000;white-space:pre;overflow:hidden;letter-spacing:-0.487px;left:686px;width:63px"><span style="padding-left:2px">SWIFT</span></div>
<div style="position:absolute;top:576px;height:19px;line-height:20px;font-size:13px;font-family:'Liberation Sans', sans-serif;color:#000;white-space:pre;overflow:hidden;letter-spacing:-0.487px;left:750px;width:63px"><span style="padding-left:2px">SWIFT</span></div>
<div style="position:absolute;top:576px;height:19px;line-height:20px;font-size:13px;font-family:'Liberation Sans', sans-serif;color:#000;white-space:pre;overflow:hidden;letter-spacing:-0.711px;left:942px;width:63px"><span style="padding-left:2px">SHIFT</span></div>
<div style="position:absolute;top:576px;height:19px;line-height:20px;font-size:13px;font-family:'Liberation Sans', sans-serif;color:#000;white-space:pre;overflow:hidden;letter-spacing:0.485px;left:1006px;width:63px"><span style="padding-left:2px">3/9/2022 Visited</span></div>
<div style="position:absolute;top:576px;height:19px;line-height:20px;font-size:13px;font-family:'Liberation Sans', sans-serif;color:#000;white-space:pre;overflow:hidden;letter-spacing:-0.194px;left:1070px;width:63px"><span style="padding-left:2px">MH46BE9000</span></div>
<div style="position:absolute;top:576px;height:19px;line-height:20px;font-size:13px;font-family:'Liberation Sans', sans-serif;color:#000;white-space:pre;overflow:hidden;letter-spacing:-0.230px;left:1134px;width:66px;text-align:right"><span style="margin-right:0.230px">10647</span></div>
<div style="position:absolute;top:576px;height:19px;line-height:20px;font-size:13px;font-family:'Liberation Sans', sans-serif;color:#000;white-space:pre;overflow:hidden;letter-spacing:-0.230px;left:1203px;width:66px;text-align:right"><span style="margin-right:0.230px">0</span></div>
<div style="position:absolute;top:576px;height:19px;line-height:20px;font-size:13px;font-family:'Liberation Sans', sans-serif;color:#000;white-space:pre;overflow:hidden;letter-spacing:-0.230px;left:1272px;width:66px;text-align:right"><span style="margin-right:0.230px">71060</span></div>
<div style="position:absolute;top:576px;height:19px;line-height:20px;font-size:13px;font-family:'Liberation Sans', sans-serif;color:#000;white-space:pre;overflow:hidden;letter-spacing:-0.230px;left:1341px;width:66px;text-align:right"><span style="margin-right:0.230px">7080</span></div>
<div style="position:absolute;top:576px;height:19px;line-height:20px;font-size:13px;font-family:'Liberation Sans', sans-serif;color:#000;white-space:pre;overflow:hidden;letter-spacing:-0.230px;left:1410px;width:66px;text-align:right"><span style="margin-right:0.230px">6101</span></div>
<div style="position:absolute;top:576px;height:19px;line-height:20px;font-size:13px;font-family:'Liberation Sans', sans-serif;color:#000;white-space:pre;overflow:hidden;letter-spacing:-0.230px;left:1479px;width:66px;text-align:right"><span style="margin-right:0.230px">0</span></div>
<div style="position:absolute;top:576px;height:19px;line-height:20px;font-size:13px;font-family:'Liberation Sans', sans-serif;color:#000;white-space:pre;overflow:hidden;letter-spacing:-0.230px;left:1548px;width:66px;text-align:right"><span style="margin-right:0.230px">84241</span></div>
<div style="position:absolute;top:576px;height:19px;line-height:20px;font-size:13px;font-family:'Liberation Sans', sans-serif;color:#000;white-space:pre;overflow:hidden;letter-spacing:-0.230px;left:1617px;width:66px;text-align:right"><span style="margin-right:0.230px">7</span></div>
<div style="position:absolute;top:576px;height:19px;line-height:20px;font-size:13px;font-family:'Liberation Sans', sans-serif;color:#000;white-space:pre;overflow:hidden;letter-spacing:-0.230px;left:1686px;width:66px;text-align:right"><span style="margin-right:0.230px">210</span></div>
<div style="position:absolute;top:576px;height:19px;line-height:20px;font-size:13px;font-family:'Liberation Sans', sans-serif;color:#000;white-space:pre;overflow:hidden;letter-spacing:-0.230px;left:1755px;width:64px;text-align:right"><span style="margin-right:0.230px">233</span></div>
<div style="position:absolute;top:576px;height:19px;line-height:20px;font-size:13px;font-family:'Liberation Sans', sans-serif;color:#000;white-space:pre;overflow:hidden;letter-spacing:-0.230px;left:1822px;width:66px;text-align:right"><span style="margin-right:0.230px">7</span></div>
<div style="position:absolute;top:576px;height:19px;line-height:20px;font-size:13px;font-family:'Liberation Sans', sans-serif;color:#000;white-space:pre;overflow:hidden;letter-spacing:-0.726px;left:1891px;width:7px"><span style="padding-left:2px">ALLOC</span></div>
<div style="position:absolute;top:596px;height:19px;line-height:20px;font-size:13px;font-family:'Liberation Sans', sans-serif;color:#000;white-space:pre;overflow:hidden;letter-spacing:-0.230px;left:26px;width:66px;text-align:right"><span style="margin-right:0.230px">18</span></div>
<div style="position:absolute;top:596px;height:19px;line-height:20px;font-size:13px;font-family:'Liberation Sans', sans-serif;color:#000;white-space:pre;overflow:hidden;letter-spacing:-0.429px;left:95px;width:133px"><span style="padding-left:2px">SPTNE00038322445</span></div>
<div style="position:absolute;top:596px;height:19px;line-height:20px;font-size:13px;font-family:'Liberation Sans', sans-serif;color:#000;white-space:pre;overflow:hidden;letter-spacing:-0.405px;left:229px;width:186px"><span style="padding-left:2px">THOMAS  ELEVATHINGAL</span></div>
<div style="position:absolute;top:596px;height:19px;line-height:20px;font-size:13px;font-family:'Liberation Sans', sans-serif;color:#000;white-space:pre;overflow:hidden;letter-spacing:-0.230px;left:416px;width:68px"><span style="padding-left:2px">229315</span></div>
<div style="position:absolute;top:596px;height:19px;line-height:20px;font-size:13px;font-family:'Liberation Sans', sans-serif;color:#000;white-space:pre;overflow:hidden;letter-spacing:0.647px;left:558px;width:63px"><span style="padding-left:2px">Shifted</span></div>
<div style="position:absolute;top:596px;height:19px;line-height:20px;font-size:13px;font-family:'Liberation Sans', sans-serif;color:#000;white-space:pre;overflow:hidden;letter-spacing:-0.519px;left:622px;width:127px"><span style="padding-left:2px">THUNDER BIRD</span></div>
<div style="position:absolute;top:596px;height:19px;line-height:20px;font-size:13px;font-family:'Liberation Sans', sans-serif;color:#000;white-space:pre;overflow:hidden;letter-spacing:-0.230px;left:1134px;width:66px;text-align:right"><span style="margin-right:0.230px">11144</span></div>
<div style="position:absolute;top:596px;height:19px;line-height:20px;font-size:13px;font-family:'Liberation Sans', sans-serif;color:#000;white-space:pre;overflow:hidden;letter-spacing:-0.230px;left:1203px;width:66px;text-align:right"><span style="margin-right:0.230px">0</span></div>
<div style="position:absolute;top:596px;height:19px;line-height:20px;font-size:13px;font-family:'Liberation Sans', sans-serif;color:#000;white-space:pre;overflow:hidden;letter-spacing:-0.230px;left:1272px;width:66px;text-align:right"><span style="margin-right:0.230px">122493</span></div>
<div style="position:absolute;top:596px;height:19px;line-height:20px;font-size:13px;font-family:'Liberation Sans', sans-serif;color:#000;white-space:pre;overflow:hidden;letter-spacing:-0.230px;left:1341px;width:66px;text-align:right"><span style="margin-right:0.230px">6490</span></div>
<div style="position:absolute;top:596px;height:19px;line-height:20px;font-size:13px;font-family:'Liberation Sans', sans-serif;color:#000;white-space:pre;overflow:hidden;letter-spacing:-0.230px;left:1410px;width:66px;text-align:right"><span style="margin-right:0.230px">13302</span></div>
<div style="position:absolute;top:596px;height:19px;line-height:20px;font-size:13px;font-family:'Liberation Sans', sans-serif;color:#000;white-space:pre;overflow:hidden;letter-spacing:-0.230px;left:1479px;width:66px;text-align:right"><span style="margin-right:0.230px">0</span></div>
<div style="position:absolute;top:596px;height:19px;line-height:20px;font-size:13px;font-family:'Liberation Sans', sans-serif;color:#000;white-space:pre;overflow:hidden;letter-spacing:-0.230px;left:1548px;width:66px;text-align:right"><span style="margin-right:0.230px">142285</span></div>
<div style="position:absolute;top:596px;height:19px;line-height:20px;font-size:13px;font-family:'Liberation Sans', sans-serif;color:#000;white-space:pre;overflow:hidden;letter-spacing:-0.230px;left:1617px;width:66px;text-align:right"><span style="margin-right:0.230px">11</span></div>
<div style="position:absolute;top:596px;height:19px;line-height:20px;font-size:13px;font-family:'Liberation Sans', sans-serif;color:#000;white-space:pre;overflow:hidden;letter-spacing:-0.230px;left:1686px;width:66px;text-align:right"><span style="margin-right:0.230px">327</span></div>
<div style="position:absolute;top:596px;height:19px;line-height:20px;font-size:13px;font-family:'Liberation Sans', sans-serif;color:#000;white-space:pre;overflow:hidden;letter-spacing:-0.230px;left:1755px;width:64px;text-align:right"><span style="margin-right:0.230px">350</span></div>
<div style="position:absolute;top:596px;height:19px;line-height:20px;font-size:13px;font-family:'Liberation Sans', sans-serif;color:#000;white-space:pre;overflow:hidden;letter-spacing:-0.230px;left:1822px;width:66px;text-align:right"><span style="margin-right:0.230px">11</span></div>
<div style="position:absolute;top:596px;height:19px;line-height:20px;font-size:13px;font-family:'Liberation Sans', sans-serif;color:#000;white-space:pre;overflow:hidden;letter-spacing:-0.726px;left:1891px;width:7px"><span style="padding-left:2px">ALLOC</span></div>
<div style="position:absolute;top:616px;height:19px;line-height:20px;font-size:13px;font-family:'Liberation Sans', sans-serif;color:#000;white-space:pre;overflow:hidden;letter-spacing:-0.230px;left:26px;width:66px;text-align:right"><span style="margin-right:0.230px">19</span></div>
<div style="position:absolute;top:616px;height:19px;line-height:20px;font-size:13px;font-family:'Liberation Sans', sans-serif;color:#000;white-space:pre;overflow:hidden;letter-spacing:-0.002px;left:95px;width:133px"><span style="padding-left:2px">LANMU00034411465</span></div>
<div style="position:absolute;top:616px;height:19px;line-height:20px;font-size:13px;font-family:'Liberation Sans', sans-serif;color:#000;white-space:pre;overflow:hidden;letter-spacing:-0.577px;left:229px;width:186px"><span style="padding-left:2px">JAGDISH  SUNDESHA</span></div>
<div style="position:absolute;top:616px;height:19px;line-height:20px;font-size:13px;font-family:'Liberation Sans', sans-serif;color:#000;white-space:pre;overflow:hidden;letter-spacing:-0.153px;left:416px;width:68px"><span style="padding-left:2px">226268.3</span></div>
<div style="position:absolute;top:616px;height:19px;line-height:20px;font-size:13px;font-family:'Liberation Sans', sans-serif;color:#000;white-space:pre;overflow:hidden;letter-spacing:0.876px;left:558px;width:63px"><span style="padding-left:2px">Shifted/fore</span></div>
<div style="position:absolute;top:616px;height:19px;line-height:20px;font-size:13px;font-family:'Liberation Sans', sans-serif;color:#000;white-space:pre;overflow:hidden;letter-spacing:-0.725px;left:622px;width:63px"><span style="padding-left:2px">STYLE 1.5 TDI</span></div>
<div style="position:absolute;top:616px;height:19px;line-height:20px;font-size:13px;font-family:'Liberation Sans', sans-serif;color:#000;white-space:pre;overflow:hidden;letter-spacing:-0.715px;left:686px;width:63px"><span style="padding-left:2px">RAPID DIESEL</span></div>
<div style="position:absolute;top:616px;height:19px;line-height:20px;font-size:13px;font-family:'Liberation Sans', sans-serif;color:#000;white-space:pre;overflow:hidden;letter-spacing:-0.725px;left:750px;width:63px"><span style="padding-left:2px">STYLE 1.5 TDI</span></div>
<div style="position:absolute;top:616px;height:19px;line-height:20px;font-size:13px;font-family:'Liberation Sans', sans-serif;color:#000;white-space:pre;overflow:hidden;letter-spacing:-1.096px;left:942px;width:63px"><span style="padding-left:2px">CLB</span></div>
<div style="position:absolute;top:616px;height:19px;line-height:20px;font-size:13px;font-family:'Liberation Sans', sans-serif;color:#000;white-space:pre;overflow:hidden;letter-spacing:0.485px;left:1006px;width:63px"><span style="padding-left:2px">3/9/2022 Visited</span></div>
<div style="position:absolute;top:616px;height:19px;line-height:20px;font-size:13px;font-family:'Liberation Sans', sans-serif;color:#000;white-space:pre;overflow:hidden;letter-spacing:0.134px;left:1070px;width:63px"><span style="padding-left:2px">MH46AU1111</span></div>
<div style="position:absolute;top:616px;height:19px;line-height:20px;font-size:13px;font-family:'Liberation Sans', sans-serif;color:#000;white-space:pre;overflow:hidden;letter-spacing:-0.142px;left:1134px;width:66px;text-align:right"><span style="margin-right:0.142px">11179.5</span></div>
<div style="position:absolute;top:616px;height:19px;line-height:20px;font-size:13px;font-family:'Liberation Sans', sans-serif;color:#000;white-space:pre;overflow:hidden;letter-spacing:-0.230px;left:1203px;width:66px;text-align:right"><span style="margin-right:0.230px">0</span></div>
<div style="position:absolute;top:616px;height:19px;line-height:20px;font-size:13px;font-family:'Liberation Sans', sans-serif;color:#000;white-space:pre;overflow:hidden;letter-spacing:-0.153px;left:1272px;width:66px;text-align:right"><span style="margin-right:0.153px">238213.5</span></div>
<div style="position:absolute;top:616px;height:19px;line-height:20px;font-size:13px;font-family:'Liberation Sans', sans-serif;color:#000;white-space:pre;overflow:hidden;letter-spacing:-0.230px;left:1341px;width:66px;text-align:right"><span style="margin-right:0.230px">9410</span></div>
<div style="position:absolute;top:616px;height:19px;line-height:20px;font-size:13px;font-family:'Liberation Sans', sans-serif;color:#000;white-space:pre;overflow:hidden;letter-spacing:-0.230px;left:1410px;width:66px;text-align:right"><span style="margin-right:0.230px">72829</span></div>
<div style="position:absolute;top:616px;height:19px;line-height:20px;font-size:13px;font-family:'Liberation Sans', sans-serif;color:#000;white-space:pre;overflow:hidden;letter-spacing:-0.230px;left:1479px;width:66px;text-align:right"><span style="margin-right:0.230px">944</span></div>
<div style="position:absolute;top:616px;height:19px;line-height:20px;font-size:13px;font-family:'Liberation Sans', sans-serif;color:#000;white-space:pre;overflow:hidden;letter-spacing:-0.153px;left:1548px;width:66px;text-align:right"><span style="margin-right:0.153px">321396.5</span></div>
<div style="position:absolute;top:616px;height:19px;line-height:20px;font-size:13px;font-family:'Liberation Sans', sans-serif;color:#000;white-space:pre;overflow:hidden;letter-spacing:-0.230px;left:1617px;width:66px;text-align:right"><span style="margin-right:0.230px">13</span></div>
<div style="position:absolute;top:616px;height:19px;line-height:20px;font-size:13px;font-family:'Liberation Sans', sans-serif;color:#000;white-space:pre;overflow:hidden;letter-spacing:-0.230px;left:1686px;width:66px;text-align:right"><span style="margin-right:0.230px">492</span></div>
<div style="position:absolute;top:616px;height:19px;line-height:20px;font-size:13px;font-family:'Liberation Sans', sans-serif;color:#000;white-space:pre;overflow:hidden;letter-spacing:-0.230px;left:1755px;width:64px;text-align:right"><span style="margin-right:0.230px">515</span></div>
<div style="position:absolute;top:616px;height:19px;line-height:20px;font-size:13px;font-family:'Liberation Sans', sans-serif;color:#000;white-space:pre;overflow:hidden;letter-spacing:-0.230px;left:1822px;width:66px;text-align:right"><span style="margin-right:0.230px">13</span></div>
<div style="position:absolute;top:636px;height:19px;line-height:20px;font-size:13px;font-family:'Liberation Sans', sans-serif;font-weight:bold;color:#ff00ff;white-space:pre;overflow:hidden;letter-spacing:-0.230px;left:26px;width:66px;text-align:right"><span style="margin-right:0.230px">20</span></div>
<div style="position:absolute;top:636px;height:19px;line-height:20px;font-size:13px;font-family:'Liberation Sans', sans-serif;font-weight:bold;color:#ff00ff;white-space:pre;overflow:hidden;letter-spacing:-0.092px;left:95px;width:133px"><span style="padding-left:2px">LANMU00035647974</span></div>
<div style="position:absolute;top:636px;height:19px;line-height:20px;font-size:13px;font-family:'Liberation Sans', sans-serif;font-weight:bold;color:#ff00ff;white-space:pre;overflow:hidden;letter-spacing:-0.522px;left:229px;width:186px"><span style="padding-left:2px">SUPRIYA SACHIN SHINDE</span></div>
<div style="position:absolute;top:636px;height:19px;line-height:20px;font-size:13px;font-family:'Liberation Sans', sans-serif;font-weight:bold;color:#ff00ff;white-space:pre;overflow:hidden;letter-spacing:-0.153px;left:416px;width:68px"><span style="padding-left:2px">212439.2</span></div>
<div style="position:absolute;top:636px;height:19px;line-height:20px;font-size:13px;font-family:'Liberation Sans', sans-serif;font-weight:bold;color:#ff00ff;white-space:pre;overflow:hidden;letter-spacing:-0.230px;left:485px;width:72px"><span style="padding-left:2px">9542</span></div>
<div style="position:absolute;top:636px;height:19px;line-height:20px;font-size:13px;font-family:'Liberation Sans', sans-serif;font-weight:bold;color:#ff00ff;white-space:pre;overflow:hidden;letter-spacing:0.135px;left:558px;width:63px"><span style="padding-left:2px">Shifted</span></div>
<div style="position:absolute;top:636px;height:19px;line-height:20px;font-size:13px;font-family:'Liberation Sans', sans-serif;font-weight:bold;color:#ff00ff;white-space:pre;overflow:hidden;letter-spacing:-0.773px;left:622px;width:63px"><span style="padding-left:2px">XE 1.05 DIESEL</span></div>
<div style="position:absolute;top:636px;height:19px;line-height:20px;font-size:13px;font-family:'Liberation Sans', sans-serif;font-weight:bold;color:#ff00ff;white-space:pre;overflow:hidden;letter-spacing:-0.433px;left:686px;width:63px"><span style="padding-left:2px">TIGOR</span></div>
<div style="position:absolute;top:636px;height:19px;line-height:20px;font-size:13px;font-family:'Liberation Sans', sans-serif;font-weight:bold;color:#ff00ff;white-space:pre;overflow:hidden;letter-spacing:-0.433px;left:750px;width:63px"><span style="padding-left:2px">TIGOR</span></div>
<div style="position:absolute;top:636px;height:19px;line-height:20px;font-size:13px;font-family:'Liberation Sans', sans-serif;font-weight:bold;color:#ff00ff;white-space:pre;overflow:hidden;letter-spacing:-0.137px;left:1070px;width:63px"><span style="padding-left:2px">MH46BA7111</span></div>
<div style="position:absolute;top:636px;height:19px;line-height:20px;font-size:13px;font-family:'Liberation Sans', sans-serif;font-weight:bold;color:#ff00ff;white-space:pre;overflow:hidden;letter-spacing:-0.230px;left:1134px;width:66px;text-align:right"><span style="margin-right:0.230px">9542</span></div>
<div style="position:absolute;top:636px;height:19px;line-height:20px;font-size:13px;font-family:'Liberation Sans', sans-serif;font-weight:bold;color:#ff00ff;white-space:pre;overflow:hidden;letter-spacing:-0.230px;left:1203px;width:66px;text-align:right"><span style="margin-right:0.230px">0</span></div>
<div style="position:absolute;top:636px;height:19px;line-height:20px;font-size:13px;font-family:'Liberation Sans', sans-serif;font-weight:bold;color:#ff00ff;white-space:pre;overflow:hidden;letter-spacing:-0.230px;left:1272px;width:66px;text-align:right"><span style="margin-right:0.230px">179924</span></div>
<div style="position:absolute;top:636px;height:19px;line-height:20px;font-size:13px;font-family:'Liberation Sans', sans-serif;font-weight:bold;color:#ff00ff;white-space:pre;overflow:hidden;letter-spacing:-0.230px;left:1341px;width:66px;text-align:right"><span style="margin-right:0.230px">27082</span></div>
<div style="position:absolute;top:636px;height:19px;line-height:20px;font-size:13px;font-family:'Liberation Sans', sans-serif;font-weight:bold;color:#ff00ff;white-space:pre;overflow:hidden;letter-spacing:-0.230px;left:1410px;width:66px;text-align:right"><span style="margin-right:0.230px">58718</span></div>
<div style="position:absolute;top:636px;height:19px;line-height:20px;font-size:13px;font-family:'Liberation Sans', sans-serif;font-weight:bold;color:#ff00ff;white-space:pre;overflow:hidden;letter-spacing:-0.230px;left:1479px;width:66px;text-align:right"><span style="margin-right:0.230px">0</span></div>
<div style="position:absolute;top:636px;height:19px;line-height:20px;font-size:13px;font-family:'Liberation Sans', sans-serif;font-weight:bold;color:#ff00ff;white-space:pre;overflow:hidden;letter-spacing:-0.230px;left:1548px;width:66px;text-align:right"><span style="margin-right:0.230px">265724</span></div>
<div style="position:absolute;top:636px;height:19px;line-height:20px;font-size:13px;font-family:'Liberation Sans', sans-serif;font-weight:bold;color:#ff00ff;white-space:pre;overflow:hidden;letter-spacing:-0.230px;left:1617px;width:66px;text-align:right"><span style="margin-right:0.230px">19</span></div>
<div style="position:absolute;top:636px;height:19px;line-height:20px;font-size:13px;font-family:'Liberation Sans', sans-serif;font-weight:bold;color:#ff00ff;white-space:pre;overflow:hidden;letter-spacing:-0.230px;left:1686px;width:66px;text-align:right"><span style="margin-right:0.230px">553</span></div>
<div style="position:absolute;top:636px;height:19px;line-height:20px;font-size:13px;font-family:'Liberation Sans', sans-serif;font-weight:bold;color:#ff00ff;white-space:pre;overflow:hidden;letter-spacing:-0.230px;left:1755px;width:64px;text-align:right"><span style="margin-right:0.230px">576</span></div>
<div style="position:absolute;top:636px;height:19px;line-height:20px;font-size:13px;font-family:'Liberation Sans', sans-serif;font-weight:bold;color:#ff00ff;white-space:pre;overflow:hidden;letter-spacing:-0.230px;left:1822px;width:66px;text-align:right"><span style="margin-right:0.230px">13</span></div>
<div style="position:absolute;top:636px;height:19px;line-height:20px;font-size:13px;font-family:'Liberation Sans', sans-serif;font-weight:bold;color:#ff00ff;white-space:pre;overflow:hidden;letter-spacing:-0.454px;left:1891px;width:7px"><span style="padding-left:2px">FINAL</span></div>
<div style="position:absolute;top:656px;height:19px;line-height:20px;font-size:13px;font-family:'Liberation Sans', sans-serif;color:#000;white-space:pre;overflow:hidden;letter-spacing:-0.230px;left:26px;width:66px;text-align:right"><span style="margin-right:0.230px">21</span></div>
<div style="position:absolute;top:656px;height:19px;line-height:20px;font-size:13px;font-family:'Liberation Sans', sans-serif;color:#000;white-space:pre;overflow:hidden;letter-spacing:-0.207px;left:95px;width:133px"><span style="padding-left:2px">UUTNE00042215948</span></div>
<div style="position:absolute;top:656px;height:19px;line-height:20px;font-size:13px;font-family:'Liberation Sans', sans-serif;color:#000;white-space:pre;overflow:hidden;letter-spacing:-0.398px;left:229px;width:186px"><span style="padding-left:2px">RAJU  .</span></div>
<div style="position:absolute;top:656px;height:19px;line-height:20px;font-size:13px;font-family:'Liberation Sans', sans-serif;color:#000;white-space:pre;overflow:hidden;letter-spacing:-0.230px;left:416px;width:68px"><span style="padding-left:2px">186357</span></div>
<div style="position:absolute;top:656px;height:19px;line-height:20px;font-size:13px;font-family:'Liberation Sans', sans-serif;color:#000;white-space:pre;overflow:hidden;letter-spacing:0.447px;left:558px;width:63px"><span style="padding-left:2px"> Visited at</span></div>
<div style="position:absolute;top:656px;height:19px;line-height:20px;font-size:13px;font-family:'Liberation Sans', sans-serif;color:#000;white-space:pre;overflow:hidden;letter-spacing:-0.566px;left:622px;width:63px"><span style="padding-left:2px">5 STR WITH</span></div>
<div style="position:absolute;top:656px;height:19px;line-height:20px;font-size:13px;font-family:'Liberation Sans', sans-serif;color:#000;white-space:pre;overflow:hidden;letter-spacing:-1.210px;left:686px;width:63px"><span style="padding-left:2px">EECO</span></div>
<div style="position:absolute;top:656px;height:19px;line-height:20px;font-size:13px;font-family:'Liberation Sans', sans-serif;color:#000;white-space:pre;overflow:hidden;letter-spacing:-0.158px;left:750px;width:63px"><span style="padding-left:2px">Eeco</span></div>
<div style="position:absolute;top:656px;height:19px;line-height:20px;font-size:13px;font-family:'Liberation Sans', sans-serif;color:#000;white-space:pre;overflow:hidden;letter-spacing:0.146px;left:1070px;width:63px"><span style="padding-left:2px">MH04GM3333</span></div>
<div style="position:absolute;top:656px;height:19px;line-height:20px;font-size:13px;font-family:'Liberation Sans', sans-serif;color:#000;white-space:pre;overflow:hidden;letter-spacing:-0.230px;left:1134px;width:66px;text-align:right"><span style="margin-right:0.230px">12900</span></div>
<div style="position:absolute;top:656px;height:19px;line-height:20px;font-size:13px;font-family:'Liberation Sans', sans-serif;color:#000;white-space:pre;overflow:hidden;letter-spacing:-0.230px;left:1203px;width:66px;text-align:right"><span style="margin-right:0.230px">0</span></div>
<div style="position:absolute;top:656px;height:19px;line-height:20px;font-size:13px;font-family:'Liberation Sans', sans-serif;color:#000;white-space:pre;overflow:hidden;letter-spacing:-0.230px;left:1272px;width:66px;text-align:right"><span style="margin-right:0.230px">151698</span></div>
<div style="position:absolute;top:656px;height:19px;line-height:20px;font-size:13px;font-family:'Liberation Sans', sans-serif;color:#000;white-space:pre;overflow:hidden;letter-spacing:-0.230px;left:1341px;width:66px;text-align:right"><span style="margin-right:0.230px">9440</span></div>
<div style="position:absolute;top:656px;height:19px;line-height:20px;font-size:13px;font-family:'Liberation Sans', sans-serif;color:#000;white-space:pre;overflow:hidden;letter-spacing:-0.230px;left:1410px;width:66px;text-align:right"><span style="margin-right:0.230px">20809</span></div>
<div style="position:absolute;top:656px;height:19px;line-height:20px;font-size:13px;font-family:'Liberation Sans', sans-serif;color:#000;white-space:pre;overflow:hidden;letter-spacing:-0.230px;left:1479px;width:66px;text-align:right"><span style="margin-right:0.230px">0</span></div>
<div style="position:absolute;top:656px;height:19px;line-height:20px;font-size:13px;font-family:'Liberation Sans', sans-serif;color:#000;white-space:pre;overflow:hidden;letter-spacing:-0.230px;left:1548px;width:66px;text-align:right"><span style="margin-right:0.230px">181947</span></div>
<div style="position:absolute;top:656px;height:19px;line-height:20px;font-size:13px;font-family:'Liberation Sans', sans-serif;color:#000;white-space:pre;overflow:hidden;letter-spacing:-0.230px;left:1617px;width:66px;text-align:right"><span style="margin-right:0.230px">12</span></div>
<div style="position:absolute;top:656px;height:19px;line-height:20px;font-size:13px;font-family:'Liberation Sans', sans-serif;color:#000;white-space:pre;overflow:hidden;letter-spacing:-0.230px;left:1686px;width:66px;text-align:right"><span style="margin-right:0.230px">363</span></div>
<div style="position:absolute;top:656px;height:19px;line-height:20px;font-size:13px;font-family:'Liberation Sans', sans-serif;color:#000;white-space:pre;overflow:hidden;letter-spacing:-0.230px;left:1755px;width:64px;text-align:right"><span style="margin-right:0.230px">386</span></div>
<div style="position:absolute;top:656px;height:19px;line-height:20px;font-size:13px;font-family:'Liberation Sans', sans-serif;color:#000;white-space:pre;overflow:hidden;letter-spacing:-0.230px;left:1822px;width:66px;text-align:right"><span style="margin-right:0.230px">12</span></div>
<div style="position:absolute;top:656px;height:19px;line-height:20px;font-size:13px;font-family:'Liberation Sans', sans-serif;color:#000;white-space:pre;overflow:hidden;letter-spacing:-1.171px;left:1891px;width:7px"><span style="padding-left:2px">KEEP</span></div>
<div style="position:absolute;top:676px;height:19px;line-height:20px;font-size:13px;font-family:'Liberation Sans', sans-serif;color:#000;white-space:pre;overflow:hidden;letter-spacing:-0.230px;left:26px;width:66px;text-align:right"><span style="margin-right:0.230px">22</span></div>
<div style="position:absolute;top:676px;height:19px;line-height:20px;font-size:13px;font-family:'Liberation Sans', sans-serif;color:#000;white-space:pre;overflow:hidden;letter-spacing:-0.429px;left:95px;width:133px"><span style="padding-left:2px">SPTNE00040608835</span></div>
<div style="position:absolute;top:676px;height:19px;line-height:20px;font-size:13px;font-family:'Liberation Sans', sans-serif;color:#000;white-space:pre;overflow:hidden;letter-spacing:0.101px;left:229px;width:186px"><span style="padding-left:2px">MOHAMMAD TASLEEM  NIZAM</span></div>
<div style="position:absolute;top:676px;height:19px;line-height:20px;font-size:13px;font-family:'Liberation Sans', sans-serif;color:#000;white-space:pre;overflow:hidden;letter-spacing:-0.230px;left:416px;width:68px"><span style="padding-left:2px">178256</span></div>
<div style="position:absolute;top:676px;height:19px;line-height:20px;font-size:13px;font-family:'Liberation Sans', sans-serif;color:#000;white-space:pre;overflow:hidden;letter-spacing:0.456px;left:558px;width:63px"><span style="padding-left:2px">Customer</span></div>
<div style="position:absolute;top:676px;height:19px;line-height:20px;font-size:13px;font-family:'Liberation Sans', sans-serif;color:#000;white-space:pre;overflow:hidden;letter-spacing:-0.230px;left:1134px;width:66px;text-align:right"><span style="margin-right:0.230px">6199</span></div>
<div style="position:absolute;top:676px;height:19px;line-height:20px;font-size:13px;font-family:'Liberation Sans', sans-serif;color:#000;white-space:pre;overflow:hidden;letter-spacing:-0.230px;left:1203px;width:66px;text-align:right"><span style="margin-right:0.230px">0</span></div>
<div style="position:absolute;top:676px;height:19px;line-height:20px;font-size:13px;font-family:'Liberation Sans', sans-serif;color:#000;white-space:pre;overflow:hidden;letter-spacing:-0.230px;left:1272px;width:66px;text-align:right"><span style="margin-right:0.230px">67698</span></div>
<div style="position:absolute;top:676px;height:19px;line-height:20px;font-size:13px;font-family:'Liberation Sans', sans-serif;color:#000;white-space:pre;overflow:hidden;letter-spacing:-0.230px;left:1341px;width:66px;text-align:right"><span style="margin-right:0.230px">12980</span></div>
<div style="position:absolute;top:676px;height:19px;line-height:20px;font-size:13px;font-family:'Liberation Sans', sans-serif;color:#000;white-space:pre;overflow:hidden;letter-spacing:-0.230px;left:1410px;width:66px;text-align:right"><span style="margin-right:0.230px">12773</span></div>
<div style="position:absolute;top:676px;height:19px;line-height:20px;font-size:13px;font-family:'Liberation Sans', sans-serif;color:#000;white-space:pre;overflow:hidden;letter-spacing:-0.230px;left:1479px;width:66px;text-align:right"><span style="margin-right:0.230px">0</span></div>
<div style="position:absolute;top:676px;height:19px;line-height:20px;font-size:13px;font-family:'Liberation Sans', sans-serif;color:#000;white-space:pre;overflow:hidden;letter-spacing:-0.230px;left:1548px;width:66px;text-align:right"><span style="margin-right:0.230px">93451</span></div>
<div style="position:absolute;top:676px;height:19px;line-height:20px;font-size:13px;font-family:'Liberation Sans', sans-serif;color:#000;white-space:pre;overflow:hidden;letter-spacing:-0.230px;left:1617px;width:66px;text-align:right"><span style="margin-right:0.230px">11</span></div>
<div style="position:absolute;top:676px;height:19px;line-height:20px;font-size:13px;font-family:'Liberation Sans', sans-serif;color:#000;white-space:pre;overflow:hidden;letter-spacing:-0.230px;left:1686px;width:66px;text-align:right"><span style="margin-right:0.230px">311</span></div>
<div style="position:absolute;top:676px;height:19px;line-height:20px;font-size:13px;font-family:'Liberation Sans', sans-serif;color:#000;white-space:pre;overflow:hidden;letter-spacing:-0.230px;left:1755px;width:64px;text-align:right"><span style="margin-right:0.230px">334</span></div>
<div style="position:absolute;top:676px;height:19px;line-height:20px;font-size:13px;font-family:'Liberation Sans', sans-serif;color:#000;white-space:pre;overflow:hidden;letter-spacing:-0.230px;left:1822px;width:66px;text-align:right"><span style="margin-right:0.230px">11</span></div>
<div style="position:absolute;top:676px;height:19px;line-height:20px;font-size:13px;font-family:'Liberation Sans', sans-serif;color:#000;white-space:pre;overflow:hidden;letter-spacing:-0.726px;left:1891px;width:7px"><span style="padding-left:2px">ALLOC</span></div>
<div style="position:absolute;top:696px;height:19px;line-height:20px;font-size:13px;font-family:'Liberation Sans', sans-serif;color:#000;white-space:pre;overflow:hidden;letter-spacing:-0.230px;left:26px;width:66px;text-align:right"><span style="margin-right:0.230px">23</span></div>
<div style="position:absolute;top:696px;height:19px;line-height:20px;font-size:13px;font-family:'Liberation Sans', sans-serif;color:#000;white-space:pre;overflow:hidden;letter-spacing:-0.339px;left:95px;width:133px"><span style="padding-left:2px">LATNE00035166489</span></div>
<div style="position:absolute;top:696px;height:19px;line-height:20px;font-size:13px;font-family:'Liberation Sans', sans-serif;color:#000;white-space:pre;overflow:hidden;letter-spacing:-0.248px;left:229px;width:186px"><span style="padding-left:2px">PRASANNA P GOWDA</span></div>
<div style="position:absolute;top:696px;height:19px;line-height:20px;font-size:13px;font-family:'Liberation Sans', sans-serif;color:#000;white-space:pre;overflow:hidden;letter-spacing:-0.153px;left:416px;width:68px"><span style="padding-left:2px">290331.4</span></div>
<div style="position:absolute;top:696px;height:19px;line-height:20px;font-size:13px;font-family:'Liberation Sans', sans-serif;color:#000;white-space:pre;overflow:hidden;letter-spacing:-0.230px;left:485px;width:72px"><span style="padding-left:2px">99000</span></div>
<div style="position:absolute;top:696px;height:19px;line-height:20px;font-size:13px;font-family:'Liberation Sans', sans-serif;color:#000;white-space:pre;overflow:hidden;letter-spacing:0.553px;left:558px;width:63px"><span style="padding-left:2px">Visited at</span></div>
<div style="position:absolute;top:696px;height:19px;line-height:20px;font-size:13px;font-family:'Liberation Sans', sans-serif;color:#000;white-space:pre;overflow:hidden;letter-spacing:0.428px;left:622px;width:447px"><span style="padding-left:0px">customer ress address customer  not arrange settlement amount till 25th</span></div>
<div style="position:absolute;top:696px;height:19px;line-height:20px;font-size:13px;font-family:'Liberation Sans', sans-serif;color:#000;white-space:pre;overflow:hidden;letter-spacing:-0.166px;left:1070px;width:63px"><span style="padding-left:2px">MH05DE3000</span></div>
<div style="position:absolute;top:696px;height:19px;line-height:20px;font-size:13px;font-family:'Liberation Sans', sans-serif;color:#000;white-space:pre;overflow:hidden;letter-spacing:-0.230px;left:1134px;width:66px;text-align:right"><span style="margin-right:0.230px">19488</span></div>
<div style="position:absolute;top:696px;height:19px;line-height:20px;font-size:13px;font-family:'Liberation Sans', sans-serif;color:#000;white-space:pre;overflow:hidden;letter-spacing:-0.230px;left:1203px;width:66px;text-align:right"><span style="margin-right:0.230px">0</span></div>
<div style="position:absolute;top:696px;height:19px;line-height:20px;font-size:13px;font-family:'Liberation Sans', sans-serif;color:#000;white-space:pre;overflow:hidden;letter-spacing:-0.230px;left:1272px;width:66px;text-align:right"><span style="margin-right:0.230px">252864</span></div>
<div style="position:absolute;top:696px;height:19px;line-height:20px;font-size:13px;font-family:'Liberation Sans', sans-serif;color:#000;white-space:pre;overflow:hidden;letter-spacing:-0.230px;left:1341px;width:66px;text-align:right"><span style="margin-right:0.230px">14100</span></div>
<div style="position:absolute;top:696px;height:19px;line-height:20px;font-size:13px;font-family:'Liberation Sans', sans-serif;color:#000;white-space:pre;overflow:hidden;letter-spacing:-0.230px;left:1410px;width:66px;text-align:right"><span style="margin-right:0.230px">58170</span></div>
<div style="position:absolute;top:696px;height:19px;line-height:20px;font-size:13px;font-family:'Liberation Sans', sans-serif;color:#000;white-space:pre;overflow:hidden;letter-spacing:-0.230px;left:1479px;width:66px;text-align:right"><span style="margin-right:0.230px">3834</span></div>
<div style="position:absolute;top:696px;height:19px;line-height:20px;font-size:13px;font-family:'Liberation Sans', sans-serif;color:#000;white-space:pre;overflow:hidden;letter-spacing:-0.230px;left:1548px;width:66px;text-align:right"><span style="margin-right:0.230px">328968</span></div>
<div style="position:absolute;top:696px;height:19px;line-height:20px;font-size:13px;font-family:'Liberation Sans', sans-serif;color:#000;white-space:pre;overflow:hidden;letter-spacing:-0.230px;left:1617px;width:66px;text-align:right"><span style="margin-right:0.230px">13</span></div>
<div style="position:absolute;top:696px;height:19px;line-height:20px;font-size:13px;font-family:'Liberation Sans', sans-serif;color:#000;white-space:pre;overflow:hidden;letter-spacing:-0.230px;left:1686px;width:66px;text-align:right"><span style="margin-right:0.230px">383</span></div>
<div style="position:absolute;top:696px;height:19px;line-height:20px;font-size:13px;font-family:'Liberation Sans', sans-serif;color:#000;white-space:pre;overflow:hidden;letter-spacing:-0.230px;left:1755px;width:64px;text-align:right"><span style="margin-right:0.230px">395</span></div>
<div style="position:absolute;top:696px;height:19px;line-height:20px;font-size:13px;font-family:'Liberation Sans', sans-serif;color:#000;white-space:pre;overflow:hidden;letter-spacing:-0.230px;left:1822px;width:66px;text-align:right"><span style="margin-right:0.230px">13</span></div>
<div style="position:absolute;top:716px;height:19px;line-height:20px;font-size:13px;font-family:'Liberation Sans', sans-serif;color:#000;white-space:pre;overflow:hidden;letter-spacing:-0.230px;left:485px;width:72px"><span style="padding-left:2px">408542</span></div>
<div style="position:absolute;left:748px;top:833px;width:63px;height:19px;border:2px solid #217346"></div>
<div style="position:absolute;left:811px;top:852px;width:5px;height:5px;background:#fff"></div>
<div style="position:absolute;left:812px;top:853px;width:4px;height:4px;background:#217346"></div>
<div style="position:absolute;left:1898px;top:215px;width:22px;height:776px;background:#fff"></div>
<div style="position:absolute;left:1898px;top:234px;width:1px;height:757px;background:#ababab"></div>
<div style="position:absolute;left:1902px;top:217px;width:15px;height:15px;border:1px solid #ababab;box-sizing:border-box;background:#fff"></div>
<svg style="position:absolute;left:1905px;top:222px" width="9" height="5" viewBox="0 0 9 5"><polygon points="0,5 4.5,0 9,5" fill="#777"/></svg>
<div style="position:absolute;left:1902px;top:232px;width:15px;height:723px;border:1px solid #ababab;border-top-width:2px;box-sizing:border-box;background:#fff"></div>
<div style="position:absolute;left:1902px;top:955px;width:15px;height:21px;background:#f0f0f0"></div>
<div style="position:absolute;left:1902px;top:976px;width:15px;height:15px;border:1px solid #ababab;box-sizing:border-box;background:#fff"></div>
<svg style="position:absolute;left:1905px;top:981px" width="9" height="5" viewBox="0 0 9 5"><polygon points="0,0 9,0 4.5,5" fill="#777"/></svg>
<div style="position:absolute;left:1599px;top:947px;height:22px;line-height:22px;text-align:left;font-size:19px;color:rgba(135,135,135,0.5);white-space:pre;font-family:'Liberation Sans',sans-serif;letter-spacing:0.4px">Activate Windows</div>
<div style="position:absolute;left:1599px;top:973px;height:16px;line-height:16px;text-align:left;font-size:14px;color:rgba(135,135,135,0.5);white-space:pre;font-family:'Liberation Sans',sans-serif;letter-spacing:0.4px">Go to Settings to activate Windows.</div>
<div style="position:absolute;left:0px;top:990px;width:1899px;height:1px;background:#ababab"></div>
<div style="position:absolute;left:0px;top:991px;width:1920px;height:27px;background:#f3f3f3"></div>
<svg style="position:absolute;left:26px;top:999px" width="6" height="10" viewBox="0 0 6 10"><polygon points="6,0 6,10 0,5" fill="#c6c6c6"/></svg>
<svg style="position:absolute;left:55px;top:999px" width="6" height="10" viewBox="0 0 6 10"><polygon points="0,0 0,10 6,5" fill="#c6c6c6"/></svg>
<div style="position:absolute;left:100px;top:990px;width:66px;height:25px;background:#fff;border-left:1px solid #ababab;border-right:1px solid #ababab;box-sizing:border-box"></div>
<div style="position:absolute;left:100px;top:1013px;width:66px;height:2px;background:#217346"></div>
<div style="position:absolute;left:100px;top:994px;width:66px;height:20px;line-height:20px;text-align:center;font-size:13px;color:#217346;white-space:pre;font-weight:bold;font-family:'Liberation Sans',sans-serif">Sheet1</div>
<div style="position:absolute;left:166px;top:994px;width:63px;height:20px;line-height:20px;text-align:center;font-size:13px;color:#444;white-space:pre;font-family:'Liberation Sans',sans-serif">Sheet2</div>
<div style="position:absolute;left:229px;top:994px;width:1px;height:19px;background:#ababab"></div>
<svg style="position:absolute;left:263px;top:995px" width="17" height="17" viewBox="0 0 17 17"><circle cx="8.5" cy="8.5" r="7.5" fill="none" stroke="#666" stroke-width="1.2"/><path d="M8.5 4.5v8M4.5 8.5h8" stroke="#666" stroke-width="1.8"/></svg>
<svg style="position:absolute;left:1152px;top:999px" width="3" height="12" viewBox="0 0 3 12"><rect x="0" y="0" width="2" height="2" fill="#999"/><rect x="0" y="4" width="2" height="2" fill="#999"/><rect x="0" y="8" width="2" height="2" fill="#999"/></svg>
<div style="position:absolute;left:1169px;top:997px;width:729px;height:15px;background:#e9e9e9"></div>
<div style="position:absolute;left:1169px;top:997px;width:15px;height:15px;border:1px solid #ababab;box-sizing:border-box;background:#fff"></div>
<svg style="position:absolute;left:1173px;top:1001px" width="5" height="8" viewBox="0 0 5 8"><polygon points="5,0 5,8 0,4" fill="#666"/></svg>
<div style="position:absolute;left:1184px;top:997px;width:134px;height:15px;border:1px solid #ababab;border-left-width:2px;box-sizing:border-box;background:#fff"></div>
<div style="position:absolute;left:1883px;top:997px;width:15px;height:15px;border:1px solid #ababab;box-sizing:border-box;background:#fff"></div>
<svg style="position:absolute;left:1888px;top:1001px" width="5" height="8" viewBox="0 0 5 8"><polygon points="0,0 0,8 5,4" fill="#666"/></svg>
<div style="position:absolute;left:0px;top:1018px;width:1920px;height:22px;background:#217346"></div>
<div style="position:absolute;left:7px;top:1019px;height:20px;line-height:20px;text-align:left;font-size:11px;color:#fff;white-space:pre;font-family:'Liberation Sans',sans-serif">READY</div>
<div style="position:absolute;left:1628px;top:1018px;width:38px;height:22px;background:#19603a"></div>
<svg style="position:absolute;left:1638px;top:1022px" width="16" height="14" viewBox="0 0 16 14"><rect x="0.5" y="0.5" width="15" height="13" fill="none" stroke="#fff"/><path d="M5.5 0v14M10.5 0v14M0 5h16M0 9.5h16" stroke="#fff"/></svg>
<svg style="position:absolute;left:1677px;top:1022px" width="16" height="14" viewBox="0 0 16 14"><rect x="0.5" y="0.5" width="15" height="13" fill="none" stroke="#fff"/><rect x="3.5" y="3" width="9" height="8" fill="none" stroke="#fff"/><path d="M5 5h6M5 7h6M5 9h6" stroke="#fff"/></svg>
<svg style="position:absolute;left:1715px;top:1021px" width="15" height="14" viewBox="0 0 15 14"><rect x="0.5" y="0.5" width="14" height="13" fill="none" stroke="#fff"/><rect x="3" y="1" width="3" height="8" fill="#fff"/><rect x="8" y="1" width="4" height="8" fill="#fff"/></svg>
<div style="position:absolute;left:1746px;top:1028px;width:8px;height:2px;background:#fff"></div>
<div style="position:absolute;left:1759px;top:1028px;width:86px;height:1px;background:#fff"></div>
<div style="position:absolute;left:1805px;top:1023px;width:3px;height:12px;background:#fff"></div>
<svg style="position:absolute;left:1859px;top:1023px" width="11" height="11" viewBox="0 0 11 11"><path d="M5.5 0v11M0 5.5h11" stroke="#fff" stroke-width="2"/></svg>
<div style="position:absolute;left:1882px;top:1020px;height:18px;line-height:18px;text-align:left;font-size:12px;color:#fff;white-space:pre;font-family:'Liberation Sans',sans-serif">100%</div>
<div style="position:absolute;left:0;top:1040px;width:1920px;height:40px;background:linear-gradient(90deg,#1f3441 0%,#233845 38%,#203142 60%,#1e2b47 80%,#1c2948 100%)"></div>
<svg style="position:absolute;left:16px;top:1052px" width="16" height="16" viewBox="0 0 16 16"><polygon points="0,2.2 6.7,1.3 6.7,7.6 0,7.6" fill="#fff"/><polygon points="7.6,1.1 16,0 16,7.6 7.6,7.6" fill="#fff"/><polygon points="0,8.4 6.7,8.4 6.7,14.7 0,13.8" fill="#fff"/><polygon points="7.6,8.4 16,8.4 16,16 7.6,14.9" fill="#fff"/></svg>
<div style="position:absolute;left:48px;top:1040px;width:344px;height:40px;background:#f0f0f0"></div>
<svg style="position:absolute;left:59px;top:1051px" width="18" height="18" viewBox="0 0 18 18"><circle cx="11" cy="7" r="5.5" fill="none" stroke="#222" stroke-width="1.4"/><path d="M7 11L1 17" stroke="#222" stroke-width="1.6"/></svg>
<div style="position:absolute;left:88px;top:1050px;height:20px;line-height:20px;text-align:left;font-size:14.5px;color:#333;white-space:pre;font-family:'Liberation Sans',sans-serif">Type here to search</div>
<svg style="position:absolute;left:406px;top:1050px" width="20" height="20" viewBox="0 0 20 20"><circle cx="10" cy="10" r="7.5" fill="none" stroke="#fff" stroke-width="1.8"/></svg>
<svg style="position:absolute;left:455px;top:1051px" width="18" height="18" viewBox="0 0 18 18"><rect x="1" y="3.5" width="11" height="10" fill="none" stroke="#fff" stroke-width="1.4"/><path d="M0 1h13M0 16h13M15.5 1v2M15.5 5v11" stroke="#fff" stroke-width="1.4"/></svg>
<svg style="position:absolute;left:503px;top:1047px" width="25" height="25" viewBox="0 0 25 25"><defs><linearGradient id="eg" x1="0" y1="0" x2="0.6" y2="1"><stop offset="0" stop-color="#39c6f3"/><stop offset="0.55" stop-color="#1b8ad8"/><stop offset="1" stop-color="#0b4f9c"/></linearGradient><linearGradient id="eg2" x1="0" y1="0" x2="1" y2="0.3"><stop offset="0" stop-color="#3fc7c7"/><stop offset="1" stop-color="#7ddc56"/></linearGradient></defs><circle cx="12.5" cy="12.5" r="12" fill="url(#eg)"/><path d="M4 7.5C7 1.5 18 0.5 23 7c2.5 3.5 1.5 8-2.5 8.5-3.5.5-5.5-1-5.5-3.5 0-2.5-3-4.5-6.5-3.5C6 9.5 4.5 11 3.5 13z" fill="url(#eg2)"/><path d="M8 15c1 5 6 8 11 6" stroke="#0d5aa8" stroke-width="2.5" fill="none"/></svg>
<svg style="position:absolute;left:553px;top:1050px" width="22" height="19" viewBox="0 0 22 19"><path d="M0 2h8l2 2h12v15H0z" fill="#f8d775"/><rect x="0" y="5" width="22" height="14" fill="#ffd957"/><rect x="6" y="11" width="10" height="8" fill="#3a8fd6"/><rect x="9" y="14" width="4" height="5" fill="#ffd957"/></svg>
<svg style="position:absolute;left:601px;top:1048px" width="24" height="24" viewBox="0 0 24 24"><circle cx="12" cy="12" r="11.5" fill="#db4437"/><path d="M12 12L2 6.2A11.5 11.5 0 0 0 8 23z" fill="#0f9d58"/><path d="M12 12L22 6.2A11.5 11.5 0 0 1 8 23z" fill="#ffcd40"/><path d="M12 12H23.5A11.5 11.5 0 0 0 22 6.2z" fill="#ffcd40"/><circle cx="12" cy="12" r="5.3" fill="#fff"/><circle cx="12" cy="12" r="4.2" fill="#4285f4"/></svg>
<div style="position:absolute;left:638px;top:1040px;width:44px;height:40px;background:#37474f"></div>
<div style="position:absolute;left:682px;top:1040px;width:2px;height:40px;background:#2a3a44"></div>
<svg style="position:absolute;left:650px;top:1048px" width="22" height="23" viewBox="0 0 22 23"><rect x="9" y="2" width="12" height="19" fill="none" stroke="#fff" stroke-width="1"/><path d="M12 5h8M12 8h8M12 11h8M12 14h8M12 17h8" stroke="#fff" stroke-width="0.9"/><polygon points="0,3 12,0 12,23 0,20" fill="#1d7044"/><text x="2.5" y="16" font-size="11" font-weight="bold" fill="#fff" font-family="Liberation Sans">X</text></svg>
<svg style="position:absolute;left:699px;top:1050px" width="23" height="19" viewBox="0 0 23 19"><rect x="0.5" y="0.5" width="22" height="18" fill="#000" stroke="#c8c8c8"/><rect x="1" y="1" width="21" height="2" fill="#c8c8c8"/><text x="2" y="10" font-size="6" fill="#ddd" font-family="Liberation Mono">C:\</text><path d="M12 9h8" stroke="#ddd"/></svg>
<div style="position:absolute;left:544px;top:1078px;width:40px;height:2px;background:#76b9ed"></div>
<div style="position:absolute;left:593px;top:1078px;width:40px;height:2px;background:#76b9ed"></div>
<div style="position:absolute;left:638px;top:1078px;width:48px;height:2px;background:#76b9ed"></div>
<div style="position:absolute;left:691px;top:1078px;width:40px;height:2px;background:#76b9ed"></div>
<svg style="position:absolute;left:1547px;top:1051px" width="24" height="17" viewBox="0 0 24 17"><rect x="0.8" y="0.8" width="22" height="15" fill="none" stroke="#fff" stroke-width="1.4" rx="1"/><rect x="4" y="5" width="7" height="6" fill="none" stroke="#fff" stroke-width="1.2"/><path d="M13 5h6M13 8h6M13 11h6" stroke="#fff" stroke-width="1.2"/></svg>
<div style="position:absolute;left:1580px;top:1050px;height:20px;line-height:20px;text-align:left;font-size:14px;color:#fff;white-space:pre;font-family:'Liberation Sans',sans-serif">33°C  Smoke</div>
<svg style="position:absolute;left:1676px;top:1055px" width="13" height="8" viewBox="0 0 13 8"><path d="M1 7l5.5-5.5L12 7" fill="none" stroke="#fff" stroke-width="1.3"/></svg>
<svg style="position:absolute;left:1700px;top:1052px" width="12" height="17" viewBox="0 0 12 17"><rect x="1" y="4" width="8" height="9" rx="2" fill="none" stroke="#fff" stroke-width="1.2"/><path d="M9 7h2v3H9M3 1h4M3 16h4" stroke="#fff" stroke-width="1.2" fill="none"/></svg>
<svg style="position:absolute;left:1722px;top:1052px" width="17" height="16" viewBox="0 0 17 16"><rect x="2" y="1" width="14" height="10" fill="none" stroke="#fff" stroke-width="1.2"/><path d="M9 11v3M5 15h8" stroke="#fff" stroke-width="1.2"/><rect x="0.5" y="0.5" width="4" height="4" fill="#1d2b47" stroke="#fff"/></svg>
<svg style="position:absolute;left:1746px;top:1052px" width="17" height="16" viewBox="0 0 17 16"><path d="M1 5h3l4-4v14l-4-4H1z" fill="none" stroke="#fff" stroke-width="1.2"/><path d="M10 5q2 3 0 6M12.5 3q3.5 5 0 10M15 1q5 7 0 14" fill="none" stroke="#fff" stroke-width="1.1"/></svg>
<div style="position:absolute;left:1771px;top:1045px;width:30px;height:16px;line-height:16px;text-align:center;font-size:13px;color:#fff;white-space:pre;font-family:'Liberation Sans',sans-serif">ENG</div>
<div style="position:absolute;left:1771px;top:1061px;width:30px;height:16px;line-height:16px;text-align:center;font-size:13px;color:#fff;white-space:pre;font-family:'Liberation Sans',sans-serif">US</div>
<div style="position:absolute;left:1795px;top:1045px;width:80px;height:16px;line-height:16px;text-align:center;font-size:13px;color:#fff;white-space:pre;font-family:'Liberation Sans',sans-serif">3:54 PM</div>
<div style="position:absolute;left:1795px;top:1061px;width:80px;height:16px;line-height:16px;text-align:center;font-size:13px;color:#fff;white-space:pre;font-family:'Liberation Sans',sans-serif">7/19/2022</div>
<svg style="position:absolute;left:1878px;top:1051px" width="26" height="24" viewBox="0 0 26 24"><path d="M1 1h16v11H7l-4 3v-3H1z" fill="#fff"/><path d="M4 4h10M4 6.5h10M4 9h8" stroke="#1d2a47" stroke-width="1"/><circle cx="16" cy="16" r="6.5" fill="#2a2a2a" stroke="#888"/><text x="13.3" y="20" font-size="9.5" font-weight="bold" fill="#fff" font-family="Liberation Sans">1</text></svg>
<div style="position:absolute;left:1918px;top:1040px;width:1px;height:40px;background:#3b4a63"></div>
</body></html>
